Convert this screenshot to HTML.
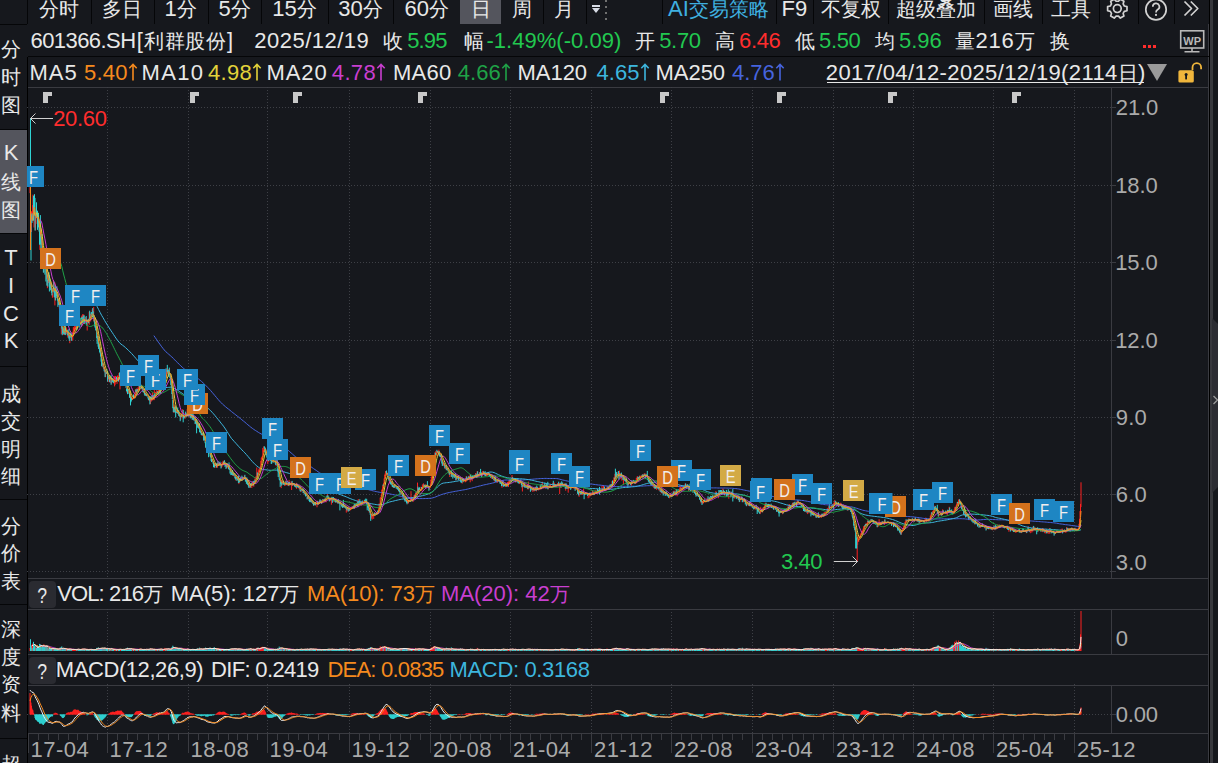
<!DOCTYPE html>
<html><head><meta charset="utf-8"><style>
*{margin:0;padding:0;box-sizing:border-box}
html,body{width:1218px;height:763px;overflow:hidden;background:#16181d;font-family:"Liberation Sans",sans-serif;color:#e8e8e8}
.a{position:absolute;white-space:nowrap;font-size:20px;line-height:20px}
.t{position:absolute;white-space:nowrap;font-size:20px;line-height:20px;height:20px}
.l{font-size:22px}
svg.ar{position:relative;display:inline-block;vertical-align:top;margin-top:0px;margin-left:0px}
.sep{position:absolute;background:#050608}
svg{position:absolute;left:0;top:0}
svg text{font-family:"Liberation Sans",sans-serif}
</style></head><body>
<svg width="1218" height="763" viewBox="0 0 1218 763">
<line x1="28" y1="87.5" x2="1208" y2="87.5" stroke="#3a3b41" stroke-width="1" />
<line x1="28" y1="578.5" x2="1208" y2="578.5" stroke="#3a3b41" stroke-width="1" />
<line x1="28" y1="609.5" x2="1208" y2="609.5" stroke="#3a3b41" stroke-width="1" />
<line x1="28" y1="654.5" x2="1208" y2="654.5" stroke="#3a3b41" stroke-width="1" />
<line x1="28" y1="685.5" x2="1208" y2="685.5" stroke="#3a3b41" stroke-width="1" />
<line x1="28" y1="733.5" x2="1208" y2="733.5" stroke="#3a3b41" stroke-width="1" />
<line x1="1208.5" y1="24" x2="1208.5" y2="763" stroke="#3a3b41" stroke-width="1" />
<line x1="1209.5" y1="0" x2="1209.5" y2="763" stroke="#000" stroke-width="1" />
<rect x="1210" y="0" width="3" height="763" fill="#37383d" />
<line x1="1111.5" y1="87" x2="1111.5" y2="578" stroke="#3a3b41" stroke-width="1" />
<line x1="1111.5" y1="609" x2="1111.5" y2="654" stroke="#3a3b41" stroke-width="1" />
<line x1="1111.5" y1="685" x2="1111.5" y2="733" stroke="#3a3b41" stroke-width="1" />
<line x1="27.5" y1="57" x2="27.5" y2="763" stroke="#000" stroke-width="1" />
<line x1="107.5" y1="87" x2="107.5" y2="578" stroke="#3e4046" stroke-width="1" stroke-dasharray="1 2"/>
<line x1="107.5" y1="609" x2="107.5" y2="654" stroke="#3e4046" stroke-width="1" stroke-dasharray="1 2"/>
<line x1="107.5" y1="684" x2="107.5" y2="733" stroke="#3e4046" stroke-width="1" stroke-dasharray="1 2"/>
<line x1="188.5" y1="87" x2="188.5" y2="578" stroke="#3e4046" stroke-width="1" stroke-dasharray="1 2"/>
<line x1="188.5" y1="609" x2="188.5" y2="654" stroke="#3e4046" stroke-width="1" stroke-dasharray="1 2"/>
<line x1="188.5" y1="684" x2="188.5" y2="733" stroke="#3e4046" stroke-width="1" stroke-dasharray="1 2"/>
<line x1="267.5" y1="87" x2="267.5" y2="578" stroke="#3e4046" stroke-width="1" stroke-dasharray="1 2"/>
<line x1="267.5" y1="609" x2="267.5" y2="654" stroke="#3e4046" stroke-width="1" stroke-dasharray="1 2"/>
<line x1="267.5" y1="684" x2="267.5" y2="733" stroke="#3e4046" stroke-width="1" stroke-dasharray="1 2"/>
<line x1="349.5" y1="87" x2="349.5" y2="578" stroke="#3e4046" stroke-width="1" stroke-dasharray="1 2"/>
<line x1="349.5" y1="609" x2="349.5" y2="654" stroke="#3e4046" stroke-width="1" stroke-dasharray="1 2"/>
<line x1="349.5" y1="684" x2="349.5" y2="733" stroke="#3e4046" stroke-width="1" stroke-dasharray="1 2"/>
<line x1="430.5" y1="87" x2="430.5" y2="578" stroke="#3e4046" stroke-width="1" stroke-dasharray="1 2"/>
<line x1="430.5" y1="609" x2="430.5" y2="654" stroke="#3e4046" stroke-width="1" stroke-dasharray="1 2"/>
<line x1="430.5" y1="684" x2="430.5" y2="733" stroke="#3e4046" stroke-width="1" stroke-dasharray="1 2"/>
<line x1="510.5" y1="87" x2="510.5" y2="578" stroke="#3e4046" stroke-width="1" stroke-dasharray="1 2"/>
<line x1="510.5" y1="609" x2="510.5" y2="654" stroke="#3e4046" stroke-width="1" stroke-dasharray="1 2"/>
<line x1="510.5" y1="684" x2="510.5" y2="733" stroke="#3e4046" stroke-width="1" stroke-dasharray="1 2"/>
<line x1="591.5" y1="87" x2="591.5" y2="578" stroke="#3e4046" stroke-width="1" stroke-dasharray="1 2"/>
<line x1="591.5" y1="609" x2="591.5" y2="654" stroke="#3e4046" stroke-width="1" stroke-dasharray="1 2"/>
<line x1="591.5" y1="684" x2="591.5" y2="733" stroke="#3e4046" stroke-width="1" stroke-dasharray="1 2"/>
<line x1="671.5" y1="87" x2="671.5" y2="578" stroke="#3e4046" stroke-width="1" stroke-dasharray="1 2"/>
<line x1="671.5" y1="609" x2="671.5" y2="654" stroke="#3e4046" stroke-width="1" stroke-dasharray="1 2"/>
<line x1="671.5" y1="684" x2="671.5" y2="733" stroke="#3e4046" stroke-width="1" stroke-dasharray="1 2"/>
<line x1="752.5" y1="87" x2="752.5" y2="578" stroke="#3e4046" stroke-width="1" stroke-dasharray="1 2"/>
<line x1="752.5" y1="609" x2="752.5" y2="654" stroke="#3e4046" stroke-width="1" stroke-dasharray="1 2"/>
<line x1="752.5" y1="684" x2="752.5" y2="733" stroke="#3e4046" stroke-width="1" stroke-dasharray="1 2"/>
<line x1="833.5" y1="87" x2="833.5" y2="578" stroke="#3e4046" stroke-width="1" stroke-dasharray="1 2"/>
<line x1="833.5" y1="609" x2="833.5" y2="654" stroke="#3e4046" stroke-width="1" stroke-dasharray="1 2"/>
<line x1="833.5" y1="684" x2="833.5" y2="733" stroke="#3e4046" stroke-width="1" stroke-dasharray="1 2"/>
<line x1="913.5" y1="87" x2="913.5" y2="578" stroke="#3e4046" stroke-width="1" stroke-dasharray="1 2"/>
<line x1="913.5" y1="609" x2="913.5" y2="654" stroke="#3e4046" stroke-width="1" stroke-dasharray="1 2"/>
<line x1="913.5" y1="684" x2="913.5" y2="733" stroke="#3e4046" stroke-width="1" stroke-dasharray="1 2"/>
<line x1="993.5" y1="87" x2="993.5" y2="578" stroke="#3e4046" stroke-width="1" stroke-dasharray="1 2"/>
<line x1="993.5" y1="609" x2="993.5" y2="654" stroke="#3e4046" stroke-width="1" stroke-dasharray="1 2"/>
<line x1="993.5" y1="684" x2="993.5" y2="733" stroke="#3e4046" stroke-width="1" stroke-dasharray="1 2"/>
<line x1="1074.5" y1="87" x2="1074.5" y2="578" stroke="#3e4046" stroke-width="1" stroke-dasharray="1 2"/>
<line x1="1074.5" y1="609" x2="1074.5" y2="654" stroke="#3e4046" stroke-width="1" stroke-dasharray="1 2"/>
<line x1="1074.5" y1="684" x2="1074.5" y2="733" stroke="#3e4046" stroke-width="1" stroke-dasharray="1 2"/>
<line x1="27" y1="107.5" x2="1111" y2="107.5" stroke="#3e4046" stroke-width="1" stroke-dasharray="1 2"/>
<line x1="1111" y1="107.5" x2="1116" y2="107.5" stroke="#3a3b41" stroke-width="1" />
<line x1="27" y1="185.5" x2="1111" y2="185.5" stroke="#3e4046" stroke-width="1" stroke-dasharray="1 2"/>
<line x1="1111" y1="185.5" x2="1116" y2="185.5" stroke="#3a3b41" stroke-width="1" />
<line x1="27" y1="262.5" x2="1111" y2="262.5" stroke="#3e4046" stroke-width="1" stroke-dasharray="1 2"/>
<line x1="1111" y1="262.5" x2="1116" y2="262.5" stroke="#3a3b41" stroke-width="1" />
<line x1="27" y1="340.5" x2="1111" y2="340.5" stroke="#3e4046" stroke-width="1" stroke-dasharray="1 2"/>
<line x1="1111" y1="340.5" x2="1116" y2="340.5" stroke="#3a3b41" stroke-width="1" />
<line x1="27" y1="417.5" x2="1111" y2="417.5" stroke="#3e4046" stroke-width="1" stroke-dasharray="1 2"/>
<line x1="1111" y1="417.5" x2="1116" y2="417.5" stroke="#3a3b41" stroke-width="1" />
<line x1="27" y1="494.5" x2="1111" y2="494.5" stroke="#3e4046" stroke-width="1" stroke-dasharray="1 2"/>
<line x1="1111" y1="494.5" x2="1116" y2="494.5" stroke="#3a3b41" stroke-width="1" />
<line x1="27" y1="571.5" x2="1111" y2="571.5" stroke="#3e4046" stroke-width="1" stroke-dasharray="1 2"/>
<line x1="1111" y1="571.5" x2="1116" y2="571.5" stroke="#3a3b41" stroke-width="1" />
<line x1="27" y1="714.5" x2="1111" y2="714.5" stroke="#3e4046" stroke-width="1" stroke-dasharray="1 2"/>
<line x1="1111" y1="714.5" x2="1116" y2="714.5" stroke="#3a3b41" stroke-width="1" />
<line x1="28.5" y1="733" x2="28.5" y2="753" stroke="#3a3b41" stroke-width="1" />
<line x1="38.5" y1="733" x2="38.5" y2="740" stroke="#3a3b41" stroke-width="1" />
<line x1="48.5" y1="733" x2="48.5" y2="740" stroke="#3a3b41" stroke-width="1" />
<line x1="58.5" y1="733" x2="58.5" y2="740" stroke="#3a3b41" stroke-width="1" />
<line x1="68.5" y1="733" x2="68.5" y2="740" stroke="#3a3b41" stroke-width="1" />
<line x1="77.5" y1="733" x2="77.5" y2="740" stroke="#3a3b41" stroke-width="1" />
<line x1="87.5" y1="733" x2="87.5" y2="740" stroke="#3a3b41" stroke-width="1" />
<line x1="97.5" y1="733" x2="97.5" y2="740" stroke="#3a3b41" stroke-width="1" />
<line x1="107.5" y1="733" x2="107.5" y2="753" stroke="#3a3b41" stroke-width="1" />
<line x1="117.5" y1="733" x2="117.5" y2="740" stroke="#3a3b41" stroke-width="1" />
<line x1="127.5" y1="733" x2="127.5" y2="740" stroke="#3a3b41" stroke-width="1" />
<line x1="137.5" y1="733" x2="137.5" y2="740" stroke="#3a3b41" stroke-width="1" />
<line x1="148.5" y1="733" x2="148.5" y2="740" stroke="#3a3b41" stroke-width="1" />
<line x1="158.5" y1="733" x2="158.5" y2="740" stroke="#3a3b41" stroke-width="1" />
<line x1="168.5" y1="733" x2="168.5" y2="740" stroke="#3a3b41" stroke-width="1" />
<line x1="178.5" y1="733" x2="178.5" y2="740" stroke="#3a3b41" stroke-width="1" />
<line x1="188.5" y1="733" x2="188.5" y2="753" stroke="#3a3b41" stroke-width="1" />
<line x1="198.5" y1="733" x2="198.5" y2="740" stroke="#3a3b41" stroke-width="1" />
<line x1="208.5" y1="733" x2="208.5" y2="740" stroke="#3a3b41" stroke-width="1" />
<line x1="218.5" y1="733" x2="218.5" y2="740" stroke="#3a3b41" stroke-width="1" />
<line x1="228.5" y1="733" x2="228.5" y2="740" stroke="#3a3b41" stroke-width="1" />
<line x1="237.5" y1="733" x2="237.5" y2="740" stroke="#3a3b41" stroke-width="1" />
<line x1="247.5" y1="733" x2="247.5" y2="740" stroke="#3a3b41" stroke-width="1" />
<line x1="257.5" y1="733" x2="257.5" y2="740" stroke="#3a3b41" stroke-width="1" />
<line x1="267.5" y1="733" x2="267.5" y2="753" stroke="#3a3b41" stroke-width="1" />
<line x1="277.5" y1="733" x2="277.5" y2="740" stroke="#3a3b41" stroke-width="1" />
<line x1="288.5" y1="733" x2="288.5" y2="740" stroke="#3a3b41" stroke-width="1" />
<line x1="298.5" y1="733" x2="298.5" y2="740" stroke="#3a3b41" stroke-width="1" />
<line x1="308.5" y1="733" x2="308.5" y2="740" stroke="#3a3b41" stroke-width="1" />
<line x1="318.5" y1="733" x2="318.5" y2="740" stroke="#3a3b41" stroke-width="1" />
<line x1="328.5" y1="733" x2="328.5" y2="740" stroke="#3a3b41" stroke-width="1" />
<line x1="339.5" y1="733" x2="339.5" y2="740" stroke="#3a3b41" stroke-width="1" />
<line x1="349.5" y1="733" x2="349.5" y2="753" stroke="#3a3b41" stroke-width="1" />
<line x1="359.5" y1="733" x2="359.5" y2="740" stroke="#3a3b41" stroke-width="1" />
<line x1="369.5" y1="733" x2="369.5" y2="740" stroke="#3a3b41" stroke-width="1" />
<line x1="379.5" y1="733" x2="379.5" y2="740" stroke="#3a3b41" stroke-width="1" />
<line x1="390.5" y1="733" x2="390.5" y2="740" stroke="#3a3b41" stroke-width="1" />
<line x1="400.5" y1="733" x2="400.5" y2="740" stroke="#3a3b41" stroke-width="1" />
<line x1="410.5" y1="733" x2="410.5" y2="740" stroke="#3a3b41" stroke-width="1" />
<line x1="420.5" y1="733" x2="420.5" y2="740" stroke="#3a3b41" stroke-width="1" />
<line x1="430.5" y1="733" x2="430.5" y2="753" stroke="#3a3b41" stroke-width="1" />
<line x1="440.5" y1="733" x2="440.5" y2="740" stroke="#3a3b41" stroke-width="1" />
<line x1="450.5" y1="733" x2="450.5" y2="740" stroke="#3a3b41" stroke-width="1" />
<line x1="460.5" y1="733" x2="460.5" y2="740" stroke="#3a3b41" stroke-width="1" />
<line x1="470.5" y1="733" x2="470.5" y2="740" stroke="#3a3b41" stroke-width="1" />
<line x1="480.5" y1="733" x2="480.5" y2="740" stroke="#3a3b41" stroke-width="1" />
<line x1="490.5" y1="733" x2="490.5" y2="740" stroke="#3a3b41" stroke-width="1" />
<line x1="500.5" y1="733" x2="500.5" y2="740" stroke="#3a3b41" stroke-width="1" />
<line x1="510.5" y1="733" x2="510.5" y2="753" stroke="#3a3b41" stroke-width="1" />
<line x1="520.5" y1="733" x2="520.5" y2="740" stroke="#3a3b41" stroke-width="1" />
<line x1="530.5" y1="733" x2="530.5" y2="740" stroke="#3a3b41" stroke-width="1" />
<line x1="540.5" y1="733" x2="540.5" y2="740" stroke="#3a3b41" stroke-width="1" />
<line x1="550.5" y1="733" x2="550.5" y2="740" stroke="#3a3b41" stroke-width="1" />
<line x1="561.5" y1="733" x2="561.5" y2="740" stroke="#3a3b41" stroke-width="1" />
<line x1="571.5" y1="733" x2="571.5" y2="740" stroke="#3a3b41" stroke-width="1" />
<line x1="581.5" y1="733" x2="581.5" y2="740" stroke="#3a3b41" stroke-width="1" />
<line x1="591.5" y1="733" x2="591.5" y2="753" stroke="#3a3b41" stroke-width="1" />
<line x1="601.5" y1="733" x2="601.5" y2="740" stroke="#3a3b41" stroke-width="1" />
<line x1="611.5" y1="733" x2="611.5" y2="740" stroke="#3a3b41" stroke-width="1" />
<line x1="621.5" y1="733" x2="621.5" y2="740" stroke="#3a3b41" stroke-width="1" />
<line x1="631.5" y1="733" x2="631.5" y2="740" stroke="#3a3b41" stroke-width="1" />
<line x1="641.5" y1="733" x2="641.5" y2="740" stroke="#3a3b41" stroke-width="1" />
<line x1="651.5" y1="733" x2="651.5" y2="740" stroke="#3a3b41" stroke-width="1" />
<line x1="661.5" y1="733" x2="661.5" y2="740" stroke="#3a3b41" stroke-width="1" />
<line x1="671.5" y1="733" x2="671.5" y2="753" stroke="#3a3b41" stroke-width="1" />
<line x1="681.5" y1="733" x2="681.5" y2="740" stroke="#3a3b41" stroke-width="1" />
<line x1="691.5" y1="733" x2="691.5" y2="740" stroke="#3a3b41" stroke-width="1" />
<line x1="701.5" y1="733" x2="701.5" y2="740" stroke="#3a3b41" stroke-width="1" />
<line x1="712.5" y1="733" x2="712.5" y2="740" stroke="#3a3b41" stroke-width="1" />
<line x1="722.5" y1="733" x2="722.5" y2="740" stroke="#3a3b41" stroke-width="1" />
<line x1="732.5" y1="733" x2="732.5" y2="740" stroke="#3a3b41" stroke-width="1" />
<line x1="742.5" y1="733" x2="742.5" y2="740" stroke="#3a3b41" stroke-width="1" />
<line x1="752.5" y1="733" x2="752.5" y2="753" stroke="#3a3b41" stroke-width="1" />
<line x1="762.5" y1="733" x2="762.5" y2="740" stroke="#3a3b41" stroke-width="1" />
<line x1="772.5" y1="733" x2="772.5" y2="740" stroke="#3a3b41" stroke-width="1" />
<line x1="782.5" y1="733" x2="782.5" y2="740" stroke="#3a3b41" stroke-width="1" />
<line x1="792.5" y1="733" x2="792.5" y2="740" stroke="#3a3b41" stroke-width="1" />
<line x1="803.5" y1="733" x2="803.5" y2="740" stroke="#3a3b41" stroke-width="1" />
<line x1="813.5" y1="733" x2="813.5" y2="740" stroke="#3a3b41" stroke-width="1" />
<line x1="823.5" y1="733" x2="823.5" y2="740" stroke="#3a3b41" stroke-width="1" />
<line x1="833.5" y1="733" x2="833.5" y2="753" stroke="#3a3b41" stroke-width="1" />
<line x1="843.5" y1="733" x2="843.5" y2="740" stroke="#3a3b41" stroke-width="1" />
<line x1="853.5" y1="733" x2="853.5" y2="740" stroke="#3a3b41" stroke-width="1" />
<line x1="863.5" y1="733" x2="863.5" y2="740" stroke="#3a3b41" stroke-width="1" />
<line x1="873.5" y1="733" x2="873.5" y2="740" stroke="#3a3b41" stroke-width="1" />
<line x1="883.5" y1="733" x2="883.5" y2="740" stroke="#3a3b41" stroke-width="1" />
<line x1="893.5" y1="733" x2="893.5" y2="740" stroke="#3a3b41" stroke-width="1" />
<line x1="903.5" y1="733" x2="903.5" y2="740" stroke="#3a3b41" stroke-width="1" />
<line x1="913.5" y1="733" x2="913.5" y2="753" stroke="#3a3b41" stroke-width="1" />
<line x1="923.5" y1="733" x2="923.5" y2="740" stroke="#3a3b41" stroke-width="1" />
<line x1="933.5" y1="733" x2="933.5" y2="740" stroke="#3a3b41" stroke-width="1" />
<line x1="943.5" y1="733" x2="943.5" y2="740" stroke="#3a3b41" stroke-width="1" />
<line x1="953.5" y1="733" x2="953.5" y2="740" stroke="#3a3b41" stroke-width="1" />
<line x1="963.5" y1="733" x2="963.5" y2="740" stroke="#3a3b41" stroke-width="1" />
<line x1="973.5" y1="733" x2="973.5" y2="740" stroke="#3a3b41" stroke-width="1" />
<line x1="983.5" y1="733" x2="983.5" y2="740" stroke="#3a3b41" stroke-width="1" />
<line x1="993.5" y1="733" x2="993.5" y2="753" stroke="#3a3b41" stroke-width="1" />
<line x1="1003.5" y1="733" x2="1003.5" y2="740" stroke="#3a3b41" stroke-width="1" />
<line x1="1013.5" y1="733" x2="1013.5" y2="740" stroke="#3a3b41" stroke-width="1" />
<line x1="1023.5" y1="733" x2="1023.5" y2="740" stroke="#3a3b41" stroke-width="1" />
<line x1="1034.5" y1="733" x2="1034.5" y2="740" stroke="#3a3b41" stroke-width="1" />
<line x1="1044.5" y1="733" x2="1044.5" y2="740" stroke="#3a3b41" stroke-width="1" />
<line x1="1054.5" y1="733" x2="1054.5" y2="740" stroke="#3a3b41" stroke-width="1" />
<line x1="1064.5" y1="733" x2="1064.5" y2="740" stroke="#3a3b41" stroke-width="1" />
<line x1="1074.5" y1="733" x2="1074.5" y2="753" stroke="#3a3b41" stroke-width="1" />
<path d="M30.0 184.1V193.1M31.5 211.3V232.0M32.5 205.1V220.8M33.0 194.6V209.3M34.0 198.0V227.5M35.5 215.6V230.4M36.0 212.3V223.9M37.0 210.9V216.7M38.0 213.3V225.6M39.9 222.1V249.9M41.4 228.7V244.8M42.9 255.4V260.6M43.9 254.1V272.5M45.4 258.2V268.9M46.4 265.7V279.3M47.4 279.4V288.2M48.4 272.0V283.1M49.9 281.8V287.8M50.9 284.7V288.6M52.4 293.7V297.7M52.9 288.7V297.3M53.4 280.0V290.7M54.9 282.5V305.4M55.9 293.3V298.2M58.4 300.2V305.2M59.3 298.2V308.5M60.8 316.8V318.9M61.3 315.6V334.3M63.8 330.6V335.0M64.8 326.0V334.9M65.8 332.0V334.3M66.3 327.4V333.8M66.8 328.9V331.4M67.8 333.3V337.6M68.3 332.7V336.6M69.8 333.2V343.2M70.3 333.3V334.8M71.8 335.6V340.3M72.3 335.2V337.6M72.8 331.7V340.5M73.3 327.4V336.2M73.8 326.9V332.8M74.3 327.8V331.3M74.8 323.9V330.8M75.3 323.1V328.9M75.8 326.9V329.9M76.3 326.7V330.0M77.3 324.5V328.6M77.8 318.0V325.8M80.2 319.9V324.7M81.7 315.6V324.7M82.7 314.1V325.6M83.7 314.3V323.2M85.2 319.9V322.9M85.7 317.0V320.5M87.2 319.2V330.5M89.2 311.7V324.8M90.2 317.0V319.7M90.7 313.7V321.5M92.2 309.6V313.8M93.7 306.9V321.2M97.6 335.8V339.0M99.1 345.5V348.3M102.6 362.6V366.7M103.6 366.7V369.1M104.6 367.9V372.4M105.6 372.4V377.2M108.1 376.2V382.1M108.6 376.4V379.4M110.1 378.7V382.9M110.6 375.9V378.9M111.6 377.6V383.6M112.1 377.8V381.7M113.1 378.0V381.0M114.1 380.6V383.8M114.6 376.3V386.4M115.1 375.9V384.8M115.6 376.1V382.0M116.0 376.7V382.1M117.0 376.5V383.9M117.5 375.7V379.8M118.0 375.4V378.2M119.0 372.9V378.7M120.0 372.1V389.4M120.5 371.7V375.7M121.0 371.0V372.7M123.0 373.0V377.2M125.5 381.2V384.3M127.0 384.4V392.8M128.0 389.1V393.8M130.0 391.9V397.6M132.0 397.7V400.1M132.5 398.0V399.9M133.0 395.3V398.9M134.0 394.6V398.6M134.5 395.6V397.9M135.0 392.6V398.4M135.4 389.4V393.4M136.4 388.5V393.3M137.9 387.4V391.8M138.4 388.2V390.2M138.9 385.8V390.5M139.9 379.0V389.6M141.9 386.8V389.6M143.9 390.9V392.8M145.4 392.6V395.7M146.9 394.2V396.1M147.4 395.1V395.4M148.9 396.2V400.6M150.4 396.7V404.0M151.4 396.8V401.5M152.4 392.4V400.4M153.4 395.9V400.1M154.3 385.9V400.1M155.3 391.8V397.4M155.8 392.0V393.3M156.3 392.5V394.2M156.8 389.7V394.1M158.3 390.5V394.7M158.8 388.2V393.3M159.3 387.8V392.1M160.8 387.5V393.7M161.3 385.3V388.7M162.8 386.0V389.8M163.3 385.4V388.2M163.8 382.4V386.8M164.3 380.8V384.0M164.8 376.9V381.7M165.3 375.3V378.4M166.3 370.1V377.4M166.8 368.3V373.5M168.8 369.0V376.8M173.7 405.4V412.7M175.2 406.6V412.6M176.7 410.7V412.6M177.2 409.0V412.9M178.2 411.1V414.1M179.2 413.2V416.3M180.7 414.9V419.7M181.2 412.7V416.5M182.2 414.6V418.2M182.7 409.2V415.4M184.2 415.3V418.3M185.2 412.7V418.6M187.2 409.1V416.6M188.7 414.0V416.7M189.7 413.9V415.9M191.2 413.0V418.1M192.6 415.4V419.6M194.6 419.0V420.8M196.1 420.7V424.7M197.1 422.6V425.4M198.1 423.1V427.7M199.1 423.3V427.8M202.1 432.8V435.9M204.1 435.6V440.9M206.1 444.6V448.2M207.6 448.9V450.5M209.1 452.2V453.3M212.5 459.2V461.4M214.0 462.9V466.7M215.0 465.0V468.0M215.5 463.1V466.1M217.0 466.3V467.6M217.5 462.7V467.6M218.5 463.1V465.7M219.0 463.0V464.6M221.5 464.7V467.8M222.0 462.0V466.9M222.5 462.6V464.0M223.0 460.8V462.9M224.0 460.7V464.4M225.5 463.4V466.1M226.5 463.8V468.0M227.5 466.4V467.3M228.0 465.3V468.4M230.5 470.4V472.5M231.9 471.4V474.1M232.9 473.2V475.9M233.9 472.7V476.3M234.4 473.9V474.6M235.9 475.3V480.6M236.4 476.7V478.9M237.9 477.1V480.2M238.9 480.4V484.1M239.9 477.5V481.4M241.4 478.7V480.8M242.4 476.7V480.1M243.4 477.0V478.1M244.4 475.5V477.8M249.4 481.5V487.5M249.8 483.6V486.1M250.8 483.3V487.4M251.8 483.1V488.0M252.3 482.3V485.4M252.8 481.3V485.4M253.8 481.9V486.7M254.8 478.5V482.5M255.8 476.7V480.9M256.3 476.0V479.5M256.8 467.5V477.2M257.8 472.8V478.5M258.3 470.5V474.9M258.8 469.4V472.4M259.3 468.1V470.8M259.8 469.4V471.4M260.3 466.6V469.5M260.8 460.9V466.9M261.3 457.8V462.6M261.8 457.1V459.1M262.3 455.9V458.9M262.8 447.9V457.0M263.3 450.0V452.3M263.8 446.4V451.7M266.3 453.5V455.1M267.8 458.0V464.2M268.8 457.6V461.8M270.2 457.9V459.7M272.2 460.6V462.4M273.2 459.7V461.6M274.2 460.7V461.9M274.7 460.6V462.2M276.2 461.6V466.2M276.7 461.2V461.7M281.2 479.9V488.1M282.2 481.6V484.6M282.7 480.7V483.6M284.7 483.9V485.9M285.2 484.6V485.3M285.7 480.7V485.3M287.2 483.6V485.4M287.7 484.7V485.5M289.1 479.9V486.2M290.6 483.0V485.3M291.1 481.3V483.1M291.6 481.9V490.0M292.6 483.7V485.8M293.6 483.5V485.3M295.6 484.6V487.2M296.6 482.9V488.9M298.1 486.7V487.1M299.1 487.3V489.2M299.6 486.6V489.4M301.1 488.1V492.1M303.6 490.9V492.8M304.6 492.7V494.1M306.1 493.0V495.9M307.5 497.0V499.2M308.5 495.0V499.1M310.5 497.5V502.1M311.5 501.3V502.1M312.5 502.7V503.7M314.0 502.5V505.9M315.0 502.1V505.0M316.0 503.2V504.5M316.5 501.9V504.3M317.0 500.6V507.3M318.5 502.6V505.0M319.5 500.3V504.0M320.5 500.4V503.0M322.0 500.2V503.2M322.5 499.4V500.7M324.0 499.0V501.9M325.0 497.9V501.4M326.0 498.6V502.4M326.4 496.9V500.1M327.4 494.2V498.5M329.9 499.6V501.2M330.4 497.6V500.3M331.4 497.7V504.7M332.9 498.1V500.2M333.9 498.2V502.2M334.9 498.8V501.0M335.9 500.0V502.8M337.4 500.3V503.1M338.9 502.2V504.0M340.4 502.3V504.9M341.9 504.1V506.6M342.9 504.1V507.7M344.4 505.3V506.9M345.3 506.3V507.9M346.3 508.4V512.6M347.3 506.8V509.5M347.8 507.0V511.5M348.8 508.2V509.2M349.8 509.6V511.1M350.3 508.8V510.0M350.8 507.4V509.7M351.3 506.8V508.8M351.8 506.7V508.3M352.3 506.6V508.6M353.8 505.0V507.1M354.8 504.9V507.0M355.3 503.6V506.0M356.3 503.0V506.0M357.3 501.3V505.8M358.3 499.1V506.3M359.3 501.3V505.5M361.3 501.4V505.7M361.8 502.1V502.5M362.8 503.3V504.0M363.3 502.0V503.1M363.8 500.6V502.7M364.3 500.6V502.1M366.2 500.4V501.8M369.2 509.3V512.5M371.2 516.2V518.7M371.7 513.7V517.5M372.2 513.9V519.5M373.2 515.4V516.1M373.7 514.0V518.9M374.2 512.5V516.0M375.2 513.3V515.4M376.2 512.1V513.8M377.2 511.4V514.8M378.2 510.2V512.3M378.7 506.9V511.9M379.2 503.3V507.0M380.2 497.7V505.0M380.7 496.8V499.3M381.2 495.0V496.4M381.7 490.1V496.3M382.2 488.9V491.2M382.7 485.4V490.9M383.6 483.1V486.5M384.1 478.5V484.5M384.6 474.8V479.2M385.1 473.5V476.0M385.6 471.0V474.5M387.1 473.8V475.7M387.6 472.8V474.9M388.6 477.5V480.0M389.6 479.5V483.5M391.6 481.3V484.8M393.1 485.6V487.5M394.1 483.7V487.8M395.1 484.3V486.8M397.1 486.2V489.3M399.1 488.3V491.8M400.6 492.5V493.8M401.1 492.1V494.7M401.6 491.6V494.0M403.0 493.9V498.2M405.5 497.3V500.8M407.5 499.8V503.4M408.5 499.9V503.5M409.0 500.3V501.9M409.5 500.0V501.1M410.5 498.3V501.7M411.0 491.2V498.6M412.5 497.1V501.0M413.0 497.3V502.0M413.5 497.3V498.7M414.0 495.3V498.9M414.5 495.2V497.4M415.5 492.9V497.2M416.5 491.5V494.0M417.0 491.4V493.1M417.5 482.6V492.5M419.0 487.8V492.1M420.5 489.2V490.9M421.0 486.8V491.3M421.9 487.1V490.5M422.4 484.4V488.8M422.9 485.7V486.8M423.4 483.3V486.8M425.9 484.2V488.2M427.9 486.1V486.7M429.4 486.5V489.6M429.9 486.6V488.2M430.4 484.0V487.5M430.9 479.6V484.2M431.4 476.7V482.6M431.9 474.6V479.6M432.4 470.4V474.6M432.9 467.7V471.0M433.4 463.1V469.0M433.9 460.6V463.4M434.4 456.2V463.7M434.9 452.4V457.4M435.9 450.9V456.1M436.4 451.4V452.7M437.9 450.7V454.4M438.9 449.7V455.4M439.9 452.8V456.3M442.8 462.8V465.1M443.3 462.5V465.8M443.8 464.1V465.0M445.3 465.7V469.1M445.8 465.1V467.2M446.8 468.1V470.2M447.3 467.5V469.2M448.8 471.6V473.6M449.8 471.9V477.0M450.3 472.1V473.8M450.8 471.1V472.1M451.8 473.5V476.8M452.3 472.7V474.6M453.8 473.6V476.7M454.8 475.0V477.8M456.3 475.9V480.2M457.3 475.7V479.0M457.8 475.6V477.5M459.3 478.2V479.7M460.2 477.6V479.6M462.2 477.6V483.6M464.2 480.1V481.3M465.2 479.6V482.3M465.7 478.2V481.8M466.2 476.2V481.5M467.7 478.3V480.0M468.2 476.7V478.8M469.2 475.7V478.3M469.7 476.3V478.6M470.2 474.2V482.3M471.2 477.7V479.4M472.2 476.0V481.2M473.7 476.3V477.8M474.2 474.8V477.6M475.7 473.0V475.8M477.2 471.0V478.1M478.2 474.1V476.0M478.7 473.9V476.0M479.1 474.4V475.4M479.6 472.1V475.5M482.1 472.5V476.4M482.6 471.3V475.4M483.1 470.8V472.6M484.1 472.2V475.2M486.1 474.2V476.2M486.6 472.9V476.1M487.6 473.2V475.7M488.1 471.9V473.8M490.1 475.6V476.4M491.1 475.7V476.8M491.6 476.1V478.7M493.1 476.6V479.2M493.6 479.0V480.0M494.6 477.5V481.5M496.6 480.6V482.1M497.1 481.0V482.7M497.6 479.3V482.4M502.0 483.6V487.7M502.5 481.9V484.6M504.0 483.6V485.7M505.5 483.1V486.8M506.5 484.4V486.6M507.5 481.9V485.3M508.0 482.3V485.0M508.5 481.7V486.9M509.0 480.2V483.2M509.5 479.7V481.5M510.5 479.1V480.5M511.5 478.1V481.3M512.0 475.0V479.1M513.5 478.9V479.8M514.5 478.6V481.6M516.0 480.7V482.5M516.5 479.8V481.9M517.4 480.1V481.9M519.4 480.3V484.0M519.9 480.1V484.1M520.9 481.8V483.2M522.4 485.0V491.5M523.4 483.6V486.9M523.9 483.1V485.6M524.9 485.8V487.2M525.4 485.3V487.3M527.4 484.7V489.3M528.4 481.6V489.4M529.9 485.3V488.4M530.9 487.2V490.9M531.4 487.5V489.3M532.9 488.9V492.0M533.4 488.6V490.6M534.4 489.2V491.3M534.9 487.2V490.9M535.4 487.3V489.4M536.4 486.9V491.4M538.3 487.6V490.3M538.8 488.5V490.2M539.3 487.7V489.8M539.8 486.7V487.4M540.8 484.4V489.3M541.3 486.9V489.1M542.3 481.7V487.8M542.8 484.9V486.5M544.3 484.2V488.3M545.3 485.2V487.6M546.3 484.0V488.4M547.3 486.8V488.0M548.3 486.1V489.3M548.8 485.7V486.8M549.8 484.8V487.5M550.3 484.0V487.3M551.8 486.4V488.1M552.8 482.9V487.3M553.8 484.1V486.2M554.3 482.6V485.1M555.3 484.5V487.0M556.7 484.2V486.6M557.7 483.0V485.6M558.2 483.2V484.8M559.2 484.9V487.0M559.7 483.0V494.0M560.2 482.8V484.2M561.2 483.0V487.9M562.2 482.8V486.1M563.7 485.0V486.5M564.2 483.3V486.0M565.7 483.7V490.7M566.7 486.8V487.5M567.2 486.7V488.5M568.2 487.0V492.7M568.7 486.8V489.0M569.7 480.2V487.7M570.2 486.7V488.2M571.2 486.7V488.7M571.7 486.1V488.1M572.2 485.0V488.0M573.2 487.3V488.3M573.7 485.3V487.9M574.2 486.2V489.1M574.6 486.4V487.9M575.6 489.8V490.2M576.1 486.2V490.1M576.6 488.7V489.1M578.1 490.5V494.6M579.1 490.3V496.8M581.1 491.0V495.0M582.1 491.3V495.0M583.6 488.5V494.5M585.1 492.2V495.0M585.6 492.6V493.6M586.6 492.8V493.8M587.1 492.9V493.9M588.1 493.6V498.3M589.1 494.4V497.6M589.6 493.1V495.9M590.6 494.8V496.3M591.1 493.5V494.8M591.6 493.3V495.3M592.1 492.6V494.0M592.6 490.6V495.1M593.6 492.7V494.5M594.5 492.0V494.6M595.0 490.5V492.7M595.5 490.5V491.9M596.5 491.2V494.1M597.0 490.0V492.8M598.0 490.1V493.7M599.0 489.5V492.7M601.0 490.3V492.3M601.5 489.1V491.2M602.0 485.3V491.6M603.0 488.8V490.5M603.5 485.3V490.0M604.0 486.9V491.1M605.0 489.5V490.3M605.5 488.3V490.6M606.0 488.5V490.5M607.0 486.5V489.8M607.5 487.0V487.7M609.0 485.7V489.2M609.5 485.2V487.1M611.0 484.2V486.1M612.0 481.2V485.5M612.9 480.7V485.1M613.4 480.2V481.9M613.9 477.3V481.8M614.9 473.8V481.3M615.9 472.8V477.4M617.9 472.2V474.2M619.4 470.7V477.9M620.9 473.3V478.7M621.9 475.0V480.6M623.4 476.7V484.6M624.4 478.5V480.4M625.9 479.2V482.5M627.4 482.4V484.3M628.4 483.0V485.1M629.4 481.7V483.9M629.9 481.8V483.5M630.9 482.1V484.9M631.4 481.4V485.6M632.3 481.0V483.6M632.8 481.8V483.3M633.3 479.8V483.4M634.8 481.8V483.8M635.8 481.2V484.0M636.3 478.0V482.2M636.8 477.6V479.8M637.3 476.0V479.1M638.8 476.9V479.0M639.8 475.4V478.4M640.3 476.1V479.9M640.8 475.9V477.4M641.8 475.4V476.3M642.8 474.1V477.6M643.8 475.4V477.2M644.3 473.2V475.7M645.8 473.5V477.9M646.8 475.5V477.0M649.3 479.3V482.0M651.2 482.0V485.3M652.7 485.1V486.6M653.2 485.0V485.4M653.7 483.9V487.5M654.7 484.4V489.1M656.7 485.2V489.9M657.2 484.6V487.5M658.2 487.2V488.1M659.2 486.4V490.9M659.7 487.2V489.6M660.7 490.0V492.0M661.2 489.1V493.4M662.7 489.9V493.6M663.7 492.0V493.9M664.7 491.4V494.0M665.7 492.3V495.0M666.7 493.6V494.6M669.2 496.7V498.0M669.7 496.6V498.3M670.2 495.2V497.2M670.6 493.0V495.6M671.6 494.4V496.7M673.1 491.3V495.9M674.1 490.6V494.5M674.6 491.7V493.4M676.1 488.9V495.2M677.1 492.0V496.3M677.6 490.1V493.0M679.1 490.0V492.5M679.6 488.5V491.3M680.1 484.9V490.2M680.6 487.0V490.9M681.6 488.2V490.6M682.1 486.6V490.0M682.6 487.3V488.6M683.1 485.7V489.9M684.1 486.4V487.7M685.1 483.7V488.0M686.1 483.9V488.0M687.1 485.3V486.9M688.6 486.6V490.9M689.5 486.2V489.7M691.0 488.6V491.2M691.5 487.8V490.9M693.5 490.5V491.5M694.0 489.5V492.3M696.5 493.2V496.0M701.0 498.3V503.3M702.5 500.8V503.8M703.0 501.6V502.1M703.5 499.8V503.4M704.0 499.4V500.6M705.0 501.5V502.4M705.5 500.9V502.1M706.5 500.2V502.1M707.0 498.2V501.7M707.5 499.1V501.2M708.4 499.0V501.5M708.9 497.4V500.9M709.9 497.3V499.8M711.9 496.2V499.3M712.9 495.3V497.6M713.4 495.9V497.6M714.4 495.2V497.4M714.9 495.4V497.1M715.9 491.1V496.7M717.4 493.5V496.1M717.9 493.3V494.5M718.4 492.8V498.2M719.4 490.8V495.1M721.9 491.2V493.4M722.9 488.4V493.5M723.9 490.7V494.6M724.9 492.8V495.8M725.4 493.0V494.0M725.9 491.7V493.3M727.8 492.1V496.7M728.8 492.2V498.7M729.3 491.5V494.1M730.3 493.7V494.8M731.3 491.9V496.8M732.3 493.4V496.7M733.3 494.8V497.8M734.3 496.8V498.6M735.3 496.4V497.1M735.8 495.7V497.0M737.3 497.1V498.4M737.8 496.1V498.5M738.8 497.3V500.2M739.8 499.0V502.1M740.3 498.6V500.2M741.3 496.4V499.9M743.3 499.7V502.3M743.8 498.7V501.6M746.7 503.2V506.2M747.2 502.2V504.5M748.7 503.2V506.0M749.2 501.8V506.2M750.7 501.2V505.2M751.7 504.3V506.4M754.2 506.0V509.3M755.2 507.4V508.2M755.7 506.6V509.7M758.2 507.3V511.2M760.2 511.6V514.1M760.7 506.8V512.6M761.2 509.6V511.4M762.7 508.1V512.4M763.2 507.2V509.2M764.2 506.4V507.7M764.7 505.1V507.7M765.2 502.7V505.1M766.6 505.1V505.4M767.1 504.7V505.6M768.1 503.6V506.7M769.1 504.6V506.3M770.6 504.6V507.3M772.1 506.5V508.1M774.1 506.9V509.7M775.1 506.2V507.5M777.6 509.5V511.7M778.1 509.5V511.1M780.1 510.9V513.0M781.1 510.8V512.8M782.1 510.2V513.1M782.6 511.3V514.2M783.6 509.9V512.9M784.1 509.2V510.5M785.0 508.6V511.9M786.5 508.0V510.5M787.5 507.6V510.8M788.0 506.3V510.5M789.0 504.4V509.2M789.5 504.2V508.3M791.5 505.3V507.3M792.0 503.8V507.8M792.5 502.7V506.7M793.5 502.8V506.1M794.5 502.3V505.1M796.0 502.5V503.4M797.0 501.1V504.2M797.5 500.8V503.2M800.0 503.5V504.9M800.5 502.5V504.5M802.5 506.0V508.6M803.0 505.5V507.2M803.9 506.4V510.9M805.4 509.2V512.1M806.4 509.8V511.5M807.4 508.2V514.1M808.9 510.3V513.5M811.4 511.1V514.7M813.9 513.2V515.8M814.4 513.6V514.7M815.4 514.9V515.5M816.4 515.9V517.8M817.4 516.1V516.9M817.9 513.2V517.2M819.4 515.9V517.7M819.9 515.4V517.7M820.4 515.2V516.4M821.4 514.4V517.8M822.4 514.1V516.5M823.8 512.7V516.6M824.8 512.1V514.2M825.3 512.4V513.6M825.8 511.7V513.1M826.3 510.8V512.9M826.8 510.2V512.6M827.3 507.9V512.1M828.3 509.6V511.4M828.8 506.2V510.5M830.3 506.3V508.2M831.3 506.2V507.8M832.3 504.3V505.8M833.8 502.8V507.1M834.3 502.3V505.4M834.8 500.0V503.7M836.3 503.1V505.3M837.3 502.8V504.8M838.8 504.0V506.8M840.3 503.1V505.8M840.8 502.7V506.0M842.2 506.0V507.8M843.2 506.5V509.7M844.7 506.4V508.9M845.2 505.3V506.9M846.2 505.8V509.8M847.7 507.0V510.6M850.2 507.3V509.3M851.2 510.8V512.0M857.2 539.9V561.2M857.7 540.5V544.8M858.2 539.2V541.6M858.7 537.3V542.0M859.2 536.9V538.2M859.7 535.8V537.8M860.2 534.7V536.7M860.7 533.6V534.9M861.2 532.7V533.9M861.6 530.8V533.8M862.1 530.8V532.8M862.6 530.7V532.1M863.1 528.6V532.1M863.6 526.4V529.1M864.1 526.0V527.6M865.1 524.6V526.8M866.1 522.8V525.6M867.1 522.9V524.9M867.6 520.5V523.9M868.6 521.0V522.7M869.6 521.8V523.2M870.1 520.7V522.9M870.6 519.6V521.8M871.6 519.8V520.4M872.6 519.8V521.7M874.1 521.1V523.8M875.1 521.8V523.6M876.1 523.4V524.8M877.6 525.5V527.2M878.1 523.3V526.8M878.6 523.4V524.7M879.1 519.2V525.2M880.5 521.9V525.1M881.5 522.2V525.0M882.5 521.3V523.7M883.5 521.6V523.7M884.5 519.5V524.8M886.0 522.9V523.7M887.5 521.5V522.8M888.5 522.1V523.0M889.5 522.3V523.6M890.0 521.5V523.4M892.0 521.9V525.6M893.0 523.0V524.2M894.0 523.9V527.0M896.0 526.3V527.0M896.5 525.9V526.8M899.0 529.7V530.3M900.4 530.2V533.9M901.4 531.0V534.6M901.9 531.1V532.8M902.4 528.5V531.0M902.9 528.2V529.3M903.4 526.3V529.1M903.9 525.8V527.6M904.4 525.2V526.4M904.9 522.1V525.8M905.4 520.4V522.9M906.4 520.2V521.3M907.4 519.9V521.6M907.9 519.6V521.1M908.9 518.3V521.4M909.9 519.4V520.5M911.4 519.6V521.4M911.9 518.7V519.6M913.4 520.1V520.8M913.9 519.3V521.7M914.9 517.7V521.2M916.9 519.3V521.5M917.9 518.6V521.5M919.3 520.3V524.0M920.3 521.2V522.2M920.8 521.1V522.1M921.8 519.6V521.6M922.3 520.1V520.7M924.3 520.9V521.8M924.8 519.5V523.0M925.3 518.4V521.1M925.8 517.6V520.4M926.8 519.7V522.4M927.3 519.7V520.1M927.8 519.1V520.1M928.3 519.0V521.3M929.3 518.1V520.5M929.8 518.1V519.8M930.3 515.8V520.2M930.8 514.6V516.8M931.3 512.7V514.8M932.3 513.2V514.2M932.8 510.9V513.3M933.3 510.7V511.7M933.8 508.0V512.8M934.8 505.7V509.3M938.7 515.2V516.7M939.2 514.6V515.1M939.7 514.0V515.0M940.2 513.3V514.4M940.7 512.8V514.4M941.7 512.5V515.5M942.7 509.3V515.2M944.7 512.1V513.4M945.2 511.8V512.9M946.2 511.0V514.0M946.7 511.2V512.2M947.2 510.4V515.0M948.2 510.7V512.9M949.2 506.8V512.6M953.2 512.2V514.1M953.7 511.7V513.5M954.2 509.3V513.2M954.7 507.4V511.0M955.2 506.6V508.5M956.2 505.3V508.8M956.7 503.9V506.1M957.1 502.2V504.2M958.1 502.3V505.7M958.6 499.8V503.9M959.1 499.0V501.1M960.1 500.7V503.3M964.1 510.9V515.5M966.1 512.0V516.9M969.1 517.1V520.3M970.6 518.7V519.6M972.6 519.8V521.1M973.6 520.4V521.8M974.6 521.6V524.2M976.5 522.3V523.7M978.0 523.9V526.5M979.5 525.4V527.1M980.5 525.5V527.7M982.0 523.9V527.1M983.0 526.0V526.5M983.5 525.8V526.7M985.0 526.2V528.5M986.5 526.8V529.7M987.0 526.8V527.8M988.0 526.1V528.0M989.0 526.7V529.4M990.0 527.4V529.2M990.5 527.1V528.4M991.5 527.7V529.6M992.5 529.0V530.2M993.0 527.0V529.7M994.5 528.6V529.5M995.0 525.4V530.2M996.4 525.9V528.5M997.4 526.5V528.8M997.9 524.3V527.6M998.4 525.1V526.3M999.4 524.7V528.1M1000.9 525.2V526.8M1001.9 524.5V526.2M1002.4 525.0V526.3M1003.4 525.7V527.9M1005.4 526.5V527.7M1006.4 526.3V529.0M1008.9 528.1V531.7M1009.4 527.5V529.1M1009.9 527.9V529.4M1010.9 528.8V530.6M1011.4 528.6V529.6M1011.9 527.7V530.6M1012.9 530.1V531.0M1013.9 531.0V532.1M1015.3 531.4V532.3M1015.8 532.0V532.7M1016.3 530.7V532.3M1016.8 530.4V531.4M1017.3 530.1V530.9M1018.3 530.1V530.9M1019.8 530.7V531.8M1020.8 531.9V532.6M1021.3 530.6V533.1M1022.3 529.9V532.1M1024.8 530.5V531.8M1025.3 530.2V531.9M1026.3 529.8V533.2M1027.3 529.4V531.3M1028.3 526.3V529.3M1029.8 530.8V531.7M1030.3 529.0V533.2M1031.8 529.3V532.6M1032.8 527.6V531.6M1033.2 526.3V529.2M1034.2 527.5V529.2M1035.2 527.6V531.1M1036.2 528.9V530.3M1037.2 527.7V531.0M1038.2 530.0V531.5M1038.7 528.7V530.6M1040.2 529.6V530.8M1041.2 529.0V531.8M1041.7 529.5V530.5M1042.7 528.0V532.1M1043.7 528.9V531.4M1044.7 531.3V532.8M1045.2 530.2V533.5M1046.2 530.0V532.7M1047.2 530.0V533.1M1048.2 530.7V533.9M1049.7 528.0V533.8M1050.7 529.9V532.2M1051.7 531.0V532.9M1052.2 531.3V532.3M1054.6 532.4V534.4M1055.6 532.2V533.8M1056.1 531.4V532.1M1056.6 529.8V531.5M1057.6 531.0V531.7M1060.1 530.8V532.5M1060.6 531.4V532.1M1061.1 529.0V532.4M1061.6 530.7V532.1M1062.1 528.5V531.1M1063.1 530.3V532.3M1064.1 529.8V531.2M1065.1 531.7V532.5M1065.6 531.0V532.3M1066.1 529.8V532.4M1066.6 527.2V530.3M1068.1 528.1V530.3M1069.1 528.1V529.9M1069.6 528.9V529.1M1070.6 528.2V530.4M1071.1 528.0V528.9M1072.0 527.6V529.9M1073.0 528.7V530.9M1074.0 529.6V530.5M1074.5 528.3V530.4M1075.5 529.7V530.6M1076.0 528.6V530.5M1076.5 529.4V530.7M1077.0 528.7V530.6M1077.5 529.1V530.0M1078.0 529.4V530.2M1078.5 528.2V530.1M1079.0 523.8V528.6M1079.5 518.9V524.9M1080.0 511.1V519.9M1080.5 503.9V514.8M1081.0 482.3V507.1" stroke="#ff2020" stroke-width="1" fill="none"/>
<path d="M30.5 184.9V223.0M31.0 214.4V260.5M32.0 213.3V222.9M33.5 195.7V220.7M34.5 194.2V212.3M35.0 197.9V230.5M36.5 202.3V217.8M37.5 210.7V229.9M38.5 212.8V227.4M39.0 223.1V231.6M39.5 225.7V244.7M40.4 215.1V244.6M40.9 235.6V248.5M41.9 234.0V253.3M42.4 248.3V260.8M43.4 253.8V272.7M44.4 253.9V268.2M44.9 264.0V274.6M45.9 262.7V281.5M46.9 269.1V285.6M47.9 279.5V286.6M48.9 272.3V280.4M49.4 275.2V291.5M50.4 279.5V290.3M51.4 283.3V292.8M51.9 287.7V295.4M53.9 281.4V292.4M54.4 289.2V297.4M55.4 285.2V300.5M56.4 289.7V296.2M56.9 286.4V298.1M57.4 295.1V300.7M57.9 299.1V306.9M58.8 298.7V305.0M59.8 302.2V309.9M60.3 305.3V317.6M61.8 314.9V328.6M62.3 326.5V335.2M62.8 327.3V333.1M63.3 329.2V333.9M64.3 328.2V334.4M65.3 325.0V335.1M67.3 329.9V335.4M68.8 329.2V338.5M69.3 335.7V340.9M70.8 332.5V337.8M71.3 333.9V340.9M76.8 324.9V329.9M78.2 315.9V323.8M78.7 318.9V324.6M79.2 319.8V327.7M79.7 322.7V324.2M80.7 318.0V319.7M81.2 317.4V326.9M82.2 317.0V322.9M83.2 315.4V323.3M84.2 315.3V323.4M84.7 319.0V324.0M86.2 316.0V322.0M86.7 320.3V325.5M87.7 320.2V321.9M88.2 319.3V322.6M88.7 318.8V323.3M89.7 310.7V318.9M91.2 312.2V317.1M91.7 312.1V314.2M92.7 308.1V317.0M93.2 311.3V318.9M94.2 315.3V322.3M94.7 317.6V326.5M95.2 322.3V327.9M95.7 325.6V330.3M96.2 328.4V330.7M96.7 325.9V338.1M97.1 336.1V343.9M98.1 336.0V346.7M98.6 342.2V349.1M99.6 344.7V352.3M100.1 348.4V353.4M100.6 348.4V356.6M101.1 353.5V361.6M101.6 357.1V366.3M102.1 361.5V364.7M103.1 363.1V367.4M104.1 367.1V371.3M105.1 370.0V377.1M106.1 369.0V372.5M106.6 372.1V373.8M107.1 372.7V374.1M107.6 371.7V381.6M109.1 375.3V379.0M109.6 376.6V382.0M111.1 375.1V384.8M112.6 378.1V382.3M113.6 379.5V383.1M116.5 376.8V381.6M118.5 377.1V381.6M119.5 372.6V378.9M121.5 369.1V375.4M122.0 371.4V377.5M122.5 375.3V376.8M123.5 372.1V380.7M124.0 375.9V378.1M124.5 374.0V382.5M125.0 380.4V385.4M126.0 382.1V387.9M126.5 388.4V391.4M127.5 380.0V394.2M128.5 389.0V390.4M129.0 389.2V393.9M129.5 392.7V397.8M130.5 393.8V405.4M131.0 396.4V402.2M131.5 397.9V400.7M133.5 394.5V397.9M135.9 389.4V392.3M136.9 389.7V393.7M137.4 389.1V391.2M139.4 381.9V388.8M140.4 383.9V387.5M140.9 385.3V386.0M141.4 384.8V388.7M142.4 386.1V389.1M142.9 386.9V392.1M143.4 391.1V392.4M144.4 390.3V394.6M144.9 392.7V395.8M145.9 393.4V395.7M146.4 393.8V396.3M147.9 396.2V398.4M148.4 397.7V400.0M149.4 397.3V400.5M149.9 396.8V404.4M150.9 396.3V399.2M151.9 396.2V400.2M152.9 395.0V398.2M153.9 394.7V398.6M154.8 393.4V396.4M157.3 391.3V393.1M157.8 391.5V394.9M159.8 385.9V393.8M160.3 385.3V393.6M161.8 385.1V388.7M162.3 387.8V388.8M165.8 368.6V378.2M167.3 364.9V372.0M167.8 370.0V372.4M168.3 370.1V376.8M169.3 367.6V374.5M169.8 373.6V377.7M170.3 373.9V379.4M170.8 376.5V385.0M171.3 380.7V387.5M171.8 385.2V394.0M172.3 392.7V399.1M172.8 399.6V408.2M173.3 407.0V412.2M174.2 407.3V409.2M174.7 408.1V412.4M175.7 406.3V417.5M176.2 411.5V413.0M177.7 407.5V413.7M178.7 410.1V415.8M179.7 414.3V416.7M180.2 415.6V421.2M181.7 414.7V417.1M183.2 410.0V422.3M183.7 415.3V418.4M184.7 415.9V418.2M185.7 411.6V415.2M186.2 413.8V416.9M186.7 413.6V416.0M187.7 410.0V415.7M188.2 412.9V416.3M189.2 411.2V416.3M190.2 412.9V417.2M190.7 414.3V418.4M191.7 414.3V417.7M192.2 414.1V419.9M193.1 413.4V419.0M193.6 415.3V420.4M194.1 416.3V419.0M195.1 417.0V424.0M195.6 419.4V423.6M196.6 419.8V433.3M197.6 421.8V427.7M198.6 424.1V428.6M199.6 423.3V432.3M200.1 429.3V432.0M200.6 430.5V433.0M201.1 432.5V434.6M201.6 432.8V435.1M202.6 434.2V435.3M203.1 432.3V435.2M203.6 432.8V440.5M204.6 436.7V440.2M205.1 437.8V443.2M205.6 442.1V447.7M206.6 445.2V447.5M207.1 443.1V451.5M208.1 449.0V451.9M208.6 450.1V457.2M209.6 451.0V453.2M210.1 453.2V456.5M210.6 454.4V457.5M211.1 455.0V461.0M211.5 459.0V462.1M212.0 459.6V461.2M213.0 461.3V463.7M213.5 461.4V467.3M214.5 463.7V467.5M216.0 463.5V465.9M216.5 463.5V467.6M218.0 461.0V465.0M219.5 462.4V465.5M220.0 461.7V464.6M220.5 463.3V465.2M221.0 463.8V468.5M223.5 461.6V464.1M224.5 460.3V462.1M225.0 461.9V466.9M226.0 464.0V469.0M227.0 463.0V467.2M228.5 466.2V469.1M229.0 462.4V469.6M229.5 468.9V469.8M230.0 468.1V473.6M230.9 469.5V475.1M231.4 471.9V474.9M232.4 470.0V475.2M233.4 472.7V475.6M234.9 473.5V478.3M235.4 476.7V479.5M236.9 476.8V480.8M237.4 479.1V480.2M238.4 475.6V483.0M239.4 478.5V482.5M240.4 477.5V481.0M240.9 479.1V480.4M241.9 475.6V480.9M242.9 476.9V478.2M243.9 477.1V477.4M244.9 474.8V478.5M245.4 477.6V481.7M245.9 477.4V480.5M246.4 479.5V483.9M246.9 477.5V482.8M247.4 480.1V484.8M247.9 482.5V485.1M248.4 483.0V486.6M248.9 486.1V488.0M250.3 483.7V487.7M251.3 482.8V485.5M253.3 480.9V485.6M254.3 480.7V483.7M255.3 479.6V481.2M257.3 472.4V478.6M264.3 446.2V448.5M264.8 447.0V452.4M265.3 447.9V452.7M265.8 449.2V455.2M266.8 452.7V457.5M267.3 454.3V460.3M268.3 457.0V461.0M269.2 456.4V458.9M269.7 457.9V460.3M270.7 458.2V460.9M271.2 460.1V463.9M271.7 460.4V463.8M272.7 460.9V462.2M273.7 461.6V462.6M275.2 459.8V463.6M275.7 462.2V465.0M277.2 459.4V465.2M277.7 463.4V471.5M278.2 468.9V477.0M278.7 470.9V472.7M279.2 471.2V479.6M279.7 478.9V480.4M280.2 478.1V486.9M280.7 481.5V483.9M281.7 482.0V485.6M283.2 481.0V484.6M283.7 481.1V484.5M284.2 483.2V485.1M286.2 480.9V484.3M286.7 483.2V484.8M288.1 481.6V484.0M288.6 482.4V485.8M289.6 482.0V485.1M290.1 483.7V484.9M292.1 480.9V485.5M293.1 483.0V484.7M294.1 483.1V485.4M294.6 484.0V486.4M295.1 485.8V487.0M296.1 484.7V487.7M297.1 483.7V485.8M297.6 485.3V487.4M298.6 485.6V487.9M300.1 486.2V491.3M300.6 490.3V491.4M301.6 488.9V490.3M302.1 489.9V490.7M302.6 489.3V491.0M303.1 488.4V493.0M304.1 489.6V493.6M305.1 493.1V495.2M305.6 492.8V496.5M306.6 494.5V495.7M307.1 496.3V499.4M308.0 495.6V497.6M309.0 497.0V500.9M309.5 498.9V501.7M310.0 499.2V502.2M311.0 497.7V502.1M312.0 499.4V503.0M313.0 501.7V504.2M313.5 503.0V505.6M314.5 503.0V504.7M315.5 502.1V505.4M317.5 501.3V504.6M318.0 503.1V504.4M319.0 501.1V503.7M320.0 499.2V502.0M321.0 500.1V502.9M321.5 501.7V503.7M323.0 498.9V500.4M323.5 500.0V500.9M324.5 499.2V500.9M325.5 498.4V500.8M326.9 495.6V498.0M327.9 495.2V497.9M328.4 496.6V497.6M328.9 496.8V499.3M329.4 498.4V501.4M330.9 498.0V500.4M331.9 496.8V497.9M332.4 497.3V502.8M333.4 497.0V500.4M334.4 498.4V501.4M335.4 499.0V502.4M336.4 499.9V502.1M336.9 500.9V502.4M337.9 500.2V503.7M338.4 499.1V502.9M339.4 501.8V503.7M339.9 502.4V510.4M340.9 503.4V504.0M341.4 504.1V506.5M342.4 504.0V507.9M343.4 499.9V507.0M343.9 505.6V507.5M344.9 504.4V507.8M345.8 506.4V508.8M346.8 507.2V510.4M348.3 507.7V511.5M349.3 507.9V510.6M352.8 506.4V507.7M353.3 506.1V507.9M354.3 503.8V508.7M355.8 504.0V506.1M356.8 503.0V505.7M357.8 501.6V507.2M358.8 501.3V504.7M359.8 499.2V503.3M360.3 502.5V503.4M360.8 501.8V504.6M362.3 500.5V503.2M364.7 499.7V501.1M365.2 500.1V501.4M365.7 498.6V502.5M366.7 498.8V504.5M367.2 502.1V510.3M367.7 504.5V507.5M368.2 504.7V508.2M368.7 503.8V511.0M369.7 508.6V512.4M370.2 511.8V514.8M370.7 514.1V520.9M372.7 514.4V516.0M374.7 512.6V514.9M375.7 513.4V514.4M376.7 512.1V514.6M377.7 510.5V512.1M379.7 504.4V504.9M383.2 484.3V486.0M386.1 471.6V472.5M386.6 470.5V474.5M388.1 473.1V479.0M389.1 477.2V481.2M390.1 479.2V480.3M390.6 480.1V484.2M391.1 481.7V484.8M392.1 482.2V486.5M392.6 484.8V487.0M393.6 485.4V487.7M394.6 484.8V487.8M395.6 485.2V486.1M396.1 485.5V488.5M396.6 487.5V488.5M397.6 486.2V489.7M398.1 486.4V489.0M398.6 488.2V491.2M399.6 489.0V492.3M400.1 490.9V494.8M402.1 490.8V495.4M402.6 494.7V497.2M403.5 493.1V497.3M404.0 496.0V498.7M404.5 498.6V500.3M405.0 499.3V501.7M406.0 498.4V501.5M406.5 499.8V502.9M407.0 502.2V504.3M408.0 501.3V502.6M410.0 500.2V501.8M411.5 497.5V500.3M412.0 499.7V501.4M415.0 495.2V497.4M416.0 492.3V493.4M418.0 486.7V492.7M418.5 488.3V491.6M419.5 487.3V490.2M420.0 489.1V489.9M421.5 487.1V488.8M423.9 484.5V485.7M424.4 485.0V486.6M424.9 484.6V486.8M425.4 486.1V487.8M426.4 485.1V487.1M426.9 485.4V487.2M427.4 481.1V486.4M428.4 485.9V488.1M428.9 486.4V490.8M435.4 452.7V455.2M436.9 449.8V451.7M437.4 451.0V452.7M438.4 451.5V453.3M439.4 451.2V456.5M440.4 454.5V457.1M440.8 455.5V457.2M441.3 454.5V459.5M441.8 458.9V463.5M442.3 460.2V466.0M444.3 463.1V466.3M444.8 465.3V468.4M446.3 465.2V470.2M447.8 468.2V470.8M448.3 470.6V472.7M449.3 471.3V474.8M451.3 470.8V476.9M452.8 472.2V478.6M453.3 475.1V476.6M454.3 474.5V477.8M455.3 473.0V477.0M455.8 475.4V480.3M456.8 476.7V478.9M458.3 475.8V480.2M458.8 476.1V479.5M459.8 478.4V479.1M460.7 477.3V482.3M461.2 480.2V482.4M461.7 480.3V482.8M462.7 478.4V480.4M463.2 478.6V482.2M463.7 480.4V481.0M464.7 480.7V481.0M466.7 476.5V479.9M467.2 479.0V479.8M468.7 476.3V477.9M470.7 474.6V478.8M471.7 476.7V479.3M472.7 475.4V479.1M473.2 476.1V478.1M474.7 475.2V476.3M475.2 475.1V477.3M476.2 473.7V477.2M476.7 475.8V477.8M477.7 471.4V477.2M480.1 472.2V474.4M480.6 468.9V475.3M481.1 472.2V474.0M481.6 473.1V477.1M483.6 471.4V474.6M484.6 472.8V475.2M485.1 471.1V476.2M485.6 473.9V475.9M487.1 474.4V475.1M488.6 472.0V474.2M489.1 472.9V476.7M489.6 474.1V476.3M490.6 474.5V477.8M492.1 475.3V477.3M492.6 476.0V478.9M494.1 478.3V480.6M495.1 475.7V479.6M495.6 477.6V481.7M496.1 479.4V482.0M498.1 479.7V480.7M498.5 479.5V481.2M499.0 480.8V481.1M499.5 480.5V482.2M500.0 480.6V483.7M500.5 482.0V483.6M501.0 481.4V483.7M501.5 482.8V486.1M503.0 481.0V486.0M503.5 485.0V486.7M504.5 484.0V486.2M505.0 486.0V486.4M506.0 483.4V485.8M507.0 483.3V487.0M510.0 479.2V480.9M511.0 478.9V482.5M512.5 477.3V480.4M513.0 477.8V481.4M514.0 478.0V481.5M515.0 478.8V480.7M515.5 478.9V482.2M517.0 478.0V481.8M517.9 478.5V483.1M518.4 482.3V483.3M518.9 482.0V483.4M520.4 479.6V482.8M521.4 482.0V485.0M521.9 481.3V487.3M522.9 484.6V486.5M524.4 483.3V487.5M525.9 485.8V488.0M526.4 487.2V487.4M526.9 486.4V487.8M527.9 485.4V489.0M528.9 485.5V488.2M529.4 485.8V487.2M530.4 485.9V491.8M531.9 488.4V490.3M532.4 488.5V490.1M533.9 487.6V490.6M535.9 486.8V491.0M536.8 485.5V487.6M537.3 487.0V490.0M537.8 489.1V490.1M540.3 484.6V489.0M541.8 484.0V486.7M543.3 484.9V487.3M543.8 487.1V487.7M544.8 482.6V486.4M545.8 484.8V488.6M546.8 482.9V488.2M547.8 481.8V489.3M549.3 485.9V487.9M550.8 486.1V487.8M551.3 486.5V487.5M552.3 486.3V487.1M553.3 480.8V487.0M554.8 484.0V486.9M555.7 484.4V486.4M556.2 485.1V486.3M557.2 484.3V485.3M558.7 481.7V486.2M560.7 482.7V487.5M561.7 481.3V485.1M562.7 482.5V485.7M563.2 484.9V486.9M564.7 484.0V486.4M565.2 483.5V488.6M566.2 483.4V488.9M567.7 487.5V488.7M569.2 486.2V488.1M570.7 485.9V489.9M572.7 486.0V488.0M575.1 485.7V490.8M577.1 487.8V489.1M577.6 489.3V493.8M578.6 491.4V495.4M579.6 491.3V492.8M580.1 491.8V493.1M580.6 491.6V494.5M581.6 491.0V494.2M582.6 491.5V493.1M583.1 491.9V493.9M584.1 493.3V499.2M584.6 493.3V495.1M586.1 492.6V494.9M587.6 492.9V496.0M588.6 493.6V494.9M590.1 492.3V495.5M593.1 491.5V494.9M594.0 492.8V495.1M596.0 491.1V493.5M597.5 489.0V492.0M598.5 490.1V492.4M599.5 486.9V494.6M600.0 488.9V491.4M600.5 490.2V492.9M602.5 488.7V490.2M604.5 486.5V491.0M606.5 488.3V489.8M608.0 485.9V488.9M608.5 487.0V488.5M610.0 484.5V487.2M610.5 484.7V486.9M611.5 484.2V487.2M612.5 480.5V486.5M614.4 477.6V479.6M615.4 468.7V478.6M616.4 471.9V477.5M616.9 474.3V475.7M617.4 474.0V475.0M618.4 471.0V474.6M618.9 473.6V479.6M619.9 473.3V474.6M620.4 475.1V476.9M621.4 472.6V477.5M622.4 474.9V476.8M622.9 475.1V479.8M623.9 477.1V480.0M624.9 477.4V481.1M625.4 479.0V481.4M626.4 478.4V482.4M626.9 481.5V484.7M627.9 482.6V487.8M628.9 482.4V483.3M630.4 482.6V485.1M631.9 480.1V484.0M633.8 480.0V481.6M634.3 481.2V483.6M635.3 480.4V483.5M637.8 477.2V478.9M638.3 477.1V479.8M639.3 476.2V478.4M641.3 475.7V476.2M642.3 474.6V477.1M643.3 474.5V477.3M644.8 473.9V475.8M645.3 475.0V479.0M646.3 474.3V476.2M647.3 470.9V480.0M647.8 478.7V479.5M648.3 477.8V481.4M648.8 479.8V482.0M649.8 479.3V483.4M650.3 481.9V483.8M650.8 482.5V484.8M651.7 481.3V484.5M652.2 483.1V486.0M654.2 484.2V488.2M655.2 484.8V488.1M655.7 486.9V488.9M656.2 485.5V487.8M657.7 485.0V488.7M658.7 486.9V489.5M660.2 488.6V491.9M661.7 489.3V492.7M662.2 491.0V492.5M663.2 491.1V495.5M664.2 492.2V493.2M665.2 492.6V496.0M666.2 491.2V495.4M667.2 493.1V496.2M667.7 494.5V496.3M668.2 494.7V496.1M668.7 495.0V497.9M671.1 494.1V497.3M672.1 493.3V496.3M672.6 493.9V495.8M673.6 491.5V494.3M675.1 491.2V494.6M675.6 493.6V494.7M676.6 489.2V494.3M678.1 489.0V491.7M678.6 490.5V491.5M681.1 487.9V489.3M683.6 485.8V488.4M684.6 486.5V488.6M685.6 483.4V487.6M686.6 485.6V488.3M687.6 484.2V485.8M688.1 484.8V489.0M689.1 486.4V490.4M690.0 483.6V489.9M690.5 487.6V491.0M692.0 486.2V490.2M692.5 487.9V490.3M693.0 487.9V492.8M694.5 488.9V493.3M695.0 491.7V493.6M695.5 492.9V494.9M696.0 493.8V496.7M697.0 493.1V494.6M697.5 492.5V495.7M698.0 495.3V496.5M698.5 494.5V496.9M699.0 496.2V496.8M699.5 495.7V499.5M700.0 496.4V500.0M700.5 499.4V501.6M701.5 498.4V502.2M702.0 501.8V505.0M704.5 499.5V502.1M706.0 500.1V501.9M708.0 496.2V502.1M709.4 497.4V500.2M710.4 495.8V497.7M710.9 497.5V498.4M711.4 496.2V498.6M712.4 495.4V497.8M713.9 495.6V496.7M715.4 494.5V496.7M716.4 492.3V495.5M716.9 494.5V495.8M718.9 490.0V495.1M719.9 490.3V492.0M720.4 490.0V491.9M720.9 491.1V492.2M721.4 490.0V494.4M722.4 491.5V494.3M723.4 489.7V493.7M724.4 491.0V495.1M726.4 489.9V496.7M726.9 492.5V493.6M727.4 491.8V495.5M728.3 489.3V495.2M729.8 491.0V493.9M730.8 494.1V497.4M731.8 491.7V495.5M732.8 489.1V501.5M733.8 495.8V497.8M734.8 495.8V497.1M736.3 495.5V498.9M736.8 496.1V497.8M738.3 496.0V499.9M739.3 496.5V501.9M740.8 498.9V500.0M741.8 496.5V498.8M742.3 497.3V502.2M742.8 501.5V501.9M744.3 498.5V500.8M744.8 499.0V502.0M745.3 500.4V504.5M745.8 502.7V503.5M746.3 503.6V506.1M747.7 502.5V502.9M748.2 502.8V505.3M749.7 501.3V506.0M750.2 504.4V506.3M751.2 503.7V506.1M752.2 505.9V507.6M752.7 507.3V508.2M753.2 506.5V507.6M753.7 507.4V509.3M754.7 506.5V508.7M756.2 504.8V508.5M756.7 508.0V509.4M757.2 507.4V514.0M757.7 509.1V511.5M758.7 507.8V512.2M759.2 512.1V512.9M759.7 511.8V513.8M761.7 508.9V510.9M762.2 510.1V512.2M763.7 507.0V507.6M765.7 504.0V506.2M766.1 502.8V506.6M767.6 504.1V507.4M768.6 504.0V507.9M769.6 504.3V506.9M770.1 505.5V506.5M771.1 503.7V507.9M771.6 506.9V508.0M772.6 505.8V507.3M773.1 506.5V508.8M773.6 507.6V509.7M774.6 506.4V507.9M775.6 506.4V509.7M776.1 507.9V509.1M776.6 509.4V511.7M777.1 509.6V511.8M778.6 508.8V513.2M779.1 511.8V516.6M779.6 511.0V513.3M780.6 510.9V513.1M781.6 510.7V512.5M783.1 509.3V513.6M784.6 509.1V512.1M785.5 508.9V510.5M786.0 509.4V511.9M787.0 508.4V510.7M788.5 506.8V509.2M790.0 504.9V507.0M790.5 505.9V509.7M791.0 505.8V507.1M793.0 503.2V506.9M794.0 502.1V506.1M795.0 501.6V503.8M795.5 503.6V504.2M796.5 502.2V506.6M798.0 499.9V501.6M798.5 501.8V502.8M799.0 502.9V504.0M799.5 502.7V504.3M801.0 503.2V505.7M801.5 504.9V506.3M802.0 505.1V507.2M803.5 504.6V511.0M804.4 508.2V511.3M804.9 507.9V511.7M805.9 509.7V511.1M806.9 510.8V512.7M807.9 508.3V511.9M808.4 510.2V512.3M809.4 510.3V511.6M809.9 509.9V512.6M810.4 510.8V512.7M810.9 511.5V516.4M811.9 511.2V514.4M812.4 512.8V515.1M812.9 512.5V513.5M813.4 513.1V515.5M814.9 514.1V515.5M815.9 514.6V517.5M816.9 515.3V517.6M818.4 512.4V517.7M818.9 516.8V518.0M820.9 515.2V517.2M821.9 513.7V515.6M822.9 513.6V516.6M823.3 515.3V515.8M824.3 513.4V515.3M827.8 509.6V511.4M829.3 503.4V508.9M829.8 507.1V507.7M830.8 507.2V508.0M831.8 505.0V506.6M832.8 504.4V506.5M833.3 504.7V509.0M835.3 500.9V502.6M835.8 501.8V504.1M836.8 502.4V504.5M837.8 503.4V505.2M838.3 502.0V507.1M839.3 504.0V505.4M839.8 504.4V506.3M841.3 503.8V506.5M841.8 505.9V507.5M842.7 505.6V509.3M843.7 506.2V509.1M844.2 505.4V508.5M845.7 505.4V509.2M846.7 506.5V507.6M847.2 506.4V510.3M848.2 507.2V509.1M848.7 509.0V510.2M849.2 508.0V509.3M849.7 508.9V509.8M850.7 507.9V511.9M851.7 509.9V513.8M852.2 513.7V516.5M852.7 515.6V518.4M853.2 517.1V520.1M853.7 519.1V525.7M854.2 523.9V528.0M854.7 527.2V529.9M855.2 528.3V531.6M855.7 528.0V548.4M856.2 534.5V548.4M856.7 537.5V548.4M864.6 525.4V526.7M865.6 524.1V525.8M866.6 523.9V525.1M868.1 520.6V522.3M869.1 520.7V523.0M871.1 519.2V520.9M872.1 519.2V521.6M873.1 520.1V521.1M873.6 520.4V523.8M874.6 522.5V524.1M875.6 522.2V524.5M876.6 522.3V524.2M877.1 522.9V527.2M879.6 522.9V523.7M880.1 523.1V524.8M881.0 522.8V524.2M882.0 521.4V523.0M883.0 521.5V524.5M884.0 522.6V523.7M885.0 519.4V523.0M885.5 522.4V523.1M886.5 522.1V522.8M887.0 522.2V522.8M888.0 521.2V522.9M889.0 522.5V523.4M890.5 522.7V523.7M891.0 522.1V523.5M891.5 523.5V525.9M892.5 523.3V523.8M893.5 522.1V527.1M894.5 523.0V525.9M895.0 524.4V525.9M895.5 525.1V527.1M897.0 525.6V527.9M897.5 527.2V529.6M898.0 528.0V531.1M898.5 528.3V530.1M899.5 529.2V531.9M899.9 531.4V533.1M900.9 529.7V534.8M905.9 519.5V520.3M906.9 519.5V521.4M908.4 519.3V521.5M909.4 519.0V520.2M910.4 519.1V520.6M910.9 519.5V520.6M912.4 518.3V519.6M912.9 518.8V521.4M914.4 519.1V521.6M915.4 517.4V520.2M915.9 518.9V519.9M916.4 519.8V520.6M917.4 519.1V521.5M918.4 518.7V521.0M918.8 520.5V522.4M919.8 518.7V522.6M921.3 520.3V521.6M922.8 519.9V520.9M923.3 520.1V521.6M923.8 520.8V522.3M926.3 518.0V521.3M928.8 518.6V520.1M931.8 512.1V514.7M934.3 507.0V510.0M935.3 506.0V508.9M935.8 508.3V510.1M936.3 507.6V510.9M936.8 508.6V510.5M937.3 504.8V513.5M937.7 512.1V513.5M938.2 511.4V516.5M941.2 513.1V515.8M942.2 512.3V514.7M943.2 510.2V512.9M943.7 511.4V512.9M944.2 512.0V512.8M945.7 510.6V512.9M947.7 509.7V511.6M948.7 510.0V512.6M949.7 507.5V512.7M950.2 511.9V513.4M950.7 510.1V511.4M951.2 510.8V511.1M951.7 509.4V513.5M952.2 512.7V514.6M952.7 512.7V513.7M955.7 507.3V508.6M957.6 501.8V503.5M959.6 499.3V503.0M960.6 501.1V504.5M961.1 502.7V507.7M961.6 506.1V509.1M962.1 508.6V509.6M962.6 508.8V510.9M963.1 509.9V510.7M963.6 510.1V514.5M964.6 506.8V512.4M965.1 511.1V516.0M965.6 514.5V517.4M966.6 514.7V516.5M967.1 514.4V515.3M967.6 514.4V516.4M968.1 514.2V517.7M968.6 516.9V519.9M969.6 517.0V518.2M970.1 516.7V519.6M971.1 518.2V520.5M971.6 519.1V520.4M972.1 519.5V522.0M973.1 520.8V523.2M974.1 519.8V522.8M975.1 521.1V524.4M975.6 518.6V523.4M976.0 521.8V523.9M977.0 522.9V524.6M977.5 523.9V526.5M978.5 524.4V524.9M979.0 523.6V527.8M980.0 525.3V527.1M981.0 525.4V526.7M981.5 525.0V526.6M982.5 523.5V527.0M984.0 526.3V527.2M984.5 526.2V527.5M985.5 526.1V527.1M986.0 525.6V530.5M987.5 526.8V528.8M988.5 526.4V529.1M989.5 526.9V528.5M991.0 527.2V529.6M992.0 527.6V529.5M993.5 527.6V528.3M994.0 525.9V529.6M995.4 525.2V528.6M995.9 527.7V529.6M996.9 525.7V527.7M998.9 525.4V526.6M999.9 524.8V527.8M1000.4 525.3V526.0M1001.4 525.4V526.1M1002.9 525.3V527.6M1003.9 525.9V527.6M1004.4 526.8V528.3M1004.9 526.9V527.6M1005.9 526.2V528.0M1006.9 526.2V527.0M1007.4 525.8V529.1M1007.9 527.6V529.9M1008.4 528.6V530.0M1010.4 527.8V531.5M1012.4 527.7V530.6M1013.4 530.0V532.0M1014.3 531.0V531.6M1014.8 529.2V531.8M1017.8 530.1V531.4M1018.8 529.4V530.4M1019.3 529.0V532.7M1020.3 531.3V532.7M1021.8 530.6V532.7M1022.8 528.4V530.7M1023.3 528.8V531.9M1023.8 530.8V531.6M1024.3 530.9V531.6M1025.8 529.8V531.7M1026.8 529.5V533.0M1027.8 527.6V529.5M1028.8 527.9V530.1M1029.3 529.7V531.8M1030.8 530.0V530.7M1031.3 528.2V530.9M1032.3 529.5V529.8M1033.7 525.9V529.2M1034.7 527.9V530.0M1035.7 528.0V529.6M1036.7 529.2V534.3M1037.7 527.4V531.7M1039.2 528.7V529.8M1039.7 528.7V529.8M1040.7 528.7V531.5M1042.2 530.0V531.4M1043.2 528.8V531.3M1044.2 529.5V532.2M1045.7 530.3V531.7M1046.7 529.1V533.4M1047.7 530.6V532.4M1048.7 530.2V531.4M1049.2 531.0V532.3M1050.2 528.5V531.7M1051.2 530.3V533.4M1052.6 531.1V532.7M1053.1 530.8V533.2M1053.6 531.5V533.1M1054.1 532.5V535.7M1055.1 532.0V533.9M1057.1 530.3V531.9M1058.1 531.7V533.0M1058.6 531.7V532.0M1059.1 531.4V532.2M1059.6 531.4V532.8M1062.6 529.7V533.4M1063.6 530.3V531.3M1064.6 529.5V531.6M1067.1 527.7V530.9M1067.6 528.4V530.5M1068.6 528.8V530.2M1070.1 528.1V531.8M1071.5 527.8V529.4M1072.5 528.3V530.5M1073.5 528.8V530.4M1075.0 527.8V530.6" stroke="#2fd3d3" stroke-width="1" fill="none"/>
<line x1="30.5" y1="118.5" x2="30.5" y2="187" stroke="#2fd3d3" stroke-width="1" />
<line x1="30.5" y1="187" x2="30.5" y2="250" stroke="#f58a1e" stroke-width="1" />
<path d="M153.9 335.6l1.4 2.1 1.5 2.1 1.5 2.3 1.5 2 1.5 2.1 1.5 2 1.5 1.8 1.5 1.7 1.5 1.3 1.5 1.3 1.5 1.3 1.5 1.3 1.5 1.5 1.4 1.5 1.5 1.5 1.5 1.4 1.5 1.5 1.5 1.5 1.5 1.4 1.5 1.3 1.5 1.2 1.5 1.1 1.5 1 1.5 1 1.5 1 1.4 1 1.5 1 1.5 1 1.5 1.1 1.5 1.1 1.5 1.3 1.5 1.2 1.5 1.4 1.5 1.4 1.5 1.5 1.5 1.5 1.5 1.6 1.5 1.6 1.4 1.7 1.5 1.7 1.5 1.8 1.5 1.8 1.5 1.8 1.5 1.7 1.5 1.6 1.5 1.5 1.5 1.3 1.5 1.3 1.5 1.3 1.5 1.1 1.5 1.2 1.4 1.2 1.5 1.2 1.5 1.1 1.5 1.2 1.5 1.2 1.5 1.1 1.5 1.2 1.5 1.3 1.5 1.2 1.5 1.2 1.5 1.3 1.5 1.3 1.5 1.2 1.4 1.2 1.5 1.1 1.5 1.1 1.5 1 1.5 .9 1.5 1 1.5 .9 1.5 .8 1.5 .8 1.5 .8 1.5 .8 1.5 .8 1.5 .8 1.4 .8 1.5 .8 1.5 .7 1.5 .7 1.5 .8 1.5 .8 1.5 1 1.5 1 1.5 1.1 1.5 1.1 1.5 1.2 1.5 1.1 1.4 1.2 1.5 1.3 1.5 1.3 1.5 1.3 1.5 1.4 1.5 1.2 1.5 1 1.5 1 1.5 .9 1.5 1 1.5 .9 1.5 .9 1.5 .9 1.4 1 1.5 1 1.5 1 1.5 1.1 1.5 1.1 1.5 1 1.5 1 1.5 1.1 1.5 1 1.5 .9 1.5 .9 1.5 .9 1.5 .8 1.4 .7 1.5 .8 1.5 .7 1.5 .6 1.5 .5 1.5 .6 1.5 .5 1.5 .5 1.5 .4 1.5 .5 1.5 .4 1.5 .5 1.5 .6 1.4 .5 1.5 .5 1.5 .6 1.5 .5 1.5 .5 1.5 .4 1.5 .4 1.5 .4 1.5 .4 1.5 .3 1.5 .3 1.5 .3 1.5 .2 1.4 .3 1.5 .3 1.5 .3 1.5 .4 1.5 .4 1.5 .4 1.5 .3 1.5 .4 1.5 .3 1.5 .3 1.5 .3 1.5 .2 1.4 .2 1.5 .1 1.5 .2 1.5 .3 1.5 .4 1.5 .3 1.5 .3 1.5 .3 1.5 .3 1.5 .3 1.5 .4 1.5 .3 1.5 .4 1.4 .3 1.5 .2 1.5 .2 1.5 .2 1.5 .2 1.5 .2 1.5 .2 1.5 .2 1.5 .1 1.5 .1 1.5 .1 1.5 .1 1.5 0 1.4 0 1.5 0 1.5-.1 1.5 0 1.5-.1 1.5-.1 1.5-.1 1.5-.4 1.5-.4 1.5-.6 1.5-.6 1.5-.6 1.5-.6 1.4-.5 1.5-.5 1.5-.4 1.5-.4 1.5-.4 1.5-.3 1.5-.3 1.5-.3 1.5-.3 1.5-.3 1.5-.2 1.5-.3 1.5-.3 1.4-.2 1.5-.3 1.5-.2 1.5-.3 1.5-.3 1.5-.4 1.5-.4 1.5-.3 1.5-.4 1.5-.4 1.5-.4 1.5-.4 1.4-.4 1.5-.3 1.5-.4 1.5-.4 1.5-.3 1.5-.3 1.5-.4 1.5-.3 1.5-.3 1.5-.4 1.5-.3 1.5-.5 1.5-.4 1.4-.4 1.5-.4 1.5-.3 1.5-.3 1.5-.3 1.5-.1 1.5 0 1.5 .1 1.5 0 1.5 .1 1.5 0 1.5 0 1.5 0 1.4-.1 1.5 0 1.5-.1 1.5 0 1.5-.1 1.5-.1 1.5-.1 1.5-.1 1.5-.2 1.5-.1 1.5-.1 1.5-.2 1.5-.1 1.4-.1 1.5-.1 1.5-.1 1.5-.1 1.5 0 1.5-.1 1.5 0 1.5 .1 1.5 0 1.5 0 1.5 0 1.5 0 1.5 0 1.4 .1 1.5 .2 1.5 .4 1.5 .4 1.5 .4 1.5 .3 1.5 .4 1.5 .3 1.5 .3 1.5 .2 1.5 .2 1.5 .2 1.4 .2 1.5 .2 1.5 .1 1.5 .3 1.5 .1 1.5 .2 1.5 .2 1.5 .2 1.5 .1 1.5 .2 1.5 .2 1.5 .2 1.5 .1 1.4 .2 1.5 .2 1.5 .2 1.5 .2 1.5 .1 1.5 .2 1.5 .2 1.5 .2 1.5 .2 1.5 .1 1.5 .2 1.5 .1 1.5 .1 1.4 .2 1.5 0 1.5 0 1.5-.1 1.5 0 1.5-.1 1.5-.1 1.5 0 1.5 0 1.5-.1 1.5 0 1.5 0 1.5 0 1.4 0 1.5 0 1.5 0 1.5 0 1.5 0 1.5-.1 1.5 0 1.5-.1 1.5-.1 1.5-.1 1.5-.1 1.5 0 1.5-.1 1.4 0 1.5 0 1.5 0 1.5-.1 1.5 0 1.5 0 1.5 0 1.5 .1 1.5 0 1.5 .1 1.5 .1 1.5 .1 1.5 .1 1.4 .1 1.5 .1 1.5 .1 1.5 .1 1.5 0 1.5 .1 1.5 0 1.5 .1 1.5 0 1.5 0 1.5 .1 1.5 0 1.4 0 1.5 0 1.5 0 1.5 .1 1.5 .1 1.5 0 1.5 .1 1.5 .2 1.5 .1 1.5 .1 1.5 .1 1.5 .1 1.5 .1 1.4 .1 1.5 0 1.5 .1 1.5 0 1.5 0 1.5 0 1.5 .1 1.5 0 1.5 0 1.5 0 1.5 0 1.5 0 1.5 .1 1.4 0 1.5 .1 1.5 0 1.5 .1 1.5 .2 1.5 .1 1.5 .2 1.5 .2 1.5 .3 1.5 .3 1.5 .3 1.5 .3 1.5 .3 1.4 .3 1.5 .3 1.5 .3 1.5 .3 1.5 .3 1.5 .3 1.5 .3 1.5 .3 1.5 .4 1.5 .4 1.5 .3 1.5 .4 1.5 .3 1.4 .4 1.5 .4 1.5 .3 1.5 .4 1.5 .3 1.5 .3 1.5 .3 1.5 .3 1.5 .3 1.5 .3 1.5 .3 1.5 .3 1.4 .2 1.5 .3 1.5 .2 1.5 .1 1.5 .2 1.5 .1 1.5 .1 1.5 .1 1.5 .1 1.5 .1 1.5 .1 1.5 .2 1.5 .1 1.4 .3 1.5 .2 1.5 .3 1.5 .3 1.5 .3 1.5 .3 1.5 .4 1.5 .3 1.5 .3 1.5 .3 1.5 .3 1.5 .3 1.5 .2 1.4 .2 1.5 .2 1.5 .1 1.5 .1 1.5 .1 1.5 0 1.5 .1 1.5 .1 1.5 0 1.5 .1 1.5 .1 1.5 .1 1.5 .2 1.4 .1 1.5 .2 1.5 .2 1.5 .2 1.5 .2 1.5 .2 1.5 .2 1.5 .4 1.5 .4 1.5 .5 1.5 .5 1.5 .5 1.5 .4 1.4 .5 1.5 .3 1.5 .3 1.5 .3 1.5 .2 1.5 .3 1.5 .2 1.5 .2 1.5 .2 1.5 .2 1.5 .2 1.5 .2 1.4 .2 1.5 .1 1.5 .2 1.5 .1 1.5 .1 1.5 .2 1.5 .2 1.5 .2 1.5 .3 1.5 .2 1.5 .2 1.5 .3 1.5 .2 1.4 .3 1.5 .3 1.5 .2 1.5 .2 1.5 .1 1.5 .1 1.5 .1 1.5 .1 1.5 .1 1.5 .2 1.5 .1 1.5 .2 1.5 .2 1.4 .2 1.5 .2 1.5 .3 1.5 .2 1.5 .2 1.5 .1 1.5 .2 1.5 .1 1.5 0 1.5 0 1.5 0 1.5 0 1.5-.1 1.4 0 1.5 0 1.5 0 1.5-.1 1.5 0 1.5 0 1.5-.1 1.5 0 1.5 0 1.5 0 1.5 0 1.5 .1 1.5 0 1.4-.1 1.5 0 1.5 0 1.5 .1 1.5 0 1.5 .2 1.5 .1 1.5 .1 1.5 .1 1.5 .1 1.5 .2 1.5 .2 1.4 .1 1.5 .1 1.5-.1 1.5-.1 1.5-.1 1.5-.2 1.5-.1 1.5 0 1.5-.1 1.5 .1 1.5 0 1.5 .1 1.5 .1 1.4 0 1.5 .1 1.5 .1 1.5 0 1.5 0 1.5 0 1.5 .1 1.5 0 1.5 .1 1.5 .1 1.5 .1 1.5 0 1.5 .1 1.4 .1 1.5 .1 1.5 .1 1.5 .1 1.5 0 1.5 .1 1.5 0 1.5 0 1.5 0 1.5 0 1.5 .1 1.5 .1 1.5 .1 1.4 .1 1.5 .1 1.5 .1 1.5 .1 1.5 .2 1.5 .1 1.5 .1 1.5 .1 1.5 .1 1.5 .2 1.5 .1 1.5 .1 1.5 .2 1.4 .1 1.5 .2 1.5 .2 1.5 .3 1.5 .3 1.5 .2 1.5 .2 1.5 .2 1.5 .3 1.5 .1 1.5 .2 1.5 .2 1.4 .3 1.5 .2 1.5 .2 1.5 .2 1.5 .2 1.5 .2 1.5 .1 .5-.1" fill="none" stroke="#4664de" stroke-width="1"/>
<path d="M89.7 293.4l1.5 2.2 1.5 2.6 1.5 2.8 1.5 2.6 1.4 2.9 1.5 3 1.5 2.9 1.5 2.9 1.5 2.5 1.5 2.7 1.5 2.5 1.5 2.4 1.5 2.4 1.5 2.3 1.5 2.2 1.5 2.3 1.5 2.3 1.4 2.1 1.5 1.9 1.5 1.8 1.5 1.4 1.5 1.1 1.5 1.1 1.5 1.3 1.5 1.4 1.5 1.4 1.5 1.5 1.5 1.5 1.5 1.7 1.5 1.7 1.4 1.6 1.5 1.7 1.5 1.6 1.5 1.6 1.5 1.6 1.5 1.8 1.5 1.8 1.5 1.9 1.5 1.8 1.5 2.1 1.5 2.1 1.5 2.1 1.5 2 1.4 1.7 1.5 1.4 1.5 1.2 1.5 1 1.5 .8 1.5 .5 1.5 .4 1.5 .1 1.5-.1 1.5-.2 1.5-.1 1.5 .2 1.5 .6 1.4 .7 1.5 .8 1.5 .8 1.5 1 1.5 1.1 1.5 1 1.5 1 1.5 .8 1.5 .7 1.5 .6 1.5 .4 1.5 .5 1.4 .5 1.5 .5 1.5 .7 1.5 .8 1.5 1 1.5 1.1 1.5 1.1 1.5 1.1 1.5 1.1 1.5 1.3 1.5 1.3 1.5 1.4 1.5 1.3 1.4 1.6 1.5 1.6 1.5 1.8 1.5 1.9 1.5 1.8 1.5 1.8 1.5 2 1.5 1.8 1.5 2 1.5 2.2 1.5 2.4 1.5 2.3 1.5 2.4 1.4 2.1 1.5 1.7 1.5 1.7 1.5 1.6 1.5 1.7 1.5 1.7 1.5 1.5 1.5 1.7 1.5 1.5 1.5 1.5 1.5 1.7 1.5 1.7 1.5 1.8 1.4 1.7 1.5 1.7 1.5 1.6 1.5 1.5 1.5 1.3 1.5 1.2 1.5 1 1.5 .8 1.5 .5 1.5 .2 1.5 .2 1.5 .2 1.5 .2 1.4 .1 1.5 0 1.5-.1 1.5-.1 1.5 0 1.5 0 1.5 .2 1.5 .5 1.5 .4 1.5 .5 1.5 .6 1.5 .4 1.4 .4 1.5 .4 1.5 .2 1.5 .3 1.5 .3 1.5 .2 1.5 .1 1.5 .2 1.5 .2 1.5 .2 1.5 .4 1.5 .4 1.5 .3 1.4 .4 1.5 .3 1.5 .3 1.5 .5 1.5 .5 1.5 .5 1.5 .7 1.5 .8 1.5 .8 1.5 .9 1.5 1.2 1.5 1.3 1.5 1.2 1.4 1 1.5 1 1.5 1 1.5 .9 1.5 1 1.5 .9 1.5 1 1.5 .9 1.5 .7 1.5 .5 1.5 .6 1.5 .6 1.5 .5 1.4 .6 1.5 .6 1.5 .7 1.5 .6 1.5 .6 1.5 .5 1.5 .5 1.5 .5 1.5 .4 1.5 .4 1.5 .3 1.5 .3 1.5 .3 1.4 .1 1.5 .2 1.5 .2 1.5 .3 1.5 .4 1.5 .3 1.5 .2 1.5 .3 1.5 .2 1.5 .1 1.5 0 1.5-.2 1.4-.4 1.5-.6 1.5-.6 1.5-.6 1.5-.5 1.5-.4 1.5-.3 1.5-.4 1.5-.4 1.5-.3 1.5-.4 1.5-.3 1.5-.3 1.4-.2 1.5-.2 1.5-.2 1.5-.2 1.5-.2 1.5-.2 1.5-.2 1.5-.2 1.5-.2 1.5-.3 1.5-.4 1.5-.3 1.5-.4 1.4-.3 1.5-.4 1.5-.4 1.5-.5 1.5-.5 1.5-.6 1.5-.9 1.5-1.1 1.5-1.3 1.5-1.5 1.5-1.5 1.5-1.4 1.5-1.1 1.4-.9 1.5-.5 1.5-.2 1.5-.2 1.5-.1 1.5-.2 1.5-.2 1.5-.3 1.5-.2 1.5-.3 1.5-.2 1.5-.3 1.5-.3 1.4-.3 1.5-.4 1.5-.4 1.5-.5 1.5-.6 1.5-.6 1.5-.6 1.5-.5 1.5-.6 1.5-.5 1.5-.4 1.5-.4 1.4-.4 1.5-.4 1.5-.3 1.5-.3 1.5-.3 1.5-.3 1.5-.3 1.5-.4 1.5-.1 1.5 .2 1.5 .4 1.5 .7 1.5 .7 1.4 .7 1.5 .7 1.5 .6 1.5 .5 1.5 .5 1.5 .4 1.5 .4 1.5 .2 1.5 .2 1.5 .1 1.5 .1 1.5 .1 1.5 .1 1.4 .1 1.5 .1 1.5 0 1.5 .1 1.5 .1 1.5 .2 1.5 .2 1.5 .2 1.5 .3 1.5 .3 1.5 .3 1.5 .3 1.5 .4 1.4 .3 1.5 .3 1.5 .4 1.5 .3 1.5 .4 1.5 .3 1.5 .3 1.5 .3 1.5 .3 1.5 .3 1.5 .2 1.5 .2 1.5 .1 1.4 .1 1.5 .1 1.5 .1 1.5 0 1.5 0 1.5 0 1.5 0 1.5 .1 1.5 .2 1.5 .1 1.5 .2 1.5 .2 1.4 .2 1.5 .2 1.5 .3 1.5 .2 1.5 .3 1.5 .2 1.5 .2 1.5 .2 1.5 .1 1.5 .2 1.5 .2 1.5 .2 1.5 0 1.4 .1 1.5 .1 1.5 .1 1.5 .1 1.5 0 1.5 .1 1.5 .1 1.5 .1 1.5 .1 1.5 0 1.5 0 1.5-.1 1.5 0 1.4-.1 1.5-.2 1.5-.2 1.5-.3 1.5-.2 1.5-.3 1.5-.2 1.5-.2 1.5-.1 1.5-.1 1.5-.1 1.5-.1 1.5-.2 1.4-.1 1.5-.1 1.5-.2 1.5-.3 1.5-.4 1.5-.3 1.5-.5 1.5-.4 1.5-.5 1.5-.4 1.5-.4 1.5-.4 1.5-.2 1.4-.3 1.5-.2 1.5-.1 1.5-.1 1.5-.1 1.5-.1 1.5 0 1.5 .1 1.5 .1 1.5 .1 1.5 .1 1.5 .3 1.5 .2 1.4 .3 1.5 .3 1.5 .4 1.5 .4 1.5 .5 1.5 .3 1.5 .4 1.5 .3 1.5 .2 1.5 .2 1.5 .1 1.5 .1 1.4 .1 1.5 .2 1.5 .1 1.5 .2 1.5 .3 1.5 .4 1.5 .5 1.5 .5 1.5 .6 1.5 .7 1.5 .6 1.5 .7 1.5 .5 1.4 .5 1.5 .4 1.5 .3 1.5 .3 1.5 .2 1.5 .2 1.5 .2 1.5 .1 1.5 .1 1.5 0 1.5 0 1.5 0 1.5-.1 1.4 0 1.5-.1 1.5-.1 1.5 .1 1.5 .1 1.5 .1 1.5 .1 1.5 .2 1.5 .3 1.5 .2 1.5 .4 1.5 .3 1.5 .5 1.4 .4 1.5 .4 1.5 .4 1.5 .4 1.5 .4 1.5 .4 1.5 .3 1.5 .4 1.5 .3 1.5 .3 1.5 .2 1.5 .1 1.5 .1 1.4 .1 1.5 .2 1.5 .2 1.5 .2 1.5 .3 1.5 .3 1.5 .3 1.5 .4 1.5 .5 1.5 .5 1.5 .4 1.5 .5 1.4 .5 1.5 .4 1.5 .3 1.5 .4 1.5 .3 1.5 .2 1.5 .2 1.5 .2 1.5 .1 1.5 .1 1.5 .1 1.5 .2 1.5 .1 1.4 .2 1.5 .2 1.5 .2 1.5 .2 1.5 .1 1.5 .2 1.5 .2 1.5 .1 1.5 .2 1.5 .2 1.5 .1 1.5 .1 1.5 .2 1.4 .2 1.5 .2 1.5 .1 1.5 .1 1.5 .1 1.5 0 1.5 0 1.5-.1 1.5-.2 1.5-.2 1.5-.1 1.5-.2 1.5-.1 1.4-.2 1.5 0 1.5-.1 1.5 0 1.5 .1 1.5 0 1.5 .3 1.5 .4 1.5 .6 1.5 .9 1.5 1 1.5 .8 1.5 .7 1.4 .6 1.5 .5 1.5 .4 1.5 .3 1.5 .3 1.5 .2 1.5 .2 1.5 .2 1.5 .2 1.5 .1 1.5 .3 1.5 .1 1.4 .2 1.5 .2 1.5 .2 1.5 .2 1.5 .3 1.5 .3 1.5 .4 1.5 .4 1.5 .4 1.5 .5 1.5 .6 1.5 .6 1.5 .6 1.4 .7 1.5 .6 1.5 .6 1.5 .4 1.5 .4 1.5 .3 1.5 .3 1.5 .2 1.5 .2 1.5 0 1.5-.3 1.5-.4 1.5-.5 1.4-.4 1.5-.3 1.5-.3 1.5-.2 1.5-.1 1.5-.1 1.5 0 1.5-.1 1.5-.2 1.5-.2 1.5-.3 1.5-.4 1.5-.3 1.4-.2 1.5-.3 1.5-.2 1.5-.2 1.5-.3 1.5-.2 1.5-.3 1.5-.3 1.5-.3 1.5-.3 1.5-.3 1.5-.4 1.5-.5 1.4-.7 1.5-.8 1.5-.7 1.5-.5 1.5-.3 1.5-.2 1.5-.1 1.5-.1 1.5-.1 1.5 0 1.5 .1 1.5 0 1.4 .1 1.5 .1 1.5 .1 1.5 .1 1.5 .2 1.5 .1 1.5 .2 1.5 .2 1.5 .1 1.5 .3 1.5 .3 1.5 .4 1.5 .5 1.4 .5 1.5 .4 1.5 .3 1.5 .2 1.5 .3 1.5 .4 1.5 .3 1.5 .4 1.5 .4 1.5 .5 1.5 .4 1.5 .4 1.5 .5 1.4 .6 1.5 .6 1.5 .7 1.5 .7 1.5 .7 1.5 .6 1.5 .5 1.5 .4 1.5 .3 1.5 .3 1.5 .3 1.5 .3 1.5 .2 1.4 .2 1.5 .1 1.5 .1 1.5 .2 1.5 .1 1.5 .1 1.5 .1 1.5 .1 1.5 0 1.5 .2 1.5 .1 1.5 0 1.5 .1 1.4 .1 1.5 .1 1.5 .1 1.5 .2 1.5 .1 1.5 .2 1.5 .1 1.5 .1 1.5 .1 1.5 0 1.5 0 1.5 0 1.4 0 1.5 0 1.5-.1 1.5 0 1.5 0 1.5-.1 1.5-.5 .5-.3" fill="none" stroke="#3db6de" stroke-width="1"/>
<path d="M59.8 260.2l1 3.1 1 3.3 1 4.3 1 4.1 1 3.8 1 3.8 1 3.8 1 3.8 1 3.6 1 3.4 1 3.1 1 3.2 1 2.6 1 2.1 1 2.1 1 1.8 1 1.7 1 1.4 .9 1.5 1 1.3 1 1.1 1 1 1 .9 1 1 1 1.1 1 .9 1 .9 1 .6 1 .6 1 .4 1-.1 1-.2 1-.6 1-.5 1-.3 1-.2 1 .1 .9 .2 1 .4 1 .3 1 .6 1 .8 1 1 1 1.3 1 1.4 1 1.5 1 1.5 1 1.9 1 1.8 1 1.8 1 2 1 1.9 1 2.1 1 2 1 2.1 1 2 .9 1.9 1 1.9 1 1.8 1 2 1 1.9 1 2 1 2.1 1 1.9 1 1.9 1 1.8 1 1.9 1 1.7 1 1.5 1 1.5 1 1.5 1 1.3 1 1.1 1 1 1 .9 .9 .6 1 .6 1 .5 1 .4 1 .2 1 .2 1 .2 1 .3 1 .3 1 .4 1 .4 1 .6 1 .5 1 .7 1 .8 1 .9 1 .9 1 .7 1 .7 .9 .6 1 .4 1 .1 1 .1 1 .1 1-.2 1-.2 1-.5 1-.3 1-.3 1-.5 1-.6 1-.5 1-.7 1-.5 1-.5 1-.2 1-.2 1 .3 1 .6 .9 .5 1 .5 1 .6 1 .5 1 .5 1 .5 1 .6 1 .6 1 .6 1 .6 1 .6 1 .7 1 .8 1 .7 1 .7 1 .9 1 .8 1 1 1 1 .9 1 1 1.2 1 1.4 1 1.6 1 1.8 1 1.8 1 1.8 1 1.8 1 1.6 1 1.3 1 .9 1 1 1 1 1 1.1 1 1.3 1 1.2 1 1.3 1 1.2 1 1.5 .9 1.4 1 1.6 1 1.6 1 1.7 1 1.7 1 1.8 1 1.6 1 1.7 1 1.6 1 1.6 1 1.5 1 1.6 1 1.4 1 1.5 1 1.4 1 1.4 1 1.3 1 1.4 1 1.4 .9 1.3 1 1.3 1 1.3 1 1.2 1 1.2 1 1 1 1 1 1 1 .9 1 .9 1 .7 1 .7 1 .5 1 .4 1 .4 1 .4 1 .5 1 .7 1 .8 .9 .7 1 .6 1 .7 1 .6 1 .8 1 .6 1 .4 1 .3 1 .3 1 .1 1 0 1-.3 1-.4 1-.7 1-.9 1-.9 1-.8 1-.8 1-.6 1-.8 .9-.7 1-.7 1-.6 1-.5 1-.5 1-.6 1-.5 1-.7 1-.5 1-.6 1-.1 1-.1 1-.1 1 0 1 0 1 .1 1 .1 1 .3 1 .3 .9 .5 1 .5 1 .6 1 .8 1 1 1 1.2 1 1.2 1 1.1 1 1 1 .9 1 1 1 .9 1 1 1 1 1 .9 1 1 1 1.1 1 1 1 1.1 .9 1.1 1 .8 1 .7 1 .6 1 .6 1 .7 1 .7 1 .6 1 .7 1 .6 1 .6 1 .7 1 .6 1 .6 1 .6 1 .5 1 .6 1 .5 1 .4 .9 .5 1 .3 1 .4 1 .4 1 .3 1 .3 1 .3 1 .2 1 .3 1 .1 1 .3 1 .1 1 .1 1 .1 1 .2 1 .1 1 .1 1 0 1 .1 .9 .1 1 .2 1 .2 1 .2 1 .2 1 .3 1 .2 1 .2 1 .2 1 .2 1 .2 1 .2 1 .2 1 .3 1 .1 1 .1 1 .2 1 .1 1 .1 1 .1 .9 0 1 0 1 0 1 .2 1 .2 1 .3 1 .5 1 .3 1 .3 1 .3 1 .2 1 .1 1 .2 1 .1 1-.2 1-.2 1-.4 1-.6 1-.7 .9-.8 1-1 1-1.1 1-1 1-.9 1-.8 1-.8 1-.6 1-.7 1-.5 1-.5 1-.5 1-.5 1-.6 1-.6 1-.7 1-.6 1-.9 1-.7 .9-.7 1-.5 1-.5 1-.4 1-.4 1-.3 1-.2 1 0 1 .1 1 .3 1 .5 1 .5 1 .7 1 .7 1 .6 1 .5 1 .3 1 .3 1 .2 .9 .2 1 0 1-.1 1 0 1 0 1 0 1-.1 1-.1 1-.2 1-.3 1-.5 1-.9 1-1.2 1-1.4 1-1.6 1-1.7 1-1.6 1-1.7 1-1.5 .9-1.4 1-1.3 1-1.2 1-1.1 1-1 1-.9 1-.7 1-.7 1-.6 1-.5 1-.6 1-.4 1-.4 1-.3 1-.3 1-.3 1-.3 1-.3 1-.3 1-.3 .9-.1 1 .1 1 .4 1 .6 1 .8 1 .9 1 .9 1 .9 1 .8 1 .8 1 .7 1 .6 1 .4 1 .4 1 .3 1 .3 1 .2 1 .2 1 .1 .9 0 1 0 1 0 1-.1 1-.1 1-.1 1-.1 1-.1 1 0 1-.2 1-.1 1-.1 1-.2 1 0 1-.1 1-.1 1 0 1 .2 1 0 .9 .1 1 .1 1 .2 1 .2 1 .2 1 .3 1 .3 1 .4 1 .3 1 .3 1 .3 1 .2 1 .2 1 .2 1 .2 1 .2 1 .2 1 .2 1 .2 .9 .2 1 .4 1 .2 1 .1 1 .3 1 .2 1 .2 1 .3 1 .1 1 .2 1 .2 1 .3 1 .2 1 .2 1 .1 1 .2 1 .1 1 .2 1 .1 1 .1 .9 .2 1 .2 1 .2 1 .3 1 .2 1 .3 1 .2 1 .2 1 .2 1 .2 1 .2 1 .2 1 .1 1 .2 1 .2 1 0 1 0 1 0 1 0 .9-.1 1 0 1-.2 1 0 1-.2 1-.1 1-.2 1-.1 1-.2 1 0 1-.1 1 0 1-.1 1 0 1 0 1 0 1 0 1 .1 1 0 .9 .1 1 .1 1 0 1 .2 1 .2 1 .2 1 .2 1 .2 1 .2 1 .3 1 .3 1 .3 1 .2 1 .4 1 .3 1 .4 1 .3 1 .3 1 .3 .9 .3 1 .1 1 .2 1 .2 1 .1 1 .1 1 .1 1 .1 1 .1 1 .1 1 0 1 0 1 0 1 0 1-.2 1-.2 1-.2 1-.2 1-.4 .9-.3 1-.4 1-.6 1-.6 1-.6 1-.7 1-.6 1-.7 1-.6 1-.6 1-.6 1-.5 1-.4 1-.4 1-.2 1-.3 1-.2 1-.3 1-.2 1-.3 .9-.2 1-.2 1-.3 1-.2 1-.3 1-.3 1-.3 1-.3 1-.3 1-.3 1-.2 1-.2 1 0 1 0 1 0 1 .1 1 .2 1 .3 1 .2 .9 .3 1 .3 1 .2 1 .2 1 .3 1 .1 1 .1 1 .2 1 .1 1 .3 1 .3 1 .3 1 .4 1 .3 1 .4 1 .5 1 .6 1 .6 1 .6 .9 .7 1 .6 1 .7 1 .5 1 .6 1 .6 1 .5 1 .5 1 .3 1 .3 1 .2 1 .2 1 0 1 .1 1 0 1-.1 1 0 1 0 1 0 .9 0 1-.1 1 0 1-.1 1-.1 1 0 1 0 1 0 1 0 1-.1 1 .1 1 .1 1 .2 1 .3 1 .2 1 .4 1 .2 1 .3 1 .3 .9 .3 1 .3 1 .3 1 .3 1 .3 1 .3 1 .3 1 .4 1 .3 1 .3 1 .1 1 .2 1 .1 1 .1 1 .1 1 0 1 .1 1 0 1-.1 1 0 .9-.1 1-.2 1-.2 1-.2 1-.3 1-.2 1-.1 1-.1 1-.2 1-.1 1-.1 1 .1 1 0 1 0 1 .1 1 .2 1 .1 1 .2 1 .4 .9 .3 1 .3 1 .4 1 .4 1 .4 1 .5 1 .5 1 .5 1 .5 1 .5 1 .5 1 .6 1 .6 1 .7 1 .5 1 .5 1 .4 1 .3 1 .3 .9 .3 1 .3 1 .2 1 .2 1 .3 1 .2 1 .3 1 .1 1 .3 1 .2 1 .1 1 .3 1 .2 1 .3 1 .2 1 .2 1 .2 1 .1 1 .1 .9 .1 1 .1 1 0 1-.1 1-.1 1-.2 1-.2 1-.2 1-.1 1-.1 1 0 1-.1 1-.1 1-.2 1 0 1-.1 1 0 1-.1 1 0 .9 .1 1 .1 1 0 1 0 1 0 1 0 1 0 1 0 1 0 1 .1 1 .1 1 .2 1 .2 1 .2 1 .3 1 .3 1 .3 1 .3 1 .4 1 .3 .9 .4 1 .4 1 .3 1 .3 1 .3 1 .1 1 .2 1 .1 1-.1 1 0 1-.1 1-.3 1-.3 1-.2 1-.2 1-.2 1-.2 1-.3 1-.2 .9-.2 1-.3 1-.2 1-.3 1-.3 1-.2 1-.3 1-.3 1-.2 1-.1 1 .1 1 .2 1 .5 1 .7 1 .9 1 1 1 1.1 1 .9 1 .9 .9 .9 1 .9 1 .7 1 .9 1 .7 1 .7 1 .6 1 .5 1 .6 1 .6 1 .4 1 .5 1 .4 1 .5 1 .6 1 .5 1 .6 1 .5 1 .4 .9 .5 1 .3 1 .2 1 0 1-.2 1-.3 1-.6 1-.6 1-.5 1-.5 1-.4 1-.2 1-.3 1-.1 1-.1 1 .1 1 0 1 .2 1 .3 1 .3 .9 .3 1 .4 1 .4 1 .1 1 .2 1-.1 1-.1 1-.2 1-.1 1-.1 1-.1 1-.1 1-.1 1-.1 1 0 1-.2 1 0 1-.1 1-.1 .9-.1 1 0 1-.1 1-.1 1-.1 1-.1 1-.2 1-.3 1-.2 1-.4 1-.3 1-.5 1-.7 1-.5 1-.6 1-.5 1-.5 1-.4 1-.3 .9-.2 1-.1 1-.2 1-.2 1-.2 1-.3 1-.3 1-.2 1-.2 1-.3 1-.3 1-.4 1-.3 1-.4 1-.2 1-.2 1-.4 1-.4 1-.4 .9-.6 1-.5 1-.7 1-.5 1-.3 1-.2 1 0 1 .2 1 .1 1 .3 1 .1 1 .1 1 .1 1 .1 1 .2 1 .2 1 .4 1 .3 1 .3 .9 .4 1 .4 1 .4 1 .6 1 .4 1 .5 1 .4 1 .4 1 .6 1 .6 1 .7 1 .8 1 .8 1 .9 1 .9 1 .8 1 .7 1 .6 1 .5 1 .4 .9 .4 1 .4 1 .4 1 .2 1 .3 1 .2 1 .1 1 .2 1 .2 1 .1 1 .2 1 .1 1 .1 1 .1 1 .1 1 .1 1 .1 1 .2 1 .1 .9 .2 1 .1 1 .1 1 .2 1 0 1 .2 1 .1 1 .1 1 0 1 .1 1 .2 1 0 1 .1 1 .1 1 .2 1 .1 1 .2 1 .1 1 .1 .9 0 1 .1 1 .1 1 .1 1 0 1 0 1 0 1 .1 1 0 1 0 1-.1 1 0 1 0 1 0 1 .1 1 0 1 0 1-.1 1 .1 .9 0 1 .1 1 .1 1 0 1 0 1 .1 1 .1 1 0 1 .1 1 0 1 .1 1 .1 1 0 1 .1 1 0 1 0 1 0 1 0 1-.1 .9 0 1 0 1-.1 1-.1 1 0 1 0 1-.1 1-.1 1-.3 1-.8 .5-.6" fill="none" stroke="#1fa247" stroke-width="1"/>
<path d="M39.9 219.3l1 1.5 1 2.2 1 5.6 1 5.4 1 4.9 1 5.3 1 6.2 1 6.1 1 5 1 5.1 1 4.5 1 5 1 3.4 1 2.3 1 2.2 1 2.3 1 1.9 1 2 .9 2.6 1 2.1 1 3 1 2.9 1 3.9 1 4.6 1 4.1 1 3.9 1 3.4 1 3.1 1 3.3 1 3.2 1 1.8 1 1.5 1 .4 1-.4 1-.2 1-.6 1-.2 1-1.2 .9-1.2 1-1.3 1-1.5 1-1.6 1-1.6 1-1 1-.6 1-.8 1-.4 1-.1 1-.2 1-.8 1-.4 1-.8 1-.6 1-.1 1 .1 1 .8 1 .9 .9 1.8 1 2.5 1 3.2 1 3.7 1 4.8 1 5 1 5 1 4.8 1 4.5 1 4.1 1 3.8 1 3.2 1 3.1 1 2.4 1 2 1 1.6 1 1.4 1 1.2 1 .7 .9 .7 1 0 1 .1 1-.4 1-.4 1-1 1-.3 1-.5 1-.4 1 .2 1 1 1 1.2 1 1.2 1 2 1 2.2 1 2.9 1 2.2 1 2.1 1 1.8 .9 .9 1 .2 1 .1 1-.1 1-.8 1-1.2 1-1.3 1-1.1 1-.5 1-.4 1 .1 1 .5 1 .4 1 1 1 1.2 1 1.6 1 1.1 1 1 1 .6 .9 .4 1 0 1-.2 1-.3 1-.7 1-1 1-1 1-1.1 1-.9 1-1.1 1-1.4 1-1.8 1-1.8 1-2.2 1-1.9 1-1.7 1-1.3 1-.4 1 .8 1 2.2 .9 2.6 1 3.3 1 3.8 1 4 1 3.9 1 4.4 1 4 1 3.1 1 2 1 .7 1 .9 1 .5 1 .2 1 .3 1 .3 1-.2 1-.1 1 .2 1 .2 .9 0 1 .2 1 .5 1 .8 1 1.1 1 1.1 1 1.2 1 1.5 1 1.6 1 1.6 1 1.9 1 1.9 1 2.1 1 2.3 1 2.5 1 2.3 1 2.7 1 2.4 1 2.5 .9 2.6 1 2.7 1 2.7 1 2.6 1 1.9 1 1.8 1 1.5 1 1 1 1 1 .8 1 .4 1 0 1-.2 1-.4 1 .2 1-.2 1 .2 1 .5 1 .7 .9 .5 1 .9 1 1.2 1 1.2 1 1.2 1 1.2 1 1.2 1 1.3 1 1.4 1 .9 1 .9 1 .6 1 .4 1 .3 1 .1 1 .1 1 .5 1 .5 1 .5 .9 .4 1 .6 1 .4 1 .5 1 .7 1 .4 1 0 1-.7 1-.9 1-1.6 1-1.5 1-2.1 1-2.6 1-2.8 1-3.5 1-3.3 1-2.6 1-2 1-1.7 1-1.1 .9-1.1 1-.5 1 .3 1 .7 1 1.3 1 1.2 1 1.1 1 .7 1 .8 1 1.2 1 2.1 1 2.3 1 2.2 1 2 1 2.2 1 2.4 1 1.9 1 2.2 1 1.8 .9 1.3 1 .4 1 .1 1 0 1 .2 1 .1 1 .1 1 .2 1 .1 1 .2 1 .2 1 .4 1 .7 1 .6 1 .6 1 .7 1 .8 1 1 1 1 .9 1.2 1 1 1 1.3 1 .9 1 1.2 1 1.2 1 1.3 1 1 1 .9 1 .8 1 .5 1 .6 1 .2 1 .1 1 .1 1-.2 1-.4 1-.4 1-.4 .9-.5 1-.6 1-.5 1-.3 1-.2 1-.4 1-.1 1-.1 1 0 1 .2 1 .2 1 .5 1 .5 1 .3 1 .5 1 .5 1 .7 1 .7 1 .6 .9 .6 1 .8 1 .7 1 .6 1 .7 1 .5 1 .3 1 .1 1 .2 1 0 1-.3 1-.4 1-.6 1-.2 1-.6 1-.7 1-.4 1-.5 1-.4 1-.5 .9-.4 1-.3 1 .1 1 .1 1 .7 1 1 1 1.4 1 1.3 1 1.2 1 1.3 1 1.4 1 1.1 1 .9 1 .4 1-.4 1-1.1 1-2.2 1-2.4 1-3 .9-3.4 1-3.9 1-4.1 1-3.8 1-3.6 1-2.6 1-2.1 1-1.3 1-.6 1 0 1 .5 1 1.1 1 1.5 1 1.3 1 1.2 1 1 1 1.3 1 .9 1 1 .9 1 1 1.1 1 1.4 1 1.3 1 1.5 1 1.4 1 1 1 .9 1 .6 1 .6 1 .4 1-.1 1-.4 1-.6 1-1.1 1-1.1 1-1.1 1-1.2 1-1 .9-1.1 1-1.3 1-1.2 1-1 1-.8 1-.5 1-.4 1-.2 1-.3 1-.6 1-1.1 1-1.7 1-2.2 1-3 1-3.3 1-3.5 1-3.4 1-3.6 1-3.2 .9-2.7 1-1.6 1-.6 1 .1 1 1.1 1 1.4 1 1.9 1 1.7 1 2.1 1 1.9 1 1.5 1 1.5 1 1.1 1 1.1 1 1 1 1.1 1 .8 1 .6 1 .6 1 .5 .9 .7 1 .7 1 .5 1 .6 1 .4 1 .2 1 0 1 .4 1-.2 1-.1 1-.2 1-.4 1-.3 1-.4 1-.5 1-.5 1-.1 1-.6 1-.2 .9-.3 1-.4 1-.4 1-.4 1-.4 1-.2 1 0 1-.2 1 .1 1-.3 1 .2 1 .4 1 .2 1 .5 1 .5 1 .6 1 .5 1 .7 1 .6 .9 .8 1 .5 1 .6 1 .8 1 .6 1 .6 1 .6 1 .5 1 .4 1 .4 1 .2 1 0 1-.2 1-.5 1-.5 1-.6 1-.4 1-.5 1-.5 .9-.4 1 0 1 .2 1 .1 1 .3 1 .7 1 .6 1 .5 1 .5 1 .7 1 .6 1 .5 1 .4 1 .7 1 .6 1 .4 1 .5 1 .4 1 .2 1 .2 .9 .2 1 .2 1 .1 1 0 1-.2 1-.4 1-.3 1-.4 1-.2 1-.2 1-.1 1-.2 1-.1 1-.1 1 0 1 0 1 0 1-.2 1-.1 .9-.1 1-.2 1-.4 1-.1 1-.3 1-.2 1-.3 1 0 1 .1 1 .1 1 0 1 .3 1 .4 1 .2 1 .4 1 .3 1 .2 1 .2 1 .2 .9 .2 1 .3 1 .1 1 .5 1 .6 1 .5 1 .5 1 .7 1 .5 1 .6 1 .6 1 .4 1 .4 1 .2 1 .2 1 .2 1 .2 1 0 1 0 .9 0 1-.2 1-.1 1-.2 1-.3 1-.4 1-.5 1-.3 1-.4 1-.3 1-.6 1-.1 1-.3 1-.4 1-.4 1-.4 1-.4 1-.6 1-.6 .9-.6 1-.8 1-1.4 1-1.3 1-1.3 1-1.3 1-1.1 1-1.2 1-1 1-.8 1-.7 1-.1 1 .3 1 .5 1 .8 1 1 1 .7 1 .9 1 .8 1 .6 .9 .6 1 .3 1 .2 1 .3 1-.5 1-.6 1-.5 1-.5 1-.7 1-.7 1-.6 1-.5 1-.9 1-.7 1-.2 1 .1 1 .2 1 .4 1 .7 .9 .8 1 1 1 .9 1 1.2 1 1.2 1 1.1 1 .8 1 .7 1 .7 1 .7 1 .8 1 .5 1 .9 1 .5 1 .7 1 .7 1 .9 1 .8 1 .9 .9 .4 1 .5 1 .4 1 0 1-.1 1 0 1-.3 1-.4 1-.5 1-.7 1-.6 1-.7 1-.8 1-.6 1-.5 1-.8 1-.5 1-.6 1-.3 .9-.2 1 .1 1 0 1 .1 1 .5 1 .4 1 .8 1 .8 1 .9 1 .8 1 1 1 1.1 1 1.1 1 1.5 1 1 1 .9 1 .8 1 .7 1 .5 .9 .4 1 .1 1-.3 1-.3 1-.5 1-.5 1-.6 1-.5 1-.6 1-.5 1-.7 1-.6 1-.6 1-.5 1-.5 1-.5 1-.3 1-.2 1-.3 1 0 .9 0 1-.1 1 .2 1 .2 1 .2 1 .5 1 .4 1 .4 1 .4 1 .4 1 .4 1 .7 1 .5 1 .4 1 .5 1 .5 1 .3 1 .6 1 .7 .9 .6 1 .7 1 .4 1 .6 1 .7 1 .7 1 .6 1 .8 1 .5 1 .3 1 .6 1 .6 1 .9 1 .7 1 .5 1 .4 1 0 1 0 1-.3 .9-.3 1-.4 1-.4 1-.7 1-.6 1-.4 1-.4 1-.1 1 .1 1 .2 1 .4 1 .6 1 .4 1 .7 1 .6 1 .6 1 .4 1 .5 1 .2 .9 .4 1 .1 1-.1 1-.3 1-.4 1-.6 1-.5 1-.7 1-.7 1-.7 1-.7 1-.7 1-.7 1-.7 1-.4 1-.2 1-.3 1 .2 1 .1 .9 .6 1 .7 1 .7 1 .9 1 .9 1 .8 1 .8 1 .8 1 .7 1 .7 1 .5 1 .4 1 .6 1 .6 1 .5 1 .6 1 .4 1 .4 1 .2 1 .2 .9 0 1-.1 1-.4 1-.5 1-.4 1-1 1-.8 1-.9 1-.9 1-1.1 1-.9 1-1.2 1-1 1-.8 1-.6 1-.3 1-.2 1-.3 1 0 .9 .3 1 .2 1 .6 1 .5 1 .3 1 .4 1 .4 1 .4 1 .5 1 .6 1 1 1 1.4 1 2.1 1 2.5 1 3.2 1 3.3 1 3 1 2.8 1 2.4 .9 2 1 1.4 1 .6 1-.2 1-.8 1-1.4 1-1.9 1-1.8 1-1.4 1-1.4 1-1.2 1-1 1-.6 1-.4 1-.2 1-.1 1 .4 1 .2 1 .1 .9 .3 1 .2 1 .2 1 0 1-.1 1 0 1-.1 1-.4 1-.1 1 0 1 0 1 .1 1 .1 1 .2 1 .3 1 .4 1 .4 1 .5 1 .8 1 .7 .9 .9 1 .8 1 .7 1 .3 1 .1 1-.5 1-.6 1-.7 1-.9 1-1.1 1-1.2 1-1.3 1-1.1 1-.7 1-.5 1-.3 1 0 1-.1 1 0 .9 .1 1 .2 1 .1 1 .2 1 0 1 .1 1 .1 1 0 1 0 1 0 1-.2 1-.5 1-.7 1-.7 1-1 1-1.3 1-1.2 1-1.1 1-.8 .9-.5 1-.4 1-.4 1 0 1 0 1 .1 1 .4 1 .5 1 .3 1 0 1-.4 1-.5 1-.1 1-.3 1-.1 1 .2 1-.2 1-.5 1-.5 .9-.8 1-.8 1-1 1-1.1 1-.6 1-.4 1-.3 1 .1 1 .6 1 .9 1 1.2 1 1.4 1 1.8 1 1.7 1 1.4 1 1.2 1 1.2 1 .9 1 .9 .9 .7 1 .8 1 .9 1 .7 1 .8 1 .6 1 .4 1 .5 1 .5 1 .4 1 .5 1 .4 1 .2 1 .2 1 .2 1 .2 1 .4 1 .2 1 .2 1 0 .9 .1 1-.1 1-.1 1-.1 1-.3 1-.2 1-.3 1-.2 1-.2 1 0 1-.1 1 0 1 .2 1 .3 1 .3 1 .4 1 .4 1 .4 1 .4 .9 .4 1 .5 1 .4 1 .2 1 .1 1 .4 1 .2 1 .2 1 0 1-.1 1 0 1-.1 1 0 1-.2 1-.1 1-.1 1-.2 1-.1 1-.1 .9-.3 1-.2 1-.2 1 0 1 0 1 0 1-.1 1 0 1-.1 1 .1 1 .3 1 .3 1 .2 1 .1 1 .3 1 .1 1 .1 1 .1 1 .3 .9 .2 1 .2 1 .2 1 .1 1-.1 1 0 1 .1 1 .1 1 .1 1-.2 1-.1 1-.1 1-.3 1-.1 1-.2 1-.2 1-.3 1-.3 1-.3 .9-.2 1-.1 1-.2 1-.1 1-.1 1 0 1 0 1 .1 1-.8 1-2.1 .5-1.6" fill="none" stroke="#c93fd0" stroke-width="1"/>
<path d="M34.5 212.3l.5 3.4 .5-.1 .5-1.8 .5-.5 .5-.7 .5 1.9 .5 1.9 .5 .8 .5 2.5 .5 3 .4 .2 .5 1.8 .5 3.1 .5 1.9 .5 3.6 .5 3.5 .5 4.1 .5 4.5 .5 2.8 .5 2.5 .5 4.2 .5 2.4 .5 3.3 .5 3.5 .5 3.3 .5 2 .5 2.7 .5 .7 .5 2 .5 2.2 .5 1.3 .5 2.4 .5 .8 .5 2.1 .5 1.2 .5 1.6 .5 .4 .5 .7 .5 1.3 .5 .7 .5 .3 .5 .5 .5 .8 .5 .3 .5 .2 .5 .4 .5 1.6 .5 1.9 .4 1.3 .5 .8 .5 2.3 .5 2.5 .5 2.4 .5 2.2 .5 3 .5 3.1 .5 2.7 .5 3.2 .5 2.7 .5 3.2 .5 1.9 .5 1.5 .5 1.6 .5 1.3 .5 .2 .5 .4 .5 .1 .5 0 .5 .5 .5 .7 .5 .7 .5 .1 .5 .4 .5 .9 .5 .6 .5 .2 .5 0 .5-.4 .5-.8 .5-1.2 .5-.6 .5-.8 .5-.8 .5-1.2 .5-.8 .5-1.1 .5-1.5 .4-.8 .5-.3 .5-.5 .5-.4 .5-.7 .5-.8 .5-.3 .5-.9 .5-.3 .5-.2 .5-.1 .5-.8 .5-.1 .5-.2 .5 0 .5 0 .5-.4 .5 .6 .5 0 .5 .3 .5 .1 .5 .4 .5-.9 .5-.3 .5-.3 .5-.5 .5-.6 .5-1.1 .5-1 .5-.6 .5-.4 .5-.3 .5 .7 .5 .7 .5 .8 .5 1.5 .5 1.5 .5 2.2 .4 2.8 .5 2.3 .5 2.7 .5 3.1 .5 2.4 .5 2.6 .5 2.4 .5 2.7 .5 3 .5 2.7 .5 2.4 .5 2.7 .5 2.3 .5 1.9 .5 2.6 .5 1.9 .5 2.3 .5 1.7 .5 1.3 .5 1 .5 1 .5 1.7 .5 1 .5 1 .5 .6 .5 1.2 .5 .5 .5 .3 .5 1.1 .5 .6 .5 .5 .5 .1 .5 .1 .5 .6 .5 .5 .5 .1 .5 .2 .5 .4 .4-.5 .5 .2 .5 .1 .5-.6 .5-.3 .5-.4 .5-.8 .5-.6 .5-.7 .5-.7 .5-.7 .5-.8 .5-.3 .5 0 .5-.2 .5-.1 .5 .3 .5 .4 .5 1 .5 .9 .5 1.6 .5 1.9 .5 .9 .5 1.6 .5 1.6 .5 1.2 .5 1.6 .5 1.7 .5 .9 .5 1.7 .5 1.3 .5 .8 .5 1.4 .5 .6 .5 .7 .5 .7 .5 .3 .5 0 .5 0 .4-.8 .5-.8 .5-1 .5-.8 .5-.8 .5-.8 .5-.9 .5-.9 .5-1 .5-1.1 .5-.5 .5-.6 .5-.2 .5-.3 .5-.3 .5 .3 .5 .3 .5 .5 .5 .7 .5 1.2 .5 .7 .5 .9 .5 .7 .5 .7 .5 .8 .5 .6 .5 .8 .5 .7 .5 .5 .5 .9 .5 .4 .5 .4 .5 .2 .5 .6 .5 0 .5-.1 .5-.2 .5-.1 .4-.4 .5-.8 .5-.4 .5-.6 .5-.5 .5-.9 .5-.2 .5-.5 .5-.5 .5-.9 .5-.7 .5-.7 .5-.1 .5-.4 .5-.7 .5-.3 .5-.4 .5-.7 .5-.4 .5-.7 .5-.6 .5-1.2 .5-1.6 .5-1.2 .5-1.4 .5-1.9 .5-1.7 .5-1.5 .5-1.1 .5-1.3 .5-.9 .5-.1 .5 .2 .5 .5 .5 1.4 .5 2.4 .5 2.7 .5 3.6 .5 3.5 .4 3.8 .5 3.6 .5 3.4 .5 3 .5 3.1 .5 2.7 .5 1.7 .5 1.2 .5 .6 .5 .1 .5 .8 .5 .6 .5 .6 .5 1 .5 .3 .5 .2 .5 .5 .5 .6 .5-.1 .5 .6 .5 .2 .5 .2 .5 .1 .5-.6 .5-.2 .5 .2 .5 0 .5-.7 .5 .3 .5-.2 .5-.4 .5-.2 .5-.2 .5 .4 .5 .4 .5-.1 .5 .1 .5 1 .4 0 .5 .1 .5 .4 .5 .5 .5 .4 .5 .5 .5 .5 .5 .6 .5 .9 .5 .4 .5 1.1 .5 1 .5 .8 .5 .6 .5 1.1 .5 1.1 .5 .8 .5 1.2 .5 .9 .5 1.1 .5 .8 .5 .9 .5 1.2 .5 1.2 .5 .8 .5 1.1 .5 1.5 .5 1.2 .5 1.2 .5 1.7 .5 1.4 .5 1.6 .5 1.3 .5 1.6 .5 1.5 .5 1.3 .5 1 .5 1.4 .4 1.4 .5 .9 .5 1.2 .5 1.2 .5 1.4 .5 1.1 .5 1.4 .5 1 .5 .7 .5 .7 .5 .6 .5 .7 .5 .3 .5 .2 .5-.3 .5 0 .5-.4 .5-.1 .5 .1 .5 .1 .5-.2 .5-.4 .5-.1 .5-.2 .5-.1 .5-.1 .5-.3 .5 .1 .5 0 .5 0 .5-.1 .5 .4 .5 .3 .5 .4 .5 .5 .5 .7 .5 .8 .5 .7 .5 .7 .4 .4 .5 1.1 .5 .5 .5 .8 .5 .7 .5 .8 .5 .5 .5 .5 .5 .4 .5 .8 .5 .5 .5 .2 .5 .7 .5 .5 .5 .5 .5 .8 .5 .7 .5 .8 .5 .2 .5 .1 .5 .3 .5 .2 .5 .1 .5-.2 .5-.1 .5-.5 .5-.4 .5-.6 .5 0 .5-.2 .5 0 .5 .4 .5 .2 .5 .5 .5 .7 .5 .9 .5 1 .5 1 .4 .6 .5 .8 .5 .4 .5 .3 .5 .1 .5 0 .5-.3 .5-.1 .5-.5 .5-.4 .5-.3 .5-.6 .5-.6 .5-.9 .5-1 .5-.5 .5-.8 .5-1.4 .5-1.2 .5-1.3 .5-1.1 .5-1.4 .5-1.6 .5-1.7 .5-1.6 .5-2.1 .5-2.1 .5-2.1 .5-2.4 .5-2.2 .5-1.9 .5-1.6 .5-.7 .5-.5 .5-.2 .5 .3 .5 .6 .5 1 .5 1.1 .4 1.1 .5 .9 .5 .8 .5 .6 .5 .7 .5 .5 .5 .2 .5 .3 .5 .1 .5 .5 .5 .2 .5 .1 .5 .5 .5 .3 .5 .1 .5 0 .5 .4 .5 .8 .5 .9 .5 1 .5 1.9 .5 1.9 .5 1.9 .5 1.9 .5 2 .5 2.3 .5 1.7 .5 1.2 .5 1.2 .5 1.1 .5 .6 .5 .5 .5 .2 .5-.2 .5 .2 .5 0 .5 .3 .5 .3 .4 .1 .5 .2 .5-.3 .5 0 .5-.1 .5 .3 .5-.1 .5-.2 .5 0 .5 0 .5 0 .5-.1 .5 .3 .5 .1 .5 .1 .5 .1 .5 .4 .5 .1 .5 .1 .5 .3 .5 .2 .5 .4 .5 .3 .5 .1 .5 .3 .5 .7 .5 .2 .5 .7 .5 .4 .5 .4 .5 .4 .5 .4 .5 .6 .5 .6 .5 .5 .5 .4 .5 .6 .5 .5 .5 .8 .4 .8 .5 .6 .5 .6 .5 .6 .5 .7 .5 .7 .5 .3 .5 .7 .5 .6 .5 .4 .5 .5 .5 .6 .5 .7 .5 .4 .5 .4 .5 0 .5 .6 .5 .3 .5 .2 .5-.1 .5 .1 .5 0 .5-.2 .5 0 .5-.3 .5-.1 .5-.3 .5-.2 .5 0 .5-.2 .5-.3 .5-.4 .5-.2 .5-.5 .5 0 .5-.3 .5-.1 .5-.3 .4-.4 .5-.3 .5-.4 .5-.2 .5-.4 .5 0 .5 0 .5 .2 .5-.2 .5 0 .5 0 .5 0 .5 .4 .5 .1 .5 .2 .5 0 .5 .1 .5-.1 .5 .4 .5 .1 .5 .4 .5 .4 .5 .2 .5 .4 .5 .3 .5 .3 .5 .2 .5 .5 .5 .1 .5 .3 .5 .4 .5 .3 .5 .5 .5 .2 .5 .4 .5 .4 .5 .4 .5 .2 .4 .3 .5 .5 .5 .3 .5 .5 .5 .2 .5 .4 .5 .2 .5 .2 .5 .4 .5 .3 .5 .2 .5-.1 .5-.1 .5-.3 .5-.2 .5 0 .5-.2 .5-.4 .5-.3 .5-.4 .5-.6 .5-.2 .5-.4 .5-.2 .5-.5 .5 0 .5-.2 .5-.1 .5-.5 .5-.2 .5-.1 .5-.1 .5-.2 .5-.3 .5 0 .5-.2 .5-.3 .5-.3 .5-.1 .4-.2 .5-.2 .5-.2 .5-.1 .5 .2 .5 .1 .5 .2 .5 .6 .5 .9 .5 .9 .5 1.1 .5 1.3 .5 1.6 .5 1.5 .5 1.2 .5 1 .5 1 .5 .8 .5 .4 .5 .4 .5 .3 .5-.1 .5-.4 .5-.4 .5-.2 .5-.3 .5-.3 .5-.5 .5-.8 .5-.9 .5-1 .5-1.5 .5-1.7 .5-1.7 .5-2.3 .5-2.2 .5-2.6 .5-2.6 .4-2.4 .5-2.5 .5-3 .5-2.4 .5-2.5 .5-2.3 .5-1.6 .5-1.6 .5-1.2 .5-.6 .5-.6 .5 .3 .5 .5 .5 .5 .5 1.2 .5 1.2 .5 .8 .5 1 .5 1.2 .5 .8 .5 .9 .5 .4 .5 .7 .5 .4 .5 .2 .5 .4 .5 .6 .5 .2 .5 .2 .5 .2 .5 .4 .5 .4 .5 .5 .5 .9 .5 .7 .5 .5 .5 .4 .5 .8 .5 .9 .4 .6 .5 .6 .5 .9 .5 .8 .5 .6 .5 .5 .5 .9 .5 1.1 .5 .7 .5 .4 .5 .8 .5 .4 .5 .3 .5 .1 .5 .1 .5 .1 .5-.3 .5-.2 .5-.3 .5 0 .5-.5 .5-.3 .5-.5 .5-.5 .5-.5 .5-.6 .5-.5 .5-.7 .5-.9 .5-1 .5-.7 .5-.6 .5-.9 .5-.6 .5-.7 .5-.3 .5-.5 .5-.4 .4-.4 .5-.4 .5-.4 .5-.6 .5-.4 .5-.3 .5-.4 .5-.3 .5-.3 .5-.3 .5 0 .5-.1 .5 0 .5 .3 .5 .4 .5 0 .5 .1 .5-.2 .5-.3 .5-.7 .5-1.2 .5-1.5 .5-1.9 .5-2.3 .5-2.7 .5-3 .5-3.3 .5-3 .5-3 .5-2.7 .5-2.4 .5-1.8 .5-1.6 .5-1.1 .5-1.1 .5-.2 .5 .1 .5 .2 .4 .4 .5 .8 .5 1.1 .5 1.1 .5 1.2 .5 1 .5 1.4 .5 1 .5 1.3 .5 1.1 .5 1 .5 1.1 .5 .7 .5 .5 .5 .7 .5 .9 .5 .8 .5 .9 .5 .7 .5 .5 .5 .5 .5 .6 .5 .5 .5 .4 .5 .6 .5 .3 .5 .1 .5 .3 .5 .2 .5 .5 .5 .7 .5 .1 .5 .3 .5 .4 .5 0 .5 .2 .5 .5 .5 .2 .5 .2 .4 .2 .5 .1 .5 .4 .5 .5 .5 .2 .5 .5 .5 .3 .5 .2 .5 .2 .5 .2 .5 .2 .5-.1 .5-.4 .5-.4 .5 .1 .5-.2 .5-.4 .5-.3 .5-.3 .5-.4 .5-.4 .5-.2 .5 .1 .5 .1 .5-.4 .5-.2 .5 0 .5 0 .5-.3 .5-.1 .5 .1 .5-.5 .5-.1 .5-.3 .5-.4 .5-.1 .5-.2 .5-.2 .4-.1 .5-.2 .5-.4 .5 0 .5-.3 .5-.1 .5 .1 .5-.4 .5-.3 .5-.1 .5-.2 .5 .2 .5 .1 .5 .2 .5 .1 .5-.1 .5 .2 .5 .2 .5 0 .5 0 .5 .2 .5 .2 .5 .2 .5 .1 .5 .2 .5 .2 .5 .3 .5 .3 .5 .6 .5 .6 .5 .5 .5 .1 .5 .3 .5 .4 .5 .5 .5 .5 .5 .4 .5 .2 .5 .3 .4 .1 .5 .1 .5 .4 .5 .3 .5 .1 .5 .2 .5 .5 .5 .3 .5 .2 .5 .5 .5 .4 .5 .3 .5 .5 .5 .4 .5 .2 .5 .2 .5-.1 .5 .1 .5 .2 .5-.2 .5-.4 .5-.3 .5-.5 .5-.5 .5-.5 .5-.5 .5-.6 .5-.8 .5-.5 .5-.3 .5-.3 .5 0 .5-.1 .5-.1 .5 .2 .5 0 .5 .2 .5 .2 .4 .2 .5 .2 .5 .4 .5 .2 .5 .3 .5 .1 .5 0 .5 .1 .5 .3 .5 .7 .5 .4 .5 .4 .5 .1 .5 0 .5 .5 .5 .5 .5 .4 .5 .5 .5 .4 .5 .1 .5 .1 .5 .3 .5 .2 .5 .4 .5 0 .5 0 .5 .4 .5 .2 .5 .1 .5 .2 .5 .4 .5 .1 .5 .3 .5 .3 .5 .3 .5 .2 .5-.2 .5 .1 .5-.1 .4-.2 .5 0 .5 0 .5-.1 .5-.2 .5-.1 .5-.2 .5 .1 .5-.3 .5 0 .5-.1 .5-.4 .5-.5 .5-.1 .5-.1 .5-.4 .5 0 .5-.2 .5 0 .5-.1 .5 .1 .5 .1 .5 .3 .5 0 .5-.2 .5 .4 .5 0 .5 0 .5-.1 .5 .1 .5-.1 .5 .1 .5-.4 .5 0 .5-.2 .5-.4 .5 0 .5-.1 .4-.2 .5-.1 .5-.1 .5-.2 .5-.1 .5-.3 .5 .1 .5 .1 .5-.2 .5-.2 .5 .1 .5-.3 .5 0 .5-.2 .5 .2 .5 .3 .5-.1 .5-.1 .5 .2 .5 .5 .5-.2 .5 .4 .5 .3 .5 .4 .5 .3 .5 .2 .5 .2 .5 .3 .5 .2 .5-.2 .5 .4 .5 0 .5-.1 .5-.1 .5-.1 .5 0 .5-.1 .5 0 .4 .1 .5 .2 .5 .2 .5 .1 .5 .2 .5 .3 .5 .6 .5 .4 .5 .8 .5 .4 .5 .6 .5 .2 .5 .4 .5 .3 .5 .5 .5 .3 .5 0 .5 .1 .5-.2 .5 .2 .5 .3 .5 0 .5 0 .5 .2 .5-.1 .5 .1 .5 .2 .5 .1 .5 .2 .5 .1 .5-.1 .5 .3 .5 .1 .5 0 .5 .1 .5 .1 .5-.5 .5 0 .5-.1 .4-.1 .5-.1 .5-.4 .5-.4 .5-.1 .5-.1 .5-.3 .5 .1 .5-.4 .5-.1 .5-.5 .5-.2 .5-.1 .5 0 .5-.3 .5-.2 .5-.1 .5-.2 .5-.1 .5-.4 .5-.2 .5 .1 .5 0 .5-.2 .5-.2 .5 0 .5-.3 .5-.3 .5-.2 .5-.2 .5-.1 .5-.5 .5-.4 .5-.4 .5-.4 .5-.3 .5-.5 .5-.1 .4-.6 .5-.6 .5-.8 .5-.7 .5-1.1 .5-.9 .5-1.1 .5-1 .5-.6 .5-1.1 .5-.9 .5-.7 .5 0 .5-.6 .5 0 .5-.2 .5 0 .5 .1 .5 0 .5 .1 .5 .6 .5 .3 .5 .2 .5 .6 .5 .6 .5 .5 .5 .6 .5 .5 .5 .9 .5 .8 .5 .6 .5 .6 .5 .3 .5 .4 .5 .2 .5 .2 .5 .3 .5-.1 .5-.1 .4 0 .5-.2 .5-.2 .5-.2 .5 .1 .5-.1 .5 0 .5-.1 .5-.2 .5-.5 .5-.6 .5-.4 .5-.1 .5-.5 .5-.5 .5-.6 .5-.6 .5-.6 .5-.4 .5-.2 .5 0 .5-.4 .5-.3 .5-.1 .5-.4 .5-.2 .5 0 .5-.1 .5 0 .5 .1 .5 .1 .5 .4 .5 .4 .5 .6 .5 .6 .5 .7 .5 .7 .5 .9 .4 .6 .5 .8 .5 .7 .5 .7 .5 .5 .5 .4 .5 .8 .5 .3 .5 .4 .5 .3 .5 .6 .5 .2 .5 0 .5 .2 .5 .2 .5 .4 .5 0 .5 .3 .5 .4 .5 .2 .5 .2 .5 .6 .5 .6 .5 .4 .5 .6 .5 .4 .5 .5 .5 .4 .5 .5 .5 .2 .5 .5 .5 .1 .5 .3 .5 .5 .5 .2 .5 .5 .5 .4 .5 .4 .5 .1 .4 0 .5 .3 .5 .1 .5 .1 .5 0 .5-.3 .5-.5 .5-.6 .5-.4 .5-.2 .5 0 .5-.6 .5-.3 .5-.3 .5-.5 .5-.2 .5-.2 .5-.1 .5-.2 .5-.4 .5-.6 .5-.1 .5-.4 .5-.5 .5-.3 .5-.5 .5-.4 .5-.4 .5-.2 .5-.5 .5-.1 .5-.4 .5-.2 .5-.1 .5-.2 .5 .3 .5 0 .5 .3 .4-.1 .5 .4 .5 .4 .5 .5 .5 .1 .5 .3 .5 .3 .5 .3 .5 .4 .5 0 .5 .6 .5 .4 .5 .3 .5 .5 .5 .5 .5 .6 .5 .7 .5 .4 .5 .5 .5 .7 .5 .6 .5 .7 .5 .7 .5 .5 .5 .9 .5 .9 .5 .7 .5 .6 .5 .4 .5 .4 .5 .3 .5 .2 .5 0 .5 .2 .5-.2 .5-.5 .5-.3 .5 0 .4-.1 .5-.3 .5-.2 .5-.4 .5-.3 .5-.4 .5-.2 .5-.2 .5-.2 .5-.5 .5-.4 .5-.1 .5-.4 .5-.2 .5-.2 .5-.3 .5-.4 .5-.1 .5-.4 .5-.3 .5-.3 .5-.1 .5-.5 .5-.3 .5-.5 .5-.3 .5-.1 .5-.3 .5 0 .5-.4 .5 0 .5-.3 .5 .2 .5 .2 .5 .2 .5 0 .5-.2 .5 .1 .5 .2 .4 .2 .5 .2 .5 .1 .5-.2 .5 0 .5 .1 .5 .4 .5 0 .5 .3 .5-.1 .5 .4 .5 .2 .5 .5 .5 .5 .5 .3 .5 .3 .5-.1 .5 .5 .5 .2 .5 .3 .5 0 .5 .3 .5-.1 .5 .5 .5 .3 .5 .2 .5 .4 .5 0 .5 0 .5 .4 .5 .6 .5 .2 .5 .2 .5-.1 .5 .2 .5 .4 .5 .3 .5 .9 .4 .7 .5 0 .5 .1 .5 .4 .5 .5 .5 .3 .5 .3 .5 .3 .5 .2 .5 0 .5 .2 .5 .4 .5 .5 .5 .2 .5 .4 .5 .4 .5 .3 .5 .2 .5 .2 .5 .3 .5 .2 .5 .3 .5 .3 .5 .2 .5 .3 .5 .6 .5 .5 .5 .4 .5 .4 .5 .2 .5 .1 .5 .1 .5-.2 .5-.2 .5-.4 .5-.6 .5-.7 .5-.8 .5-.6 .4-.4 .5-.5 .5-.6 .5-.2 .5-.3 .5-.1 .5-.1 .5 0 .5 .2 .5 0 .5 .2 .5 .2 .5 .2 .5-.1 .5 .3 .5 .3 .5 .2 .5 .1 .5 0 .5 .5 .5 .1 .5 .3 .5 .5 .5 .4 .5 .2 .5 .4 .5 .5 .5 .5 .5 .5 .5 .3 .5 .3 .5 .2 .5-.1 .5 .2 .5 .3 .5-.2 .5-.3 .5-.1 .4-.2 .5-.3 .5-.1 .5-.3 .5-.1 .5-.3 .5-.7 .5-.1 .5-.2 .5-.7 .5-.3 .5-.3 .5-.3 .5-.4 .5-.5 .5-.4 .5-.1 .5-.6 .5-.3 .5-.3 .5-.3 .5-.3 .5-.4 .5-.2 .5-.4 .5-.3 .5-.4 .5-.1 .5 0 .5 .2 .5 0 .5 0 .5 .3 .5 .3 .5 .5 .5 .6 .5 .5 .5 .8 .4 .4 .5 .5 .5 .8 .5 .6 .5 .5 .5 .4 .5 .5 .5 .2 .5 .5 .5 .2 .5 .2 .5 .2 .5 0 .5 .3 .5 .4 .5 .2 .5 .1 .5 .5 .5 .2 .5 .3 .5 .4 .5 .2 .5 .4 .5 .3 .5 .2 .5 .6 .5 .3 .5 .3 .5 0 .5 .2 .5 .3 .5 .3 .5 0 .5 .1 .5 0 .5-.2 .5-.2 .5-.2 .5 .3 .4-.1 .5-.4 .5-.2 .5-.3 .5-.3 .5-.5 .5-.3 .5-.4 .5-.4 .5-.6 .5-.6 .5-.7 .5-.8 .5-.5 .5-.5 .5-.5 .5-.5 .5-.5 .5-.6 .5-.5 .5-.3 .5-.3 .5-.5 .5-.7 .5-.6 .5-.4 .5-.3 .5-.1 .5-.1 .5 0 .5-.1 .5 0 .5 .2 .5 .6 .5 .4 .5 0 .5 .2 .5 .3 .4 .2 .5 .4 .5 0 .5 .4 .5 .4 .5 .2 .5 .1 .5 .4 .5 .1 .5 .1 .5 .3 .5-.2 .5 .2 .5 .2 .5 .1 .5 .1 .5 .2 .5 .3 .5 .4 .5 .7 .5 .7 .5 1.1 .5 1 .5 1.5 .5 1.8 .5 2 .5 2.3 .5 2.3 .5 2.6 .5 2.7 .5 2.5 .5 2.2 .5 2.2 .5 1.4 .5 1 .5 .7 .5 .4 .5-.1 .5-.4 .4-.9 .5-.9 .5-1 .5-1.3 .5-1.1 .5-1.1 .5-1 .5-1 .5-.8 .5-.9 .5-.7 .5-.8 .5-1 .5-.7 .5-.6 .5-.3 .5-.4 .5-.4 .5-.5 .5-.4 .5-.4 .5-.2 .5-.1 .5-.2 .5 .3 .5-.1 .5 .1 .5 .1 .5 .3 .5 .3 .5 .4 .5 .5 .5 .6 .5 .3 .5 0 .5 .1 .5 0 .5 .2 .4-.1 .5 0 .5-.1 .5-.4 .5-.5 .5 0 .5-.2 .5 .1 .5-.3 .5-.2 .5 0 .5 0 .5 0 .5 0 .5 0 .5-.1 .5 0 .5 0 .5 .4 .5-.1 .5 .1 .5 0 .5 .3 .5 .1 .5 .2 .5 0 .5 .4 .5 .1 .5 .2 .5 .3 .5 .4 .5 .3 .5 .1 .5 .5 .5 .4 .5 .7 .5 .3 .5 .5 .5 .7 .4 .7 .5 .4 .5 .7 .5 .5 .5 .4 .5 0 .5 0 .5-.3 .5-.4 .5-.6 .5-1 .5-1 .5-1.4 .5-1.1 .5-1 .5-.9 .5-.9 .5-.6 .5-.6 .5-.6 .5-.3 .5 0 .5 0 .5-.1 .5-.1 .5-.1 .5 0 .5 0 .5 0 .5 .1 .5-.1 .5-.1 .5 0 .5 0 .5 .1 .5 .1 .5-.2 .5 0 .4 .3 .5-.1 .5 .4 .5 .2 .5 .2 .5 0 .5 .2 .5-.1 .5 .2 .5 .1 .5-.1 .5 .1 .5-.2 .5-.2 .5-.3 .5 0 .5-.1 .5 0 .5 0 .5-.2 .5-.2 .5-.3 .5-.1 .5-.4 .5-.3 .5-.9 .5-.6 .5-.6 .5-.9 .5-.8 .5-1.2 .5-1 .5-1.2 .5-.8 .5-.5 .5-.4 .5-.4 .5 0 .4 .2 .5 .5 .5 .7 .5 .6 .5 .8 .5 .5 .5 .4 .5 .5 .5 .4 .5 .1 .5-.2 .5-.4 .5-.3 .5-.2 .5-.2 .5-.1 .5 0 .5-.4 .5-.1 .5-.4 .5 .1 .5-.2 .5 0 .5-.5 .5 0 .5 0 .5-.1 .5-.1 .5 .2 .5 .2 .5 .3 .5 .2 .5-.1 .5 .2 .5-.4 .5-.5 .5-.4 .5-.5 .5-.9 .4-1.1 .5-1 .5-1 .5-1.2 .5-1.1 .5-.5 .5-.6 .5-.5 .5 .1 .5 .4 .5 .7 .5 .7 .5 .8 .5 1.3 .5 1.2 .5 .9 .5 1.4 .5 1.4 .5 .9 .5 .7 .5 .5 .5 .6 .5 .7 .5 .5 .5 .6 .5 .6 .5 .4 .5 .3 .5 .4 .5 .5 .5 .6 .5 .5 .5 .6 .5 .1 .5 .5 .5 .4 .5 .5 .5 .3 .4 .4 .5 .2 .5 .3 .5 .5 .5 .2 .5 .4 .5 .3 .5 .4 .5 .4 .5 .3 .5 .2 .5 .4 .5-.1 .5 .1 .5 .2 .5 .2 .5 0 .5 .2 .5 0 .5 0 .5 .4 .5 .1 .5 .3 .5 .2 .5 0 .5 .2 .5 0 .5 .1 .5 .2 .5 .1 .5-.1 .5 .1 .5 .2 .5 .1 .5 .1 .5 0 .5 .2 .5 .1 .5-.3 .4 .1 .5-.1 .5-.2 .5-.1 .5-.2 .5-.2 .5-.2 .5-.3 .5-.4 .5 0 .5-.2 .5-.2 .5-.1 .5-.3 .5-.1 .5 .1 .5 .1 .5 .1 .5 .3 .5 .1 .5 .1 .5 .2 .5 .1 .5 .1 .5 .3 .5 .2 .5 .3 .5 .1 .5 .1 .5 .1 .5 .4 .5 .2 .5 .3 .5 .1 .5 .2 .5 .2 .5 .2 .5 .2 .4 .3 .5 .4 .5 0 .5 .3 .5 .2 .5 .2 .5 0 .5 .1 .5-.2 .5-.1 .5 .1 .5 0 .5 0 .5 0 .5 0 .5 .1 .5 0 .5-.1 .5 .1 .5 .1 .5-.1 .5-.1 .5-.1 .5-.1 .5-.1 .5-.1 .5-.1 .5-.1 .5-.2 .5-.2 .5 0 .5 0 .5-.1 .5 0 .5 0 .5-.1 .5 0 .5-.1 .4-.1 .5-.1 .5-.3 .5-.1 .5-.1 .5-.1 .5-.1 .5 .1 .5-.2 .5 .3 .5 .3 .5 .1 .5 .1 .5-.1 .5 .1 .5 .2 .5-.1 .5-.1 .5 .4 .5-.2 .5 .1 .5 0 .5 .3 .5 .2 .5 .1 .5 .1 .5 .1 .5 .3 .5-.1 .5 .4 .5 0 .5 .2 .5 0 .5-.2 .5 0 .5-.1 .5 .3 .5-.1 .5 .1 .4 0 .5 .1 .5 .1 .5 .3 .5 .2 .5 .1 .5 .2 .5-.1 .5-.2 .5 0 .5 0 .5 0 .5-.1 .5-.3 .5 0 .5 0 .5-.1 .5-.1 .5 0 .5-.2 .5 .1 .5-.1 .5-.2 .5-.1 .5-.1 .5-.1 .5 0 .5 0 .5-.3 .5 0 .5-.2 .5-.2 .5-.1 .5-.2 .5-.3 .5-.2 .5-.2 .5-.2 .4 .1 .5-.1 .5 0 .5-.1 .5 .1 .5 .1 .5 .1 .5 .1 .5 .1 .5 .1 .5 .1 .5 .2 .5-.1 .5 .1 .5-.1 .5-.6 .5-1 .5-1.8 .5-2.6 .5-3.5 0 0" fill="none" stroke="#e3d23a" stroke-width="1"/>
<path d="M32.0 217.4l.5 3 .5-4.7 .5-3.1 .5-3.6 .5-1.9 .5 3.8 .5 4.5 .5-.4 .5 2.7 .5 .4 .5-.1 .5-.7 .5 2.1 .5 2.3 .5 5.6 .4 .4 .5 4.3 .5 4.2 .5 1.5 .5 1.7 .5 6.5 .5 3.8 .5 4.9 .5 4.2 .5 3.2 .5 1.9 .5 1.1 .5 1.6 .5 2.7 .5 3.6 .5 2.1 .5 4.2 .5-.3 .5 1.5 .5 .6 .5 .6 .5 .6 .5 1.9 .5 2.7 .5 1.7 .5 2.7 .5 .2 .5-.5 .5-.2 .5-.3 .5-2.1 .5 .8 .5 2.2 .5 .8 .5 .7 .5 2.8 .5 2.6 .5 1.4 .4 2 .5 .9 .5 1.8 .5 2.4 .5 3.2 .5 2.4 .5 5.1 .5 4.5 .5 3 .5 3.2 .5 3 .5 1.3 .5-.8 .5 .1 .5-.1 .5-.3 .5-.9 .5 1.5 .5 .2 .5 .1 .5 1.4 .5 2.1 .5-.1 .5 .1 .5 .6 .5 .6 .5-.9 .5 .3 .5 0 .5-1.3 .5-2.3 .5-1.4 .5-1.6 .5-1.5 .5-.3 .5-.2 .5-.2 .5-.5 .5-1.6 .4-1.2 .5-.6 .5-.8 .5-.2 .5 .2 .5-.4 .5-.1 .5-.9 .5-.4 .5-.7 .5 .2 .5-1.4 .5 .6 .5 .1 .5 .7 .5-.3 .5 .8 .5 .5 .5-.1 .5 0 .5 .4 .5 0 .5-2.2 .5-.7 .5-.4 .5-1.4 .5-1.3 .5 0 .5-1.3 .5-.8 .5 .6 .5 .7 .5 1.4 .5 2.7 .5 2.4 .5 2.4 .5 2.4 .5 2.8 .4 2.9 .5 2.3 .5 3 .5 3.7 .5 2.1 .5 2.2 .5 2.5 .5 2.4 .5 2.4 .5 3.4 .5 2.6 .5 2.7 .5 2.2 .5 1.6 .5 1.7 .5 1.2 .5 2 .5 1.1 .5 1.1 .5 .3 .5 .7 .5 1.3 .5 1 .5 1 .5 .9 .5 1.6 .5-.4 .5-.3 .5 1.2 .5 .3 .5-.6 .5 .6 .5 .6 .5 0 .5 .6 .5 .9 .5-.2 .5 .2 .4-1 .5-.3 .5-.7 .5-1 .5-.9 .5 .3 .5-1.3 .5-.5 .5-.4 .5-.5 .5-1.7 .5-.4 .5-.1 .5 .6 .5 .1 .5 1.4 .5 .9 .5 .9 .5 1.5 .5 1.6 .5 2 .5 2.8 .5 .8 .5 1.9 .5 1.4 .5 .5 .5 .4 .5 2.5 .5 .1 .5 1.9 .5 2 .5 1.3 .5 .3 .5 1 .5-.5 .5-.5 .5-.7 .5-.4 .5-.9 .4-1.1 .5-1.1 .5-1.3 .5-1.1 .5-.7 .5-.5 .5-.7 .5-.6 .5-.9 .5-1.5 .5-.5 .5-.5 .5 .3 .5 .1 .5 .9 .5 1.1 .5 1.2 .5 .7 .5 1.3 .5 1.4 .5 .3 .5 .7 .5 .8 .5 .1 .5 0 .5 1 .5 .8 .5 .7 .5 1 .5 1.6 .5-.1 .5 0 .5-.2 .5 0 .5-1.6 .5 .1 .5-.6 .5 .2 .4-.9 .5-.1 .5-.7 .5-.8 .5-1.1 .5-.9 .5-.4 .5-.2 .5-.2 .5-.7 .5-.5 .5-.9 .5-.1 .5-.6 .5-.7 .5 0 .5 0 .5-1.2 .5-.3 .5-.7 .5-1.2 .5-2.4 .5-2.1 .5-2 .5-2.1 .5-2.5 .5-1.1 .5-1 .5-.2 .5-.5 .5 .7 .5 1 .5 1.4 .5 1.3 .5 3.2 .5 4.1 .5 4.5 .5 5.7 .5 5.8 .4 4.3 .5 3.1 .5 2.3 .5 .3 .5 .5 .5 1 .5 .4 .5-.1 .5 1 .5-.3 .5 .7 .5 .8 .5 1.2 .5 1 .5 .9 .5-.3 .5 .2 .5 0 .5-1.1 .5 .3 .5 .7 .5 0 .5 .3 .5-.1 .5-.7 .5-.3 .5-.1 .5-1.5 .5 .5 .5 .3 .5-.4 .5-.3 .5 1 .5 .4 .5 .5 .5 .2 .5 .6 .5 .9 .4-.3 .5-.3 .5 .6 .5 .4 .5-.1 .5 1.2 .5 1.4 .5 .6 .5 1.3 .5 .9 .5 1.1 .5 .5 .5 1.1 .5-.1 .5 1.3 .5 1 .5 1.1 .5 1.4 .5 1.9 .5 .8 .5 .6 .5 .6 .5 1.2 .5 .3 .5 .9 .5 1.6 .5 2.4 .5 1.1 .5 2.1 .5 2.5 .5 1.3 .5 .7 .5 1.5 .5 1.2 .5 .4 .5 1.5 .5 1.2 .5 1.3 .4 1.6 .5 1.5 .5 .8 .5 1.3 .5 1.4 .5 .6 .5 1.4 .5 1.1 .5 .2 .5-.1 .5 .7 .5-.1 .5-.5 .5 .2 .5-.4 .5-.8 .5-.6 .5 .1 .5 0 .5 .7 .5 .4 .5-.2 .5-.2 .5-.6 .5-.9 .5-.6 .5-.2 .5 .3 .5 .6 .5 .9 .5 .5 .5 .9 .5 .4 .5 .2 .5 0 .5 1 .5 .5 .5 1.2 .5 1 .4 1 .5 1 .5 .5 .5 .4 .5 .5 .5 .6 .5-.1 .5 .5 .5 .5 .5 1.1 .5 .4 .5 .5 .5 .9 .5 .5 .5 0 .5 1.1 .5 .9 .5 .6 .5-.1 .5 .3 .5-.6 .5-.4 .5-.4 .5-.3 .5-.4 .5-.6 .5-.3 .5-.7 .5 .1 .5 .2 .5 .5 .5 1 .5 1.2 .5 1 .5 1.1 .5 1.3 .5 1 .5 .8 .4 .2 .5 .4 .5-.4 .5-.5 .5-.5 .5-.2 .5-1 .5 .2 .5-.6 .5-.1 .5-.5 .5-.2 .5-1.4 .5-1.2 .5-1.8 .5-.6 .5-1.4 .5-1.5 .5-1.1 .5-.8 .5-1.6 .5-1.3 .5-1.8 .5-2.3 .5-2.4 .5-2.6 .5-2.9 .5-2.3 .5-2.5 .5-2.1 .5-1.3 .5-.3 .5 1 .5 1.5 .5 1.7 .5 1.9 .5 1.4 .5 1.1 .5 .7 .4 .5 .5 0 .5 .1 .5 .1 .5 .7 .5 .6 .5 .2 .5 .6 .5 .1 .5 .3 .5-.1 .5-.1 .5 .3 .5 .7 .5-.1 .5 .1 .5 .8 .5 1.3 .5 1.2 .5 2 .5 3.6 .5 3 .5 2.7 .5 2.5 .5 2 .5 .9 .5 .5 .5-.3 .5-.2 .5 .4 .5 .2 .5 .4 .5 .8 .5-.2 .5-.1 .5-.1 .5 .1 .5-.1 .4 .5 .5 .3 .5-.5 .5 0 .5 0 .5 0 .5-.6 .5 .2 .5 0 .5-.1 .5 .1 .5 .4 .5 .3 .5 .2 .5 .5 .5 0 .5 .5 .5-.1 .5-.1 .5 .1 .5 .4 .5 .2 .5 .8 .5 .3 .5 .6 .5 .8 .5 .3 .5 .5 .5 .7 .5 .1 .5 .1 .5 .4 .5 .6 .5 .6 .5 .9 .5 .8 .5 .6 .5 .4 .5 1.1 .4 .7 .5 .4 .5 .5 .5 1 .5 .2 .5 .8 .5 .2 .5 .8 .5 .3 .5 .5 .5 .2 .5 1 .5 .7 .5 .4 .5 .3 .5-.1 .5 .2 .5-.1 .5-.1 .5-.4 .5 .1 .5-.1 .5-.2 .5 .1 .5-.3 .5-.2 .5-.6 .5-.2 .5-.1 .5-.1 .5-.4 .5-.2 .5-.3 .5-.7 .5 0 .5-.2 .5-.1 .5-.1 .4-.3 .5-.5 .5-.6 .5-.4 .5-.5 .5 .3 .5 .4 .5 .9 .5 .1 .5 .5 .5-.2 .5-.5 .5-.1 .5 0 .5 0 .5 .2 .5 .6 .5 0 .5 .8 .5 .2 .5 .6 .5 .2 .5 .3 .5 0 .5 .4 .5 .1 .5 .1 .5 .7 .5 .3 .5 .2 .5 .7 .5 .4 .5 .4 .5 .1 .5 .6 .5 .2 .5 .2 .5 .1 .4 .5 .5 .5 .5 .4 .5 .8 .5 .3 .5 .1 .5 0 .5 0 .5 .1 .5 .2 .5 .2 .5-.2 .5-.2 .5-.5 .5-.6 .5-.4 .5-.2 .5-.5 .5-.2 .5-.2 .5-.6 .5-.4 .5-.2 .5-.3 .5-.6 .5 .5 .5-.1 .5 .1 .5-.6 .5 .1 .5-.7 .5-.1 .5-.6 .5 .1 .5 0 .5 .1 .5-.3 .5-.2 .5-.3 .4-.3 .5-.5 .5-.1 .5 0 .5 .6 .5 .7 .5 .9 .5 1.1 .5 1.9 .5 1.1 .5 1.6 .5 1.8 .5 2 .5 1.2 .5 1.1 .5 .6 .5 .2 .5-.6 .5-.2 .5-.4 .5 0 .5-.4 .5-.3 .5-.5 .5 .1 .5-.7 .5-.2 .5-.7 .5-1 .5-1.9 .5-1.5 .5-2.6 .5-2.7 .5-2.5 .5-2.6 .5-3 .5-2.7 .5-2.3 .4-2.4 .5-2.4 .5-2.9 .5-2.2 .5-2.7 .5-2.2 .5-.8 .5-.2 .5-.2 .5 1.3 .5 1.2 .5 1.3 .5 1.2 .5 1.3 .5 1.1 .5 1.1 .5 .2 .5 .9 .5 1.1 .5 .5 .5 .7 .5 .5 .5 .5 .5-.1 .5-.2 .5 .1 .5 .6 .5 0 .5 .6 .5 .5 .5 .7 .5 .2 .5 1 .5 1.2 .5 1 .5 .3 .5 .5 .5 .7 .5 .5 .4 .2 .5 .9 .5 1.2 .5 1 .5 .7 .5 .9 .5 .8 .5 .9 .5 .6 .5 0 .5 .8 .5-.1 .5-.2 .5-.5 .5 .2 .5-.5 .5-.5 .5-.3 .5 0 .5-.3 .5-.4 .5-.2 .5-.6 .5-1 .5-.7 .5-.9 .5-.8 .5-.8 .5-.8 .5-1.2 .5-.6 .5-.5 .5-.9 .5-.4 .5-.1 .5 0 .5-.6 .5 0 .4-.4 .5-.6 .5-.8 .5-.7 .5-.7 .5-.3 .5 0 .5 0 .5 .1 .5 .2 .5 .2 .5-.1 .5 0 .5 .5 .5 .5 .5-.1 .5 .4 .5-.4 .5-1.2 .5-2 .5-2.3 .5-3.3 .5-3.3 .5-3.5 .5-3.5 .5-3.5 .5-3.4 .5-2.7 .5-2.5 .5-2 .5-1.2 .5-.3 .5-.4 .5 .3 .5-.3 .5 .9 .5 .5 .5 .8 .4 .6 .5 1.8 .5 1.3 .5 1.8 .5 1.5 .5 1.4 .5 1.1 .5 .7 .5 .6 .5 .8 .5 .6 .5 1.1 .5 .8 .5 .3 .5 .7 .5 1.2 .5 .4 .5 1 .5 1 .5 .3 .5-.1 .5 .9 .5-.1 .5-.2 .5 .8 .5 .7 .5-.5 .5 .6 .5 .6 .5 .2 .5 .8 .5 .5 .5 .2 .5 .2 .5-.3 .5-.3 .5 .4 .5 .1 .5 .4 .4 .5 .5 .7 .5 .4 .5 .7 .5 .1 .5 .5 .5 0 .5-.1 .5-.3 .5 .3 .5-.1 .5-.2 .5-.7 .5-.4 .5-.3 .5-.1 .5-.6 .5 0 .5-.2 .5-.5 .5-.8 .5 .4 .5 .1 .5 .3 .5-.2 .5 .3 .5-.3 .5-.2 .5-.8 .5 0 .5-.1 .5-.7 .5 0 .5 .3 .5-.9 .5-.2 .5 .3 .5-.2 .4-.5 .5 .3 .5-.5 .5-.4 .5-.3 .5 .2 .5 0 .5-.3 .5-.2 .5 0 .5-.5 .5 .3 .5 .5 .5 .7 .5 .2 .5 .3 .5 .1 .5-.1 .5-.7 .5-.2 .5 .2 .5 .3 .5 .4 .5 1 .5 .6 .5 .1 .5 .3 .5 .3 .5 .2 .5 .5 .5 .8 .5 .1 .5 .2 .5 .6 .5 .5 .5 .3 .5 .6 .5 .3 .5-.2 .4-.1 .5-.1 .5 0 .5 .4 .5 .4 .5 .6 .5 .9 .5 .6 .5 .1 .5 .5 .5 .4 .5-.3 .5 .2 .5 .8 .5-.2 .5 0 .5 .2 .5 0 .5-.5 .5-.2 .5-.7 .5-.7 .5-1.1 .5-.6 .5-.7 .5-.2 .5-.6 .5-.6 .5-.3 .5 .1 .5-.4 .5 .6 .5 .4 .5 .1 .5 .4 .5 .3 .5-.3 .5 .2 .4 .1 .5 .2 .5 .4 .5 .6 .5 .5 .5 0 .5-.1 .5-.1 .5-.1 .5 .8 .5 1 .5 .7 .5 .4 .5 .2 .5 0 .5 .2 .5-.1 .5 .6 .5 .8 .5 .2 .5 0 .5 .5 .5-.2 .5 .1 .5-.1 .5 0 .5 .2 .5 .6 .5 .1 .5 .6 .5 .7 .5 .1 .5-.1 .5 .5 .5-.1 .5-.3 .5-.4 .5 .3 .5-.6 .4-.4 .5 .3 .5 .5 .5-.6 .5 .3 .5 0 .5-.5 .5-.4 .5 0 .5-.3 .5-.3 .5-.3 .5-.5 .5-.2 .5 .1 .5-.4 .5 .1 .5 .2 .5 .2 .5-.3 .5 .6 .5 .1 .5 .3 .5-.2 .5 .1 .5 0 .5 0 .5-.4 .5 .1 .5 .2 .5-.2 .5 0 .5-.3 .5-.1 .5-.6 .5-.5 .5-.1 .5 .1 .4-.2 .5 .3 .5 .3 .5-.3 .5-.3 .5-.4 .5-.1 .5 0 .5-.3 .5-.1 .5 .8 .5-.6 .5 .1 .5-.2 .5 .5 .5-.2 .5 .4 .5-.2 .5 .5 .5 .5 .5-.2 .5 .5 .5 .6 .5 .4 .5 0 .5 .6 .5 0 .5 0 .5-.1 .5-.2 .5 .1 .5 0 .5-.2 .5-.1 .5 0 .5-.2 .5 0 .5 .2 .4 .2 .5 .4 .5 .6 .5 .2 .5 .3 .5 .3 .5 .8 .5 .3 .5 1.4 .5 .5 .5 .7 .5-.2 .5 .3 .5-.7 .5 .5 .5 0 .5 0 .5 0 .5 .3 .5-.1 .5 .5 .5 0 .5 0 .5 .2 .5-.1 .5-.4 .5 .5 .5 .2 .5 .2 .5 .4 .5 .1 .5 0 .5 .1 .5-.1 .5-.3 .5 0 .5-.8 .5-.1 .5-.2 .4 .1 .5-.2 .5 0 .5-.6 .5 0 .5-.4 .5-.4 .5 .1 .5-.1 .5-.2 .5-.5 .5-.2 .5-.3 .5 .2 .5-.4 .5 .1 .5-.1 .5-.1 .5-.3 .5-.4 .5-.5 .5 .3 .5 0 .5 0 .5 0 .5 .5 .5-.9 .5-.6 .5-.5 .5-.2 .5-.7 .5-.2 .5-.3 .5-.1 .5-.6 .5 0 .5-.8 .5 0 .4-1 .5-.6 .5-1.7 .5-.5 .5-2.2 .5-.8 .5-1.5 .5-.5 .5-.7 .5 .1 .5-1.1 .5 .1 .5 .5 .5-.4 .5-.1 .5 .7 .5-.1 .5-.3 .5 .4 .5 .4 .5 .3 .5 .7 .5 .7 .5 .8 .5 .9 .5 .6 .5 .5 .5 .5 .5 1 .5 .5 .5 .6 .5 .8 .5 .1 .5-.3 .5-.1 .5-.1 .5-.2 .5-.2 .5 .1 .4-.1 .5-.2 .5-.2 .5-.1 .5 0 .5-.1 .5 .2 .5 .1 .5-.3 .5-1.1 .5-1 .5-1 .5-.5 .5-.5 .5 0 .5-.1 .5-.3 .5-.7 .5-.2 .5-.5 .5 .1 .5-.4 .5 .1 .5-.1 .5-.4 .5-.4 .5 .4 .5-.3 .5 0 .5 .6 .5 .7 .5 .4 .5 1.1 .5 1.1 .5 .6 .5 .9 .5 .9 .5 .7 .4 .2 .5 .8 .5 .7 .5 .4 .5 .3 .5 .6 .5 .8 .5-.1 .5 .3 .5 .5 .5 .5 .5-.4 .5 .1 .5 .1 .5-.1 .5 .3 .5 .3 .5 .5 .5 .7 .5 .6 .5 .1 .5 .9 .5 .7 .5 0 .5 .7 .5 .7 .5 .1 .5 .1 .5 .9 .5-.2 .5 .3 .5 .2 .5 .4 .5 .1 .5 .5 .5 .7 .5 .7 .5 .4 .5 0 .4-.3 .5-.3 .5-.4 .5-.2 .5 0 .5-.4 .5-.6 .5-.7 .5-.8 .5-.4 .5 .5 .5-.7 .5 .2 .5 .2 .5-.7 .5-.7 .5 .2 .5-.3 .5-.7 .5-.2 .5-.5 .5-.4 .5-.3 .5-.5 .5-.4 .5-.4 .5-.4 .5-.4 .5 .1 .5-.7 .5 .3 .5-.5 .5 0 .5-.3 .5 .2 .5 .3 .5 .5 .5 .6 .4 .2 .5 .6 .5 .4 .5 .5 .5-.3 .5 .4 .5 0 .5 .2 .5 .2 .5 .3 .5 .9 .5 .8 .5 .5 .5 .7 .5 .7 .5 .3 .5 .6 .5 .4 .5 .2 .5 .7 .5 .8 .5 .9 .5 1 .5 .7 .5 1.2 .5 1 .5 .5 .5 .1 .5 .2 .5-.4 .5-.4 .5-.1 .5-.2 .5 .2 .5 0 .5-.5 .5-.4 .5 0 .4-.3 .5-.5 .5 .1 .5-.4 .5-.8 .5-.4 .5 .1 .5-.5 .5 0 .5-.2 .5-.4 .5-.4 .5-.2 .5-.5 .5-.1 .5-.2 .5-.4 .5 0 .5-.3 .5-.5 .5-.3 .5 0 .5-.8 .5-.5 .5-.3 .5-.3 .5-.2 .5 .1 .5 .4 .5-.4 .5 .2 .5-.4 .5 .4 .5 0 .5 .7 .5-.2 .5 .1 .5-.2 .5 .3 .4-.1 .5 .6 .5 0 .5-.1 .5-.4 .5 .3 .5 .3 .5 0 .5 .6 .5 .2 .5 .6 .5 0 .5 1 .5 .3 .5 .5 .5-.1 .5 0 .5-.2 .5 .2 .5 .2 .5-.1 .5 .6 .5 .1 .5 .8 .5 .4 .5 .6 .5 .1 .5-.1 .5-.7 .5 .4 .5 .6 .5 .2 .5 .5 .5 .6 .5-.2 .5 .3 .5 .4 .5 1.2 .4 .8 .5 .3 .5-.1 .5 .4 .5-.2 .5-.3 .5 .4 .5 .6 .5 0 .5 .3 .5 .6 .5 .5 .5 .4 .5 .5 .5 .5 .5 .1 .5 .1 .5 .1 .5-.1 .5 0 .5 .3 .5 .5 .5 .6 .5 .3 .5 .8 .5 .7 .5 .6 .5 .2 .5 .5 .5-.5 .5-.4 .5-.3 .5-.7 .5-.8 .5-.5 .5-.7 .5-1.1 .5-.9 .5-.4 .4-.3 .5-.4 .5-.1 .5 .6 .5-.1 .5 .1 .5 0 .5 .2 .5-.1 .5 0 .5 .2 .5 .5 .5 .2 .5 0 .5 .5 .5 .3 .5 0 .5 .1 .5 0 .5 .3 .5 .1 .5 .6 .5 .7 .5 .8 .5 .2 .5 .7 .5 .4 .5 .3 .5 .1 .5 .6 .5-.2 .5 0 .5-.4 .5 .1 .5 0 .5-.1 .5-.6 .5 .2 .4-.4 .5-.7 .5 0 .5-.1 .5-.3 .5-.4 .5-.6 .5-.2 .5-.3 .5-1 .5-.3 .5 0 .5-.4 .5-.4 .5-.1 .5-.5 .5-.1 .5-.8 .5-.3 .5-.5 .5-.1 .5-.4 .5-.1 .5-.2 .5-.2 .5-.5 .5-.5 .5 0 .5 .2 .5 .5 .5 .6 .5 .4 .5 .7 .5 .4 .5 .5 .5 .6 .5 .5 .5 1 .4 .5 .5 .4 .5 1 .5 .6 .5 0 .5 .4 .5 .6 .5-.5 .5 .3 .5 .4 .5 0 .5-.1 .5 .5 .5 .1 .5 .6 .5 .2 .5 .5 .5 .4 .5 .3 .5 0 .5 .5 .5 .1 .5 .3 .5 .3 .5 .5 .5 .5 .5 .6 .5 .2 .5-.3 .5-.1 .5 .1 .5 0 .5-.1 .5 .5 .5 .1 .5-.6 .5-.3 .5-.4 .5 .2 .4-.3 .5-.3 .5 0 .5-.3 .5-.8 .5-.6 .5-.4 .5-.8 .5-.5 .5-.3 .5-.5 .5-1.1 .5-.7 .5-.6 .5-.7 .5-.4 .5 0 .5-.3 .5-.7 .5-.2 .5-.3 .5-.4 .5-.7 .5-.9 .5-.8 .5-.6 .5-.2 .5 .4 .5 .8 .5 .7 .5 .5 .5 .2 .5 0 .5 .3 .5 .1 .5-.4 .5 .3 .5 .5 .4 .1 .5 .7 .5 .5 .5 .4 .5 .3 .5 .3 .5-.5 .5 .3 .5-.2 .5-.2 .5 .4 .5 .2 .5 .1 .5 .5 .5 .3 .5 0 .5 .2 .5 .5 .5 .3 .5 .9 .5 1.5 .5 1.9 .5 1.6 .5 2.7 .5 2.7 .5 2.6 .5 2.5 .5 3 .5 2.7 .5 2.6 .5 2.3 .5 2.1 .5 1.3 .5 .1 .5-.7 .5-.9 .5-1.2 .5-1.5 .5-1 .4-1.1 .5-.9 .5-.7 .5-1 .5-1.2 .5-1.1 .5-1.1 .5-1.3 .5-.7 .5-.6 .5-.3 .5-.6 .5-.6 .5-.7 .5-.6 .5-.4 .5-.2 .5-.1 .5-.4 .5 0 .5-.6 .5-.1 .5-.2 .5 .1 .5 .5 .5 .5 .5 .2 .5 .4 .5 .6 .5 .1 .5 .3 .5 .8 .5 .7 .5 0 .5 .1 .5-.2 .5-.8 .5-.3 .4-.2 .5-.1 .5 0 .5-.1 .5-.5 .5 .1 .5-.2 .5 .2 .5-.6 .5 .1 .5 0 .5 0 .5-.1 .5 .6 .5-.1 .5-.1 .5-.1 .5 .2 .5 .1 .5 0 .5 .2 .5 .1 .5 .4 .5 .1 .5 .3 .5-.1 .5 .7 .5-.2 .5 .3 .5 .4 .5 .7 .5 0 .5 .4 .5 .6 .5 .6 .5 .5 .5 .7 .5 .7 .5 .7 .4 .8 .5 .3 .5 .8 .5 .3 .5 0 .5-.7 .5-.4 .5-1.5 .5-1 .5-1.2 .5-1.3 .5-1.6 .5-1.3 .5-1.2 .5-.8 .5-.4 .5-.2 .5 .1 .5-.2 .5-.3 .5-.1 .5 .1 .5-.1 .5 .1 .5-.1 .5-.1 .5 .1 .5 0 .5-.1 .5 .4 .5-.2 .5-.2 .5-.2 .5 .3 .5-.4 .5 .4 .5-.1 .5 .2 .4 .3 .5 .2 .5 .3 .5 .6 .5 .2 .5-.2 .5 0 .5-.3 .5-.3 .5 0 .5 .1 .5 .1 .5 0 .5-.2 .5-.6 .5-.1 .5-.3 .5 0 .5 .1 .5 .2 .5-.3 .5-.1 .5-.4 .5-.7 .5-1 .5-1.4 .5-1 .5-1 .5-.9 .5-.8 .5-.9 .5-1.1 .5-1.3 .5-.6 .5-.4 .5 .3 .5 .2 .5 1.2 .4 1 .5 1.5 .5 1.2 .5 1 .5 .3 .5-.1 .5-.6 .5-.1 .5-.4 .5 0 .5-.4 .5-.1 .5-.5 .5 0 .5-.4 .5 .2 .5 .1 .5-.3 .5-.2 .5-.3 .5-.2 .5-.4 .5 .2 .5-.6 .5 .3 .5 .1 .5 .1 .5-.3 .5 .9 .5 .3 .5 .3 .5 .4 .5 .2 .5-.6 .5-1.1 .5-1.3 .5-1.1 .5-1.3 .5-1.2 .4-1 .5-.8 .5-1 .5-1 .5-1 .5 0 .5-.4 .5 0 .5 1.2 .5 1.9 .5 1.3 .5 1.8 .5 1.5 .5 1.6 .5 .4 .5 .6 .5 1 .5 1.1 .5 .3 .5 .9 .5 .6 .5 .2 .5 .1 .5 .8 .5 .4 .5 .5 .5 .7 .5 .3 .5 .1 .5 .5 .5 .9 .5 .3 .5 .7 .5 .2 .5 .5 .5 0 .5 .5 .5 0 .4 .6 .5 0 .5 .5 .5 .4 .5 .4 .5 .3 .5 .6 .5 .3 .5 .3 .5 .2 .5 .3 .5 0 .5-.3 .5-.1 .5 .2 .5 0 .5 .1 .5 .7 .5-.1 .5 0 .5 .7 .5 .1 .5 0 .5 .4 .5 0 .5-.3 .5-.1 .5 .2 .5 0 .5 .2 .5 .1 .5 .3 .5 .2 .5 .1 .5 .1 .5-.2 .5 .2 .5-.1 .5-.7 .4 .1 .5 0 .5-.4 .5-.3 .5 .3 .5-.4 .5-.5 .5-.1 .5-.5 .5-.3 .5 0 .5 0 .5-.1 .5 .1 .5 0 .5 .2 .5 .2 .5 .3 .5 .4 .5 .3 .5-.1 .5 .2 .5-.1 .5-.1 .5 .2 .5 .5 .5 .4 .5 .4 .5 .4 .5-.1 .5 .4 .5-.1 .5 .1 .5 0 .5 .4 .5-.1 .5 .6 .5 .4 .4 .6 .5 .3 .5 .1 .5 .1 .5-.1 .5-.2 .5-.2 .5-.1 .5-.4 .5-.1 .5 .3 .5 .2 .5 .3 .5 .3 .5 .2 .5-.1 .5-.3 .5-.5 .5-.2 .5 .1 .5-.1 .5 .2 .5 .1 .5 0 .5-.2 .5-.1 .5-.4 .5-.2 .5-.6 .5 0 .5 .1 .5 .3 .5 .1 .5 .4 .5 .1 .5-.3 .5-.2 .5-.3 .4-.7 .5-.4 .5-.2 .5 0 .5 .1 .5 .5 .5 .2 .5 .5 .5-.5 .5 .4 .5 .2 .5-.1 .5-.2 .5 .3 .5-.2 .5 .1 .5 0 .5 .1 .5 .4 .5-.2 .5 .1 .5 0 .5 .4 .5 .1 .5 .4 .5 .2 .5 .1 .5 .1 .5-.1 .5 .2 .5-.1 .5 .2 .5-.1 .5-.3 .5-.1 .5 0 .5 .3 .5 0 .5 .4 .4 0 .5 .3 .5-.1 .5 .6 .5 .1 .5 .2 .5 .1 .5-.3 .5-.8 .5-.1 .5-.3 .5-.1 .5 .1 .5 .3 .5 .1 .5 .1 .5 0 .5-.3 .5-.3 .5-.4 .5-.1 .5-.1 .5 0 .5-.1 .5 .3 .5-.1 .5 .2 .5 0 .5-.5 .5-.5 .5-.3 .5-.6 .5-.1 .5 .1 .5 0 .5-.2 .5 .1 .5-.2 .4 0 .5-.2 .5 .2 .5-.1 .5 .3 .5 .3 .5 .2 .5 0 .5 .3 .5 0 .5 0 .5 .1 .5-.2 .5-.1 .5-.2 .5-1.2 .5-2 .5-3.5 .5-5.2 .5-6.6 0 0" fill="none" stroke="#f58a1e" stroke-width="1"/>
<rect x="23" y="166" width="21" height="21" fill="#1e86c3" />
<text transform="translate(33.6,184.1) scale(0.82,1)" fill="#f2eeee" font-size="18" text-anchor="middle">F</text>
<rect x="40" y="248" width="21" height="21" fill="#d4721c" />
<text transform="translate(50.6,266.1) scale(0.82,1)" fill="#f2eeee" font-size="18" text-anchor="middle">D</text>
<rect x="65" y="285" width="21" height="21" fill="#1e86c3" />
<text transform="translate(75.6,303.1) scale(0.82,1)" fill="#f2eeee" font-size="18" text-anchor="middle">F</text>
<rect x="85" y="285" width="21" height="21" fill="#1e86c3" />
<text transform="translate(95.6,303.1) scale(0.82,1)" fill="#f2eeee" font-size="18" text-anchor="middle">F</text>
<rect x="59" y="305" width="21" height="21" fill="#1e86c3" />
<text transform="translate(69.6,323.1) scale(0.82,1)" fill="#f2eeee" font-size="18" text-anchor="middle">F</text>
<rect x="120" y="365" width="21" height="21" fill="#1e86c3" />
<text transform="translate(130.6,383.1) scale(0.82,1)" fill="#f2eeee" font-size="18" text-anchor="middle">F</text>
<rect x="145" y="369" width="21" height="21" fill="#1e86c3" />
<text transform="translate(155.6,387.1) scale(0.82,1)" fill="#f2eeee" font-size="18" text-anchor="middle">F</text>
<rect x="138" y="355" width="21" height="21" fill="#1e86c3" />
<text transform="translate(148.6,373.1) scale(0.82,1)" fill="#f2eeee" font-size="18" text-anchor="middle">F</text>
<rect x="187" y="393" width="21" height="21" fill="#d4721c" />
<text transform="translate(197.6,411.1) scale(0.82,1)" fill="#f2eeee" font-size="18" text-anchor="middle">D</text>
<rect x="184" y="384" width="21" height="21" fill="#1e86c3" />
<text transform="translate(194.6,402.1) scale(0.82,1)" fill="#f2eeee" font-size="18" text-anchor="middle">F</text>
<rect x="177" y="369" width="21" height="21" fill="#1e86c3" />
<text transform="translate(187.6,387.1) scale(0.82,1)" fill="#f2eeee" font-size="18" text-anchor="middle">F</text>
<rect x="206" y="432" width="21" height="21" fill="#1e86c3" />
<text transform="translate(216.6,450.1) scale(0.82,1)" fill="#f2eeee" font-size="18" text-anchor="middle">F</text>
<rect x="262" y="418" width="21" height="21" fill="#1e86c3" />
<text transform="translate(272.6,436.1) scale(0.82,1)" fill="#f2eeee" font-size="18" text-anchor="middle">F</text>
<rect x="267" y="439" width="21" height="21" fill="#1e86c3" />
<text transform="translate(277.6,457.1) scale(0.82,1)" fill="#f2eeee" font-size="18" text-anchor="middle">F</text>
<rect x="290" y="457" width="21" height="21" fill="#d4721c" />
<text transform="translate(300.6,475.1) scale(0.82,1)" fill="#f2eeee" font-size="18" text-anchor="middle">D</text>
<rect x="309" y="473" width="21" height="21" fill="#1e86c3" />
<text transform="translate(319.6,491.1) scale(0.82,1)" fill="#f2eeee" font-size="18" text-anchor="middle">F</text>
<rect x="330" y="473" width="21" height="21" fill="#1e86c3" />
<text transform="translate(340.6,491.1) scale(0.82,1)" fill="#f2eeee" font-size="18" text-anchor="middle">F</text>
<rect x="355" y="469" width="21" height="21" fill="#1e86c3" />
<text transform="translate(365.6,487.1) scale(0.82,1)" fill="#f2eeee" font-size="18" text-anchor="middle">F</text>
<rect x="341" y="467" width="21" height="21" fill="#d3aa46" />
<text transform="translate(351.6,485.1) scale(0.82,1)" fill="#f2eeee" font-size="18" text-anchor="middle">E</text>
<rect x="388" y="455" width="21" height="21" fill="#1e86c3" />
<text transform="translate(398.6,473.1) scale(0.82,1)" fill="#f2eeee" font-size="18" text-anchor="middle">F</text>
<rect x="415" y="455" width="21" height="21" fill="#d4721c" />
<text transform="translate(425.6,473.1) scale(0.82,1)" fill="#f2eeee" font-size="18" text-anchor="middle">D</text>
<rect x="429" y="425" width="21" height="21" fill="#1e86c3" />
<text transform="translate(439.6,443.1) scale(0.82,1)" fill="#f2eeee" font-size="18" text-anchor="middle">F</text>
<rect x="449" y="443" width="21" height="21" fill="#1e86c3" />
<text transform="translate(459.6,461.1) scale(0.82,1)" fill="#f2eeee" font-size="18" text-anchor="middle">F</text>
<rect x="509" y="450" width="21" height="21" fill="#1e86c3" />
<text transform="translate(519.6,468.1) scale(0.82,1)" fill="#f2eeee" font-size="18" text-anchor="middle">F</text>
<rect x="509" y="453" width="21" height="21" fill="#1e86c3" />
<text transform="translate(519.6,471.1) scale(0.82,1)" fill="#f2eeee" font-size="18" text-anchor="middle">F</text>
<rect x="551" y="453" width="21" height="21" fill="#1e86c3" />
<text transform="translate(561.6,471.1) scale(0.82,1)" fill="#f2eeee" font-size="18" text-anchor="middle">F</text>
<rect x="569" y="466" width="21" height="21" fill="#1e86c3" />
<text transform="translate(579.6,484.1) scale(0.82,1)" fill="#f2eeee" font-size="18" text-anchor="middle">F</text>
<rect x="630" y="440" width="21" height="21" fill="#1e86c3" />
<text transform="translate(640.6,458.1) scale(0.82,1)" fill="#f2eeee" font-size="18" text-anchor="middle">F</text>
<rect x="671" y="460" width="21" height="21" fill="#1e86c3" />
<text transform="translate(681.6,478.1) scale(0.82,1)" fill="#f2eeee" font-size="18" text-anchor="middle">F</text>
<rect x="657" y="466" width="21" height="21" fill="#d4721c" />
<text transform="translate(667.6,484.1) scale(0.82,1)" fill="#f2eeee" font-size="18" text-anchor="middle">D</text>
<rect x="690" y="469" width="21" height="21" fill="#1e86c3" />
<text transform="translate(700.6,487.1) scale(0.82,1)" fill="#f2eeee" font-size="18" text-anchor="middle">F</text>
<rect x="720" y="465" width="21" height="21" fill="#d3aa46" />
<text transform="translate(730.6,483.1) scale(0.82,1)" fill="#f2eeee" font-size="18" text-anchor="middle">E</text>
<rect x="751" y="478" width="21" height="21" fill="#1e86c3" />
<text transform="translate(761.6,496.1) scale(0.82,1)" fill="#f2eeee" font-size="18" text-anchor="middle">F</text>
<rect x="750" y="481" width="21" height="21" fill="#1e86c3" />
<text transform="translate(760.6,499.1) scale(0.82,1)" fill="#f2eeee" font-size="18" text-anchor="middle">F</text>
<rect x="792" y="474" width="21" height="21" fill="#1e86c3" />
<text transform="translate(802.6,492.1) scale(0.82,1)" fill="#f2eeee" font-size="18" text-anchor="middle">F</text>
<rect x="774" y="479" width="21" height="21" fill="#d4721c" />
<text transform="translate(784.6,497.1) scale(0.82,1)" fill="#f2eeee" font-size="18" text-anchor="middle">D</text>
<rect x="811" y="483" width="21" height="21" fill="#1e86c3" />
<text transform="translate(821.6,501.1) scale(0.82,1)" fill="#f2eeee" font-size="18" text-anchor="middle">F</text>
<rect x="843" y="480" width="21" height="21" fill="#d3aa46" />
<text transform="translate(853.6,498.1) scale(0.82,1)" fill="#f2eeee" font-size="18" text-anchor="middle">E</text>
<rect x="885" y="496" width="21" height="21" fill="#d4721c" />
<text transform="translate(895.6,514.1) scale(0.82,1)" fill="#f2eeee" font-size="18" text-anchor="middle">D</text>
<rect x="869" y="493" width="21" height="21" fill="#1e86c3" />
<text transform="translate(879.6,511.1) scale(0.82,1)" fill="#f2eeee" font-size="18" text-anchor="middle">F</text>
<rect x="871.5" y="493" width="21" height="21" fill="#1e86c3" />
<text transform="translate(882.1,511.1) scale(0.82,1)" fill="#f2eeee" font-size="18" text-anchor="middle">F</text>
<rect x="913" y="489" width="21" height="21" fill="#1e86c3" />
<text transform="translate(923.6,507.1) scale(0.82,1)" fill="#f2eeee" font-size="18" text-anchor="middle">F</text>
<rect x="932" y="482" width="21" height="21" fill="#1e86c3" />
<text transform="translate(942.6,500.1) scale(0.82,1)" fill="#f2eeee" font-size="18" text-anchor="middle">F</text>
<rect x="991" y="494" width="21" height="21" fill="#1e86c3" />
<text transform="translate(1001.6,512.1) scale(0.82,1)" fill="#f2eeee" font-size="18" text-anchor="middle">F</text>
<rect x="1009" y="503" width="21" height="21" fill="#d4721c" />
<text transform="translate(1019.6,521.1) scale(0.82,1)" fill="#f2eeee" font-size="18" text-anchor="middle">D</text>
<rect x="1034" y="499" width="21" height="21" fill="#1e86c3" />
<text transform="translate(1044.6,517.1) scale(0.82,1)" fill="#f2eeee" font-size="18" text-anchor="middle">F</text>
<rect x="1053" y="501" width="21" height="21" fill="#1e86c3" />
<text transform="translate(1063.6,519.1) scale(0.82,1)" fill="#f2eeee" font-size="18" text-anchor="middle">F</text>
<path d="M43,92 h9 v4 h-4 v7 h-5 z" fill="#c8c8c8"/>
<path d="M190,92 h9 v4 h-4 v7 h-5 z" fill="#c8c8c8"/>
<path d="M293,92 h9 v4 h-4 v7 h-5 z" fill="#c8c8c8"/>
<path d="M418,92 h9 v4 h-4 v7 h-5 z" fill="#c8c8c8"/>
<path d="M660,92 h9 v4 h-4 v7 h-5 z" fill="#c8c8c8"/>
<path d="M777,92 h9 v4 h-4 v7 h-5 z" fill="#c8c8c8"/>
<path d="M888,92 h9 v4 h-4 v7 h-5 z" fill="#c8c8c8"/>
<path d="M1012,92 h9 v4 h-4 v7 h-5 z" fill="#c8c8c8"/>
<path d="M30.5,118.5 H53 M35.5,113.5 L30.5,118.5 L35.5,123.5" stroke="#d0d0d0" stroke-width="1" fill="none"/>
<path d="M834,561.5 H857.5 M852.5,556.5 L857.5,561.5 L852.5,566.5" stroke="#d0d0d0" stroke-width="1" fill="none"/>
<path d="M30.0 651V648.0M31.5 651V645.1M32.5 651V643.6M33.0 651V645.3M34.0 651V644.2M35.5 651V647.6M36.0 651V647.0M37.0 651V647.8M38.0 651V647.3M39.9 651V644.6M41.4 651V646.4M42.9 651V646.5M43.9 651V644.3M45.4 651V646.4M46.4 651V646.9M47.4 651V647.3M48.4 651V648.0M49.9 651V649.3M50.9 651V648.9M52.4 651V649.0M52.9 651V648.9M53.4 651V648.9M54.9 651V649.1M55.9 651V649.3M58.4 651V649.1M59.3 651V649.7M60.8 651V649.4M61.3 651V649.3M63.8 651V648.8M64.8 651V648.6M65.8 651V649.6M66.3 651V649.0M66.8 651V649.6M67.8 651V649.6M68.3 651V649.4M69.8 651V648.9M70.3 651V649.7M71.8 651V649.7M72.3 651V649.9M72.8 651V649.5M73.3 651V649.4M73.8 651V649.2M74.3 651V649.3M74.8 651V649.9M75.3 651V649.4M75.8 651V649.8M76.3 651V649.5M77.3 651V649.1M77.8 651V648.9M80.2 651V649.2M81.7 651V649.4M82.7 651V648.6M83.7 651V648.9M85.2 651V649.7M85.7 651V649.4M87.2 651V649.3M89.2 651V648.9M90.2 651V650.0M90.7 651V649.0M92.2 651V649.7M93.7 651V649.8M97.6 651V649.4M99.1 651V649.1M102.6 651V648.3M103.6 651V648.6M104.6 651V648.3M105.6 651V648.5M108.1 651V648.5M108.6 651V649.1M110.1 651V649.0M110.6 651V649.1M111.6 651V649.1M112.1 651V649.9M113.1 651V649.4M114.1 651V649.5M114.6 651V649.9M115.1 651V649.7M115.6 651V649.8M116.0 651V649.3M117.0 651V649.8M117.5 651V649.3M118.0 651V649.9M119.0 651V648.7M120.0 651V649.0M120.5 651V649.6M121.0 651V649.5M123.0 651V649.6M125.5 651V649.1M127.0 651V648.7M128.0 651V649.0M130.0 651V648.6M132.0 651V649.3M132.5 651V649.4M133.0 651V649.0M134.0 651V649.7M134.5 651V649.6M135.0 651V649.7M135.4 651V649.4M136.4 651V649.6M137.9 651V649.4M138.4 651V649.6M138.9 651V649.3M139.9 651V648.3M141.9 651V649.9M143.9 651V649.8M145.4 651V649.6M146.9 651V649.5M147.4 651V649.4M148.9 651V649.2M150.4 651V648.3M151.4 651V649.3M152.4 651V649.1M153.4 651V649.8M154.3 651V649.5M155.3 651V649.5M155.8 651V649.6M156.3 651V649.7M156.8 651V649.5M158.3 651V649.0M158.8 651V649.7M159.3 651V649.2M160.8 651V648.6M161.3 651V649.5M162.8 651V649.4M163.3 651V650.0M163.8 651V648.7M164.3 651V649.3M164.8 651V647.9M165.3 651V649.6M166.3 651V648.8M166.8 651V648.3M168.8 651V648.9M173.7 651V647.4M175.2 651V648.1M176.7 651V648.8M177.2 651V648.5M178.2 651V649.1M179.2 651V649.0M180.7 651V648.5M181.2 651V649.5M182.2 651V649.9M182.7 651V649.5M184.2 651V649.7M185.2 651V648.8M187.2 651V648.5M188.7 651V649.9M189.7 651V649.7M191.2 651V649.4M192.6 651V649.0M194.6 651V649.6M196.1 651V649.6M197.1 651V649.6M198.1 651V649.0M199.1 651V649.4M202.1 651V649.1M204.1 651V648.9M206.1 651V649.1M207.6 651V648.4M209.1 651V648.6M212.5 651V648.7M214.0 651V648.6M215.0 651V649.2M215.5 651V648.8M217.0 651V649.4M217.5 651V648.7M218.5 651V649.6M219.0 651V649.9M221.5 651V649.7M222.0 651V649.7M222.5 651V649.6M223.0 651V649.6M224.0 651V649.5M225.5 651V650.1M226.5 651V649.5M227.5 651V650.1M228.0 651V649.8M230.5 651V649.3M231.9 651V648.7M232.9 651V648.8M233.9 651V649.1M234.4 651V649.3M235.9 651V649.1M236.4 651V649.6M237.9 651V649.4M238.9 651V649.1M239.9 651V648.9M241.4 651V649.6M242.4 651V649.7M243.4 651V649.6M244.4 651V649.5M249.4 651V648.7M249.8 651V649.4M250.8 651V648.8M251.8 651V649.6M252.3 651V649.7M252.8 651V649.8M253.8 651V649.1M254.8 651V649.4M255.8 651V649.0M256.3 651V647.9M256.8 651V647.9M257.8 651V648.3M258.3 651V648.5M258.8 651V649.0M259.3 651V649.1M259.8 651V649.1M260.3 651V648.1M260.8 651V647.4M261.3 651V647.0M261.8 651V648.0M262.3 651V648.2M262.8 651V646.7M263.3 651V647.2M263.8 651V647.4M266.3 651V648.9M267.8 651V649.5M268.8 651V649.5M270.2 651V649.7M272.2 651V649.3M273.2 651V649.4M274.2 651V649.5M274.7 651V650.1M276.2 651V649.5M276.7 651V650.1M281.2 651V647.8M282.2 651V648.0M282.7 651V648.6M284.7 651V648.8M285.2 651V648.7M285.7 651V648.6M287.2 651V649.4M287.7 651V649.7M289.1 651V648.9M290.6 651V649.8M291.1 651V649.4M291.6 651V649.7M292.6 651V649.9M293.6 651V649.9M295.6 651V649.8M296.6 651V649.1M298.1 651V649.6M299.1 651V649.9M299.6 651V649.4M301.1 651V649.2M303.6 651V649.4M304.6 651V649.7M306.1 651V649.1M307.5 651V649.3M308.5 651V649.8M310.5 651V649.0M311.5 651V649.7M312.5 651V649.4M314.0 651V649.1M315.0 651V649.2M316.0 651V649.5M316.5 651V649.4M317.0 651V650.0M318.5 651V649.7M319.5 651V649.3M320.5 651V649.8M322.0 651V649.3M322.5 651V649.3M324.0 651V649.4M325.0 651V649.1M326.0 651V649.8M326.4 651V649.4M327.4 651V649.1M329.9 651V649.8M330.4 651V649.0M331.4 651V649.0M332.9 651V649.5M333.9 651V649.7M334.9 651V649.9M335.9 651V649.6M337.4 651V649.9M338.9 651V649.8M340.4 651V649.4M341.9 651V649.4M342.9 651V649.1M344.4 651V649.6M345.3 651V649.4M346.3 651V649.3M347.3 651V649.3M347.8 651V649.7M348.8 651V649.9M349.8 651V649.5M350.3 651V649.6M350.8 651V649.7M351.3 651V650.2M351.8 651V650.1M352.3 651V649.6M353.8 651V649.2M354.8 651V649.1M355.3 651V649.3M356.3 651V649.2M357.3 651V648.5M358.3 651V649.6M359.3 651V648.4M361.3 651V648.8M361.8 651V649.7M362.8 651V649.6M363.3 651V649.6M363.8 651V648.9M364.3 651V649.9M366.2 651V649.4M369.2 651V649.5M371.2 651V647.6M371.7 651V648.9M372.2 651V649.2M373.2 651V649.1M373.7 651V648.8M374.2 651V649.4M375.2 651V649.0M376.2 651V649.7M377.2 651V648.8M378.2 651V648.9M378.7 651V648.7M379.2 651V648.4M380.2 651V646.3M380.7 651V647.8M381.2 651V647.8M381.7 651V646.8M382.2 651V647.0M382.7 651V647.0M383.6 651V646.7M384.1 651V646.0M384.6 651V646.4M385.1 651V647.6M385.6 651V647.5M387.1 651V648.9M387.6 651V648.3M388.6 651V649.1M389.6 651V649.7M391.6 651V649.1M393.1 651V649.4M394.1 651V648.2M395.1 651V648.9M397.1 651V649.4M399.1 651V648.9M400.6 651V648.7M401.1 651V649.4M401.6 651V649.3M403.0 651V648.5M405.5 651V648.4M407.5 651V648.3M408.5 651V648.9M409.0 651V649.9M409.5 651V649.4M410.5 651V649.5M411.0 651V649.2M412.5 651V650.1M413.0 651V648.6M413.5 651V649.9M414.0 651V649.5M414.5 651V649.3M415.5 651V647.9M416.5 651V649.5M417.0 651V649.2M417.5 651V648.6M419.0 651V648.0M420.5 651V649.4M421.0 651V649.0M421.9 651V648.9M422.4 651V648.6M422.9 651V649.5M423.4 651V649.3M425.9 651V649.6M427.9 651V649.9M429.4 651V649.3M429.9 651V650.1M430.4 651V648.7M430.9 651V648.3M431.4 651V648.9M431.9 651V647.3M432.4 651V647.2M432.9 651V647.0M433.4 651V647.1M433.9 651V646.5M434.4 651V646.0M434.9 651V647.5M435.9 651V648.1M436.4 651V647.9M437.9 651V648.5M438.9 651V648.2M439.9 651V648.9M442.8 651V649.3M443.3 651V649.1M443.8 651V648.8M445.3 651V648.8M445.8 651V649.5M446.8 651V649.4M447.3 651V648.9M448.8 651V649.5M449.8 651V649.4M450.3 651V649.1M450.8 651V649.6M451.8 651V649.3M452.3 651V649.6M453.8 651V649.5M454.8 651V649.8M456.3 651V649.0M457.3 651V649.6M457.8 651V649.9M459.3 651V649.3M460.2 651V649.7M462.2 651V649.1M464.2 651V649.8M465.2 651V650.0M465.7 651V650.1M466.2 651V648.9M467.7 651V649.6M468.2 651V649.5M469.2 651V649.7M469.7 651V649.5M470.2 651V649.2M471.2 651V650.0M472.2 651V649.1M473.7 651V650.1M474.2 651V649.5M475.7 651V648.9M477.2 651V647.9M478.2 651V649.8M478.7 651V650.1M479.1 651V649.4M479.6 651V649.5M482.1 651V649.0M482.6 651V649.7M483.1 651V649.4M484.1 651V649.4M486.1 651V649.5M486.6 651V649.7M487.6 651V649.9M488.1 651V649.6M490.1 651V650.0M491.1 651V649.6M491.6 651V649.7M493.1 651V649.4M493.6 651V649.6M494.6 651V649.1M496.6 651V649.9M497.1 651V649.8M497.6 651V649.2M502.0 651V649.1M502.5 651V649.2M504.0 651V649.4M505.5 651V649.5M506.5 651V649.4M507.5 651V649.3M508.0 651V649.7M508.5 651V649.4M509.0 651V649.2M509.5 651V649.7M510.5 651V648.9M511.5 651V649.0M512.0 651V649.1M513.5 651V649.5M514.5 651V649.5M516.0 651V649.9M516.5 651V649.5M517.4 651V649.7M519.4 651V649.8M519.9 651V649.3M520.9 651V649.9M522.4 651V649.4M523.4 651V649.0M523.9 651V650.1M524.9 651V649.3M525.4 651V649.8M527.4 651V649.1M528.4 651V649.0M529.9 651V649.9M530.9 651V649.3M531.4 651V649.9M532.9 651V649.4M533.4 651V649.7M534.4 651V649.6M534.9 651V649.9M535.4 651V649.9M536.4 651V649.2M538.3 651V649.5M538.8 651V649.5M539.3 651V649.6M539.8 651V649.4M540.8 651V649.5M541.3 651V649.8M542.3 651V649.7M542.8 651V650.0M544.3 651V649.3M545.3 651V649.9M546.3 651V649.5M547.3 651V649.9M548.3 651V649.9M548.8 651V649.5M549.8 651V649.9M550.3 651V649.9M551.8 651V649.8M552.8 651V649.5M553.8 651V649.4M554.3 651V649.5M555.3 651V649.1M556.7 651V649.6M557.7 651V649.3M558.2 651V649.9M559.2 651V649.8M559.7 651V649.4M560.2 651V649.4M561.2 651V648.7M562.2 651V649.3M563.7 651V649.9M564.2 651V649.7M565.7 651V649.5M566.7 651V649.5M567.2 651V649.7M568.2 651V649.4M568.7 651V649.8M569.7 651V649.5M570.2 651V650.0M571.2 651V649.9M571.7 651V649.4M572.2 651V650.0M573.2 651V650.0M573.7 651V650.1M574.2 651V650.0M574.6 651V649.8M575.6 651V650.0M576.1 651V649.2M576.6 651V649.8M578.1 651V649.2M579.1 651V648.5M581.1 651V649.7M582.1 651V649.3M583.6 651V650.1M585.1 651V649.1M585.6 651V649.8M586.6 651V649.7M587.1 651V649.8M588.1 651V649.8M589.1 651V649.6M589.6 651V649.7M590.6 651V649.7M591.1 651V649.6M591.6 651V649.9M592.1 651V649.9M592.6 651V648.8M593.6 651V649.5M594.5 651V649.3M595.0 651V649.2M595.5 651V649.5M596.5 651V649.5M597.0 651V649.0M598.0 651V649.7M599.0 651V648.4M601.0 651V649.4M601.5 651V649.7M602.0 651V649.8M603.0 651V649.7M603.5 651V649.7M604.0 651V649.4M605.0 651V649.7M605.5 651V650.1M606.0 651V649.8M607.0 651V648.4M607.5 651V649.9M609.0 651V649.5M609.5 651V649.4M611.0 651V649.3M612.0 651V648.4M612.9 651V648.7M613.4 651V649.5M613.9 651V648.6M614.9 651V647.8M615.9 651V647.9M617.9 651V649.1M619.4 651V648.2M620.9 651V649.0M621.9 651V649.6M623.4 651V649.7M624.4 651V649.5M625.9 651V649.1M627.4 651V649.1M628.4 651V649.4M629.4 651V649.9M629.9 651V649.7M630.9 651V649.8M631.4 651V649.9M632.3 651V649.5M632.8 651V650.2M633.3 651V649.3M634.8 651V650.0M635.8 651V649.7M636.3 651V649.1M636.8 651V648.8M637.3 651V649.4M638.8 651V649.4M639.8 651V649.7M640.3 651V649.5M640.8 651V649.7M641.8 651V649.5M642.8 651V648.8M643.8 651V649.8M644.3 651V649.3M645.8 651V649.5M646.8 651V650.0M649.3 651V649.3M651.2 651V648.8M652.7 651V649.4M653.2 651V649.0M653.7 651V649.8M654.7 651V649.0M656.7 651V649.4M657.2 651V649.4M658.2 651V649.6M659.2 651V649.2M659.7 651V650.0M660.7 651V649.7M661.2 651V649.6M662.7 651V649.4M663.7 651V649.6M664.7 651V649.8M665.7 651V648.9M666.7 651V649.3M669.2 651V649.2M669.7 651V649.6M670.2 651V649.4M670.6 651V649.6M671.6 651V649.2M673.1 651V648.2M674.1 651V649.1M674.6 651V649.9M676.1 651V648.5M677.1 651V650.0M677.6 651V649.2M679.1 651V649.4M679.6 651V649.1M680.1 651V649.9M680.6 651V649.2M681.6 651V649.8M682.1 651V649.2M682.6 651V649.4M683.1 651V649.6M684.1 651V649.3M685.1 651V648.6M686.1 651V648.8M687.1 651V649.7M688.6 651V649.8M689.5 651V649.2M691.0 651V649.4M691.5 651V649.0M693.5 651V649.7M694.0 651V649.1M696.5 651V648.9M701.0 651V648.5M702.5 651V648.4M703.0 651V649.5M703.5 651V649.6M704.0 651V649.4M705.0 651V649.5M705.5 651V649.7M706.5 651V649.7M707.0 651V649.9M707.5 651V649.7M708.4 651V649.8M708.9 651V648.8M709.9 651V649.4M711.9 651V648.9M712.9 651V649.0M713.4 651V649.6M714.4 651V649.4M714.9 651V649.7M715.9 651V648.9M717.4 651V648.8M717.9 651V649.3M718.4 651V649.9M719.4 651V648.9M721.9 651V649.6M722.9 651V648.7M723.9 651V649.7M724.9 651V649.6M725.4 651V649.7M725.9 651V649.5M727.8 651V649.5M728.8 651V649.2M729.3 651V650.1M730.3 651V649.9M731.3 651V649.1M732.3 651V649.8M733.3 651V649.4M734.3 651V649.5M735.3 651V649.8M735.8 651V649.8M737.3 651V649.5M737.8 651V649.7M738.8 651V649.6M739.8 651V649.2M740.3 651V649.7M741.3 651V649.3M743.3 651V649.8M743.8 651V649.6M746.7 651V649.6M747.2 651V649.2M748.7 651V649.6M749.2 651V649.2M750.7 651V649.8M751.7 651V649.2M754.2 651V649.1M755.2 651V649.9M755.7 651V649.9M758.2 651V649.4M760.2 651V649.1M760.7 651V649.7M761.2 651V649.8M762.7 651V649.2M763.2 651V649.5M764.2 651V649.8M764.7 651V649.1M765.2 651V649.1M766.6 651V649.7M767.1 651V649.5M768.1 651V649.1M769.1 651V649.5M770.6 651V649.1M772.1 651V649.8M774.1 651V649.2M775.1 651V649.5M777.6 651V649.2M778.1 651V649.6M780.1 651V648.9M781.1 651V649.6M782.1 651V649.4M782.6 651V649.5M783.6 651V648.6M784.1 651V649.6M785.0 651V649.4M786.5 651V649.4M787.5 651V648.7M788.0 651V648.8M789.0 651V649.5M789.5 651V649.1M791.5 651V649.0M792.0 651V649.5M792.5 651V649.2M793.5 651V648.6M794.5 651V648.8M796.0 651V649.3M797.0 651V649.7M797.5 651V649.5M800.0 651V649.8M800.5 651V650.0M802.5 651V649.6M803.0 651V649.6M803.9 651V649.0M805.4 651V648.6M806.4 651V649.5M807.4 651V648.5M808.9 651V648.9M811.4 651V648.2M813.9 651V649.6M814.4 651V649.7M815.4 651V649.7M816.4 651V649.5M817.4 651V649.1M817.9 651V649.2M819.4 651V649.8M819.9 651V649.7M820.4 651V649.9M821.4 651V649.0M822.4 651V649.5M823.8 651V649.2M824.8 651V648.6M825.3 651V649.4M825.8 651V649.4M826.3 651V649.2M826.8 651V649.3M827.3 651V649.0M828.3 651V649.2M828.8 651V648.4M830.3 651V649.2M831.3 651V649.3M832.3 651V649.1M833.8 651V648.3M834.3 651V648.8M834.8 651V648.1M836.3 651V649.4M837.3 651V649.7M838.8 651V649.3M840.3 651V650.1M840.8 651V649.6M842.2 651V649.2M843.2 651V648.9M844.7 651V649.5M845.2 651V649.6M846.2 651V649.6M847.7 651V649.0M850.2 651V649.9M851.2 651V649.5M857.2 651V648.3M857.7 651V648.5M858.2 651V649.3M858.7 651V648.3M859.2 651V649.4M859.7 651V649.5M860.2 651V649.4M860.7 651V650.0M861.2 651V649.6M861.6 651V649.8M862.1 651V649.9M862.6 651V649.8M863.1 651V648.3M863.6 651V647.8M864.1 651V648.2M865.1 651V648.6M866.1 651V648.7M867.1 651V648.6M867.6 651V647.9M868.6 651V648.5M869.6 651V649.3M870.1 651V648.8M870.6 651V649.3M871.6 651V649.0M872.6 651V649.0M874.1 651V649.7M875.1 651V649.7M876.1 651V649.8M877.6 651V649.6M878.1 651V649.5M878.6 651V649.8M879.1 651V649.6M880.5 651V649.7M881.5 651V649.8M882.5 651V649.5M883.5 651V649.9M884.5 651V648.0M886.0 651V650.1M887.5 651V649.9M888.5 651V650.0M889.5 651V650.1M890.0 651V649.9M892.0 651V649.0M893.0 651V649.9M894.0 651V649.4M896.0 651V649.5M896.5 651V649.7M899.0 651V649.3M900.4 651V648.5M901.4 651V648.3M901.9 651V649.3M902.4 651V649.1M902.9 651V649.8M903.4 651V649.1M903.9 651V649.8M904.4 651V649.3M904.9 651V648.6M905.4 651V647.7M906.4 651V648.9M907.4 651V649.3M907.9 651V649.3M908.9 651V648.2M909.9 651V649.6M911.4 651V649.4M911.9 651V649.8M913.4 651V649.9M913.9 651V649.6M914.9 651V648.7M916.9 651V649.6M917.9 651V649.0M919.3 651V649.6M920.3 651V650.0M920.8 651V650.0M921.8 651V649.8M922.3 651V649.8M924.3 651V649.9M924.8 651V649.8M925.3 651V649.8M925.8 651V649.2M926.8 651V649.1M927.3 651V649.9M927.8 651V650.0M928.3 651V649.9M929.3 651V649.3M929.8 651V649.7M930.3 651V648.7M930.8 651V649.1M931.3 651V648.9M932.3 651V648.6M932.8 651V647.2M933.3 651V647.8M933.8 651V647.0M934.8 651V647.2M938.7 651V647.7M939.2 651V647.9M939.7 651V647.5M940.2 651V647.8M940.7 651V648.5M941.7 651V648.6M942.7 651V648.6M944.7 651V649.8M945.2 651V649.6M946.2 651V648.9M946.7 651V649.4M947.2 651V649.2M948.2 651V649.2M949.2 651V647.3M953.2 651V646.6M953.7 651V645.2M954.2 651V645.3M954.7 651V641.8M955.2 651V642.8M956.2 651V640.5M956.7 651V644.2M957.1 651V645.1M958.1 651V644.4M958.6 651V640.5M959.1 651V642.8M960.1 651V641.9M964.1 651V647.1M966.1 651V647.6M969.1 651V648.2M970.6 651V649.6M972.6 651V648.9M973.6 651V648.7M974.6 651V649.3M976.5 651V649.8M978.0 651V649.0M979.5 651V649.1M980.5 651V649.0M982.0 651V649.4M983.0 651V649.9M983.5 651V650.0M985.0 651V649.7M986.5 651V649.2M987.0 651V650.0M988.0 651V649.8M989.0 651V649.7M990.0 651V649.8M990.5 651V649.8M991.5 651V649.7M992.5 651V650.1M993.0 651V649.2M994.5 651V650.1M995.0 651V648.9M996.4 651V649.3M997.4 651V649.6M997.9 651V649.4M998.4 651V649.8M999.4 651V648.9M1000.9 651V649.9M1001.9 651V649.6M1002.4 651V649.8M1003.4 651V649.9M1005.4 651V649.6M1006.4 651V649.7M1008.9 651V649.3M1009.4 651V649.7M1009.9 651V649.8M1010.9 651V648.8M1011.4 651V650.0M1011.9 651V649.8M1012.9 651V649.6M1013.9 651V649.5M1015.3 651V649.5M1015.8 651V649.6M1016.3 651V649.5M1016.8 651V650.1M1017.3 651V649.9M1018.3 651V649.9M1019.8 651V649.7M1020.8 651V650.0M1021.3 651V649.6M1022.3 651V649.1M1024.8 651V650.1M1025.3 651V650.0M1026.3 651V649.1M1027.3 651V649.1M1028.3 651V649.6M1029.8 651V650.1M1030.3 651V649.1M1031.8 651V649.4M1032.8 651V649.4M1033.2 651V649.3M1034.2 651V649.4M1035.2 651V649.5M1036.2 651V649.7M1037.2 651V648.8M1038.2 651V649.7M1038.7 651V649.8M1040.2 651V649.8M1041.2 651V649.3M1041.7 651V649.6M1042.7 651V648.8M1043.7 651V649.9M1044.7 651V649.8M1045.2 651V649.4M1046.2 651V649.5M1047.2 651V649.5M1048.2 651V649.6M1049.7 651V648.5M1050.7 651V649.8M1051.7 651V649.7M1052.2 651V649.7M1054.6 651V648.8M1055.6 651V649.9M1056.1 651V649.6M1056.6 651V649.4M1057.6 651V649.6M1060.1 651V649.8M1060.6 651V649.9M1061.1 651V648.9M1061.6 651V649.9M1062.1 651V649.7M1063.1 651V649.0M1064.1 651V649.9M1065.1 651V649.8M1065.6 651V650.2M1066.1 651V649.3M1066.6 651V648.4M1068.1 651V649.6M1069.1 651V649.5M1069.6 651V649.7M1070.6 651V649.7M1071.1 651V649.5M1072.0 651V649.8M1073.0 651V649.1M1074.0 651V650.0M1074.5 651V649.6M1075.5 651V649.6M1076.0 651V649.8M1076.5 651V650.1M1077.0 651V650.0M1077.5 651V650.1M1078.0 651V649.5M1078.5 651V649.1M1079.0 651V648.4M1079.5 651V646.9M1080.0 651V643.6M1080.5 651V634.3M1081.0 651V611.0" stroke="#ff2020" stroke-width="1" fill="none"/>
<path d="M30.5 651V639.2M31.0 651V645.9M32.0 651V648.0M33.5 651V641.8M34.5 651V645.4M35.0 651V646.0M36.5 651V647.8M37.5 651V645.6M38.5 651V647.1M39.0 651V648.3M39.5 651V643.9M40.4 651V644.4M40.9 651V646.7M41.9 651V645.3M42.4 651V645.4M43.4 651V646.0M44.4 651V647.1M44.9 651V647.2M45.9 651V645.6M46.9 651V645.1M47.9 651V647.6M48.9 651V649.3M49.4 651V648.0M50.4 651V649.0M51.4 651V648.4M51.9 651V648.1M53.9 651V648.1M54.4 651V649.0M55.4 651V648.4M56.4 651V649.4M56.9 651V649.0M57.4 651V649.2M57.9 651V648.7M58.8 651V649.3M59.8 651V647.9M60.3 651V647.4M61.8 651V646.4M62.3 651V648.4M62.8 651V649.0M63.3 651V648.3M64.3 651V648.3M65.3 651V648.5M67.3 651V649.0M68.8 651V649.4M69.3 651V648.7M70.8 651V649.5M71.3 651V649.2M76.8 651V649.5M78.2 651V648.9M78.7 651V649.7M79.2 651V649.9M79.7 651V649.7M80.7 651V649.5M81.2 651V649.2M82.2 651V649.5M83.2 651V649.1M84.2 651V648.9M84.7 651V649.8M86.2 651V650.0M86.7 651V649.4M87.7 651V649.8M88.2 651V650.2M88.7 651V650.0M89.7 651V649.0M91.2 651V649.6M91.7 651V649.6M92.7 651V649.3M93.2 651V649.9M94.2 651V649.6M94.7 651V649.3M95.2 651V649.5M95.7 651V649.5M96.2 651V649.1M96.7 651V647.9M97.1 651V648.2M98.1 651V647.7M98.6 651V647.8M99.6 651V648.4M100.1 651V648.8M100.6 651V648.1M101.1 651V648.1M101.6 651V647.9M102.1 651V648.3M103.1 651V648.2M104.1 651V647.4M105.1 651V648.5M106.1 651V649.0M106.6 651V649.0M107.1 651V649.3M107.6 651V647.8M109.1 651V649.3M109.6 651V648.7M111.1 651V647.9M112.6 651V649.3M113.6 651V649.4M116.5 651V649.6M118.5 651V649.4M119.5 651V649.5M121.5 651V649.3M122.0 651V649.1M122.5 651V650.0M123.5 651V649.2M124.0 651V649.7M124.5 651V649.3M125.0 651V648.7M126.0 651V648.8M126.5 651V648.6M127.5 651V647.7M128.5 651V649.2M129.0 651V649.3M129.5 651V648.2M130.5 651V648.7M131.0 651V648.5M131.5 651V649.5M133.5 651V649.4M135.9 651V649.7M136.9 651V649.3M137.4 651V649.4M139.4 651V649.8M140.4 651V649.2M140.9 651V649.3M141.4 651V649.4M142.4 651V649.6M142.9 651V649.0M143.4 651V649.8M144.4 651V649.1M144.9 651V649.2M145.9 651V649.1M146.4 651V649.5M147.9 651V649.2M148.4 651V649.3M149.4 651V649.6M149.9 651V648.6M150.9 651V649.1M151.9 651V649.5M152.9 651V649.3M153.9 651V649.5M154.8 651V649.8M157.3 651V649.0M157.8 651V649.7M159.8 651V649.3M160.3 651V649.0M161.8 651V649.5M162.3 651V649.8M165.8 651V649.6M167.3 651V648.9M167.8 651V649.0M168.3 651V649.2M169.3 651V649.1M169.8 651V649.3M170.3 651V649.5M170.8 651V649.5M171.3 651V648.3M171.8 651V647.4M172.3 651V647.8M172.8 651V645.7M173.3 651V647.0M174.2 651V648.8M174.7 651V647.8M175.7 651V646.9M176.2 651V648.7M177.7 651V648.4M178.7 651V647.8M179.7 651V648.8M180.2 651V648.4M181.7 651V649.0M183.2 651V649.3M183.7 651V649.9M184.7 651V649.9M185.7 651V649.5M186.2 651V649.6M186.7 651V649.9M187.7 651V649.0M188.2 651V649.8M189.2 651V649.9M190.2 651V649.1M190.7 651V649.9M191.7 651V649.8M192.2 651V648.9M193.1 651V650.0M193.6 651V649.2M194.1 651V649.7M195.1 651V649.4M195.6 651V649.5M196.6 651V648.8M197.6 651V648.3M198.6 651V649.7M199.6 651V647.6M200.1 651V649.0M200.6 651V649.3M201.1 651V649.2M201.6 651V649.0M202.6 651V649.4M203.1 651V649.3M203.6 651V648.3M204.6 651V648.9M205.1 651V648.7M205.6 651V647.5M206.6 651V649.0M207.1 651V648.4M208.1 651V648.2M208.6 651V648.2M209.6 651V648.9M210.1 651V647.6M210.6 651V649.4M211.1 651V648.3M211.5 651V649.0M212.0 651V648.7M213.0 651V648.4M213.5 651V647.7M214.5 651V647.4M216.0 651V649.3M216.5 651V649.0M218.0 651V649.2M219.5 651V649.5M220.0 651V649.8M220.5 651V649.9M221.0 651V649.1M223.5 651V649.7M224.5 651V649.5M225.0 651V649.4M226.0 651V648.9M227.0 651V649.1M228.5 651V649.6M229.0 651V648.9M229.5 651V649.4M230.0 651V648.9M230.9 651V648.8M231.4 651V649.0M232.4 651V648.9M233.4 651V648.9M234.9 651V648.1M235.4 651V648.7M236.9 651V648.9M237.4 651V649.3M238.4 651V648.4M239.4 651V649.0M240.4 651V649.6M240.9 651V649.5M241.9 651V649.5M242.9 651V650.0M243.9 651V650.0M244.9 651V649.2M245.4 651V650.1M245.9 651V649.4M246.4 651V648.7M246.9 651V649.4M247.4 651V649.0M247.9 651V649.4M248.4 651V649.1M248.9 651V648.9M250.3 651V648.3M251.3 651V649.5M253.3 651V648.9M254.3 651V650.0M255.3 651V649.7M257.3 651V647.9M264.3 651V647.7M264.8 651V648.4M265.3 651V648.7M265.8 651V648.6M266.8 651V649.5M267.3 651V648.8M268.3 651V649.5M269.2 651V649.9M269.7 651V648.9M270.7 651V649.4M271.2 651V649.6M271.7 651V649.5M272.7 651V649.2M273.7 651V649.4M275.2 651V649.0M275.7 651V649.1M277.2 651V648.6M277.7 651V648.7M278.2 651V649.2M278.7 651V648.8M279.2 651V646.6M279.7 651V648.1M280.2 651V647.8M280.7 651V648.4M281.7 651V647.8M283.2 651V649.2M283.7 651V649.1M284.2 651V648.4M286.2 651V649.0M286.7 651V649.3M288.1 651V649.7M288.6 651V649.6M289.6 651V649.3M290.1 651V649.7M292.1 651V649.3M293.1 651V649.8M294.1 651V650.1M294.6 651V649.4M295.1 651V649.8M296.1 651V649.2M297.1 651V649.8M297.6 651V649.4M298.6 651V649.8M300.1 651V648.7M300.6 651V649.3M301.6 651V649.1M302.1 651V649.9M302.6 651V649.4M303.1 651V649.3M304.1 651V649.1M305.1 651V648.9M305.6 651V649.5M306.6 651V649.5M307.1 651V648.7M308.0 651V649.5M309.0 651V648.9M309.5 651V649.3M310.0 651V648.3M311.0 651V649.0M312.0 651V648.7M313.0 651V648.9M313.5 651V649.1M314.5 651V649.7M315.5 651V649.3M317.5 651V649.5M318.0 651V649.4M319.0 651V649.8M320.0 651V649.4M321.0 651V650.0M321.5 651V649.9M323.0 651V649.4M323.5 651V649.9M324.5 651V649.6M325.5 651V649.7M326.9 651V649.8M327.9 651V648.7M328.4 651V649.4M328.9 651V649.2M329.4 651V649.4M330.9 651V649.2M331.9 651V650.0M332.4 651V648.9M333.4 651V649.6M334.4 651V649.2M335.4 651V649.3M336.4 651V649.2M336.9 651V649.5M337.9 651V649.3M338.4 651V649.5M339.4 651V649.6M339.9 651V648.3M340.9 651V649.6M341.4 651V649.4M342.4 651V648.6M343.4 651V648.7M343.9 651V649.6M344.9 651V649.5M345.8 651V648.6M346.8 651V649.5M348.3 651V649.5M349.3 651V649.4M352.8 651V650.0M353.3 651V650.0M354.3 651V649.4M355.8 651V649.3M356.8 651V649.5M357.8 651V648.8M358.8 651V649.5M359.8 651V649.7M360.3 651V649.6M360.8 651V649.7M362.3 651V649.4M364.7 651V649.9M365.2 651V650.0M365.7 651V649.7M366.7 651V648.8M367.2 651V649.9M367.7 651V649.0M368.2 651V648.0M368.7 651V649.1M369.7 651V648.1M370.2 651V647.5M370.7 651V647.3M372.7 651V648.6M374.7 651V648.6M375.7 651V649.6M376.7 651V649.4M377.7 651V650.0M379.7 651V648.7M383.2 651V648.0M386.1 651V648.2M386.6 651V648.1M388.1 651V647.4M389.1 651V649.3M390.1 651V649.8M390.6 651V648.5M391.1 651V649.4M392.1 651V648.9M392.6 651V649.0M393.6 651V648.4M394.6 651V649.2M395.6 651V649.3M396.1 651V649.3M396.6 651V649.5M397.6 651V649.1M398.1 651V649.4M398.6 651V648.8M399.6 651V648.7M400.1 651V648.2M402.1 651V648.0M402.6 651V648.3M403.5 651V648.5M404.0 651V648.5M404.5 651V648.4M405.0 651V648.9M406.0 651V648.2M406.5 651V649.1M407.0 651V649.3M408.0 651V649.0M410.0 651V649.5M411.5 651V649.6M412.0 651V649.6M415.0 651V649.4M416.0 651V649.6M418.0 651V649.0M418.5 651V649.2M419.5 651V649.2M420.0 651V649.4M421.5 651V649.2M423.9 651V649.4M424.4 651V649.3M424.9 651V649.6M425.4 651V649.5M426.4 651V649.9M426.9 651V649.8M427.4 651V649.4M428.4 651V649.8M428.9 651V649.1M435.4 651V647.3M436.9 651V647.8M437.4 651V647.6M438.4 651V648.4M439.4 651V648.7M440.4 651V649.2M440.8 651V649.9M441.3 651V649.4M441.8 651V649.1M442.3 651V648.6M444.3 651V649.2M444.8 651V648.9M446.3 651V647.6M447.8 651V648.9M448.3 651V648.5M449.3 651V648.7M451.3 651V647.3M452.8 651V648.5M453.3 651V649.7M454.3 651V649.1M455.3 651V649.4M455.8 651V649.0M456.8 651V649.4M458.3 651V649.0M458.8 651V649.1M459.8 651V649.6M460.7 651V648.4M461.2 651V649.5M461.7 651V649.5M462.7 651V649.3M463.2 651V649.8M463.7 651V650.0M464.7 651V649.7M466.7 651V649.5M467.2 651V649.5M468.7 651V649.3M470.7 651V648.7M471.7 651V649.7M472.7 651V649.6M473.2 651V649.9M474.7 651V649.8M475.2 651V650.1M476.2 651V649.3M476.7 651V649.8M477.7 651V649.4M480.1 651V649.6M480.6 651V649.8M481.1 651V649.5M481.6 651V649.4M483.6 651V649.8M484.6 651V649.7M485.1 651V650.1M485.6 651V649.2M487.1 651V649.8M488.6 651V649.5M489.1 651V649.5M489.6 651V649.7M490.6 651V649.2M492.1 651V649.4M492.6 651V649.5M494.1 651V649.5M495.1 651V649.6M495.6 651V649.2M496.1 651V649.8M498.1 651V649.4M498.5 651V650.0M499.0 651V649.9M499.5 651V649.7M500.0 651V649.8M500.5 651V649.8M501.0 651V649.3M501.5 651V648.9M503.0 651V649.0M503.5 651V649.4M504.5 651V649.7M505.0 651V649.6M506.0 651V649.3M507.0 651V649.6M510.0 651V649.8M511.0 651V649.2M512.5 651V649.1M513.0 651V649.9M514.0 651V649.5M515.0 651V649.6M515.5 651V649.2M517.0 651V650.1M517.9 651V649.0M518.4 651V649.6M518.9 651V649.9M520.4 651V649.4M521.4 651V649.4M521.9 651V648.7M522.9 651V649.8M524.4 651V649.1M525.9 651V649.0M526.4 651V649.4M526.9 651V649.7M527.9 651V648.8M528.9 651V649.6M529.4 651V649.5M530.4 651V648.8M531.9 651V649.6M532.4 651V649.6M533.9 651V649.0M535.9 651V648.9M536.8 651V649.7M537.3 651V649.4M537.8 651V649.8M540.3 651V649.5M541.8 651V649.8M543.3 651V649.3M543.8 651V649.6M544.8 651V649.7M545.8 651V649.7M546.8 651V649.3M547.8 651V649.9M549.3 651V649.7M550.8 651V649.4M551.3 651V650.0M552.3 651V649.8M553.3 651V649.8M554.8 651V649.0M555.7 651V649.8M556.2 651V649.9M557.2 651V649.8M558.7 651V649.5M560.7 651V648.7M561.7 651V649.6M562.7 651V649.0M563.2 651V649.5M564.7 651V649.6M565.2 651V649.1M566.2 651V649.2M567.7 651V649.5M569.2 651V649.8M570.7 651V649.7M572.7 651V649.9M575.1 651V648.9M577.1 651V650.0M577.6 651V648.2M578.6 651V648.6M579.6 651V649.6M580.1 651V649.4M580.6 651V649.7M581.6 651V649.2M582.6 651V649.9M583.1 651V649.8M584.1 651V649.6M584.6 651V649.2M586.1 651V649.3M587.6 651V648.8M588.6 651V649.9M590.1 651V649.4M593.1 651V649.1M594.0 651V649.4M596.0 651V649.7M597.5 651V649.7M598.5 651V649.7M599.5 651V649.4M600.0 651V649.5M600.5 651V649.9M602.5 651V650.0M604.5 651V649.0M606.5 651V649.7M608.0 651V649.8M608.5 651V649.7M610.0 651V649.8M610.5 651V649.7M611.5 651V649.8M612.5 651V648.9M614.4 651V648.8M615.4 651V648.2M616.4 651V648.6M616.9 651V649.3M617.4 651V649.1M618.4 651V649.5M618.9 651V648.4M619.9 651V649.4M620.4 651V649.3M621.4 651V649.3M622.4 651V649.8M622.9 651V649.4M623.9 651V649.3M624.9 651V649.3M625.4 651V649.2M626.4 651V648.6M626.9 651V648.3M627.9 651V649.5M628.9 651V649.3M630.4 651V649.2M631.9 651V648.9M633.8 651V649.8M634.3 651V649.6M635.3 651V649.9M637.8 651V649.4M638.3 651V649.3M639.3 651V649.3M641.3 651V649.4M642.3 651V649.3M643.3 651V649.5M644.8 651V649.5M645.3 651V649.6M646.3 651V649.9M647.3 651V649.6M647.8 651V649.6M648.3 651V649.6M648.8 651V649.0M649.8 651V649.0M650.3 651V649.3M650.8 651V649.6M651.7 651V649.3M652.2 651V648.4M654.2 651V648.5M655.2 651V648.9M655.7 651V649.3M656.2 651V649.3M657.7 651V649.2M658.7 651V649.4M660.2 651V648.6M661.7 651V648.3M662.2 651V649.6M663.2 651V648.1M664.2 651V649.7M665.2 651V648.5M666.2 651V649.4M667.2 651V649.3M667.7 651V649.3M668.2 651V649.3M668.7 651V648.8M671.1 651V649.1M672.1 651V649.5M672.6 651V650.1M673.6 651V649.7M675.1 651V649.1M675.6 651V649.6M676.6 651V649.2M678.1 651V649.9M678.6 651V649.9M681.1 651V649.5M683.6 651V649.7M684.6 651V649.3M685.6 651V649.0M686.6 651V649.4M687.6 651V650.1M688.1 651V649.4M689.1 651V648.9M690.0 651V649.0M690.5 651V649.5M692.0 651V650.0M692.5 651V649.7M693.0 651V649.2M694.5 651V649.2M695.0 651V649.8M695.5 651V648.8M696.0 651V649.4M697.0 651V649.0M697.5 651V649.6M698.0 651V649.5M698.5 651V649.3M699.0 651V649.3M699.5 651V648.6M700.0 651V648.8M700.5 651V648.9M701.5 651V648.4M702.0 651V648.6M704.5 651V648.8M706.0 651V649.6M708.0 651V649.3M709.4 651V649.0M710.4 651V649.5M710.9 651V649.6M711.4 651V649.9M712.4 651V649.3M713.9 651V649.9M715.4 651V649.5M716.4 651V650.0M716.9 651V649.5M718.9 651V649.5M719.9 651V649.5M720.4 651V649.9M720.9 651V649.6M721.4 651V649.2M722.4 651V649.8M723.4 651V648.8M724.4 651V648.9M726.4 651V649.6M726.9 651V649.7M727.4 651V648.6M728.3 651V648.8M729.8 651V649.4M730.8 651V648.8M731.8 651V648.8M732.8 651V649.1M733.8 651V649.6M734.8 651V649.7M736.3 651V649.5M736.8 651V649.4M738.3 651V648.4M739.3 651V648.3M740.8 651V649.7M741.8 651V649.8M742.3 651V647.7M742.8 651V649.5M744.3 651V649.8M744.8 651V649.3M745.3 651V648.8M745.8 651V649.4M746.3 651V648.4M747.7 651V649.6M748.2 651V649.3M749.7 651V648.9M750.2 651V649.5M751.2 651V649.9M752.2 651V649.0M752.7 651V649.6M753.2 651V649.6M753.7 651V649.1M754.7 651V649.2M756.2 651V649.3M756.7 651V649.5M757.2 651V649.0M757.7 651V649.4M758.7 651V648.8M759.2 651V649.8M759.7 651V649.4M761.7 651V649.8M762.2 651V649.6M763.7 651V649.5M765.7 651V649.5M766.1 651V649.3M767.6 651V649.3M768.6 651V649.5M769.6 651V649.5M770.1 651V649.9M771.1 651V649.4M771.6 651V649.9M772.6 651V649.8M773.1 651V649.3M773.6 651V649.3M774.6 651V649.9M775.6 651V648.5M776.1 651V649.5M776.6 651V649.0M777.1 651V649.5M778.6 651V649.2M779.1 651V649.7M779.6 651V648.9M780.6 651V648.8M781.6 651V649.1M783.1 651V648.9M784.6 651V649.0M785.5 651V649.8M786.0 651V649.6M787.0 651V649.2M788.5 651V648.7M790.0 651V649.1M790.5 651V649.9M791.0 651V649.9M793.0 651V649.6M794.0 651V649.2M795.0 651V649.7M795.5 651V649.9M796.5 651V650.0M798.0 651V649.5M798.5 651V649.1M799.0 651V649.8M799.5 651V650.1M801.0 651V649.2M801.5 651V649.7M802.0 651V649.5M803.5 651V648.5M804.4 651V649.1M804.9 651V648.5M805.9 651V649.3M806.9 651V648.7M807.9 651V648.9M808.4 651V649.0M809.4 651V649.0M809.9 651V649.5M810.4 651V650.0M810.9 651V647.7M811.9 651V649.4M812.4 651V649.7M812.9 651V649.8M813.4 651V649.0M814.9 651V649.5M815.9 651V648.5M816.9 651V649.3M818.4 651V648.0M818.9 651V649.3M820.9 651V649.2M821.9 651V649.6M822.9 651V648.8M823.3 651V649.8M824.3 651V649.5M827.8 651V649.5M829.3 651V649.3M829.8 651V649.1M830.8 651V649.3M831.8 651V649.6M832.8 651V649.0M833.3 651V649.2M835.3 651V648.8M835.8 651V649.2M836.8 651V649.7M837.8 651V649.6M838.3 651V649.4M839.3 651V650.1M839.8 651V649.7M841.3 651V648.9M841.8 651V649.6M842.7 651V648.3M843.7 651V649.5M844.2 651V649.5M845.7 651V649.1M846.7 651V649.5M847.2 651V649.0M848.2 651V649.4M848.7 651V649.8M849.2 651V649.8M849.7 651V649.8M850.7 651V649.0M851.7 651V648.1M852.2 651V647.9M852.7 651V648.8M853.2 651V649.6M853.7 651V648.0M854.2 651V648.3M854.7 651V648.5M855.2 651V648.6M855.7 651V647.7M856.2 651V647.6M856.7 651V647.3M864.6 651V648.5M865.6 651V648.9M866.6 651V649.2M868.1 651V649.1M869.1 651V649.3M871.1 651V649.0M872.1 651V649.1M873.1 651V649.4M873.6 651V649.2M874.6 651V649.8M875.6 651V649.0M876.6 651V649.8M877.1 651V648.4M879.6 651V650.0M880.1 651V649.7M881.0 651V649.8M882.0 651V650.1M883.0 651V649.3M884.0 651V649.6M885.0 651V648.8M885.5 651V649.8M886.5 651V650.0M887.0 651V650.2M888.0 651V649.7M889.0 651V649.7M890.5 651V649.3M891.0 651V649.9M891.5 651V649.1M892.5 651V649.9M893.5 651V648.6M894.5 651V649.4M895.0 651V649.6M895.5 651V649.5M897.0 651V648.8M897.5 651V648.8M898.0 651V649.7M898.5 651V649.4M899.5 651V648.4M899.9 651V648.4M900.9 651V648.2M905.9 651V648.9M906.9 651V649.1M908.4 651V649.1M909.4 651V648.6M910.4 651V648.9M910.9 651V649.7M912.4 651V649.7M912.9 651V649.8M914.4 651V649.4M915.4 651V649.4M915.9 651V649.8M916.4 651V649.6M917.4 651V649.2M918.4 651V649.4M918.8 651V648.8M919.8 651V649.7M921.3 651V650.0M922.8 651V649.8M923.3 651V649.7M923.8 651V649.4M926.3 651V648.8M928.8 651V649.7M931.8 651V648.6M934.3 651V647.3M935.3 651V647.6M935.8 651V647.8M936.3 651V646.8M936.8 651V647.6M937.3 651V645.7M937.7 651V648.0M938.2 651V645.1M941.2 651V647.9M942.2 651V648.9M943.2 651V649.1M943.7 651V649.9M944.2 651V649.6M945.7 651V649.7M947.7 651V649.4M948.7 651V648.6M949.7 651V647.6M950.2 651V649.0M950.7 651V646.6M951.2 651V648.3M951.7 651V645.3M952.2 651V646.4M952.7 651V644.7M955.7 651V644.0M957.6 651V642.3M959.6 651V642.2M960.6 651V643.5M961.1 651V645.5M961.6 651V645.9M962.1 651V647.0M962.6 651V645.8M963.1 651V646.3M963.6 651V646.5M964.6 651V647.9M965.1 651V646.5M965.6 651V647.0M966.6 651V649.0M967.1 651V648.7M967.6 651V648.2M968.1 651V648.6M968.6 651V647.8M969.6 651V649.6M970.1 651V648.6M971.1 651V649.3M971.6 651V649.1M972.1 651V648.7M973.1 651V648.9M974.1 651V648.6M975.1 651V648.9M975.6 651V649.4M976.0 651V649.6M977.0 651V649.0M977.5 651V649.3M978.5 651V649.6M979.0 651V648.9M980.0 651V649.2M981.0 651V649.2M981.5 651V649.5M982.5 651V649.2M984.0 651V649.8M984.5 651V649.6M985.5 651V650.0M986.0 651V647.8M987.5 651V649.9M988.5 651V648.9M989.5 651V649.4M991.0 651V649.3M992.0 651V649.5M993.5 651V650.2M994.0 651V649.3M995.4 651V649.0M995.9 651V650.0M996.9 651V649.9M998.9 651V649.8M999.9 651V649.7M1000.4 651V650.0M1001.4 651V649.7M1002.9 651V649.5M1003.9 651V649.4M1004.4 651V650.0M1004.9 651V649.7M1005.9 651V649.4M1006.9 651V650.1M1007.4 651V648.8M1007.9 651V649.5M1008.4 651V649.2M1010.4 651V648.3M1012.4 651V649.0M1013.4 651V649.5M1014.3 651V649.8M1014.8 651V649.7M1017.8 651V649.9M1018.8 651V649.8M1019.3 651V648.4M1020.3 651V649.4M1021.8 651V649.8M1022.8 651V649.7M1023.3 651V649.7M1023.8 651V649.8M1024.3 651V649.9M1025.8 651V649.9M1026.8 651V650.0M1027.8 651V649.9M1028.8 651V649.4M1029.3 651V649.9M1030.8 651V649.8M1031.3 651V650.0M1032.3 651V649.9M1033.7 651V649.1M1034.7 651V649.5M1035.7 651V649.4M1036.7 651V649.6M1037.7 651V648.7M1039.2 651V649.9M1039.7 651V649.8M1040.7 651V649.5M1042.2 651V649.2M1043.2 651V649.5M1044.2 651V648.9M1045.7 651V649.6M1046.7 651V648.8M1047.7 651V649.0M1048.7 651V650.0M1049.2 651V649.7M1050.2 651V649.1M1051.2 651V648.6M1052.6 651V649.8M1053.1 651V649.9M1053.6 651V649.9M1054.1 651V648.4M1055.1 651V649.7M1057.1 651V649.2M1058.1 651V649.7M1058.6 651V650.1M1059.1 651V650.1M1059.6 651V649.7M1062.6 651V649.0M1063.6 651V649.9M1064.6 651V649.7M1067.1 651V648.7M1067.6 651V649.3M1068.6 651V649.7M1070.1 651V649.8M1071.5 651V649.8M1072.5 651V648.8M1073.5 651V649.4M1075.0 651V649.7" stroke="#2fd3d3" stroke-width="1" fill="none"/>
<path d="M39.9 645.6l1 .3 1-.1 1 .2 1 .2 1 .1 1-.1 1-.2 1 .1 1 .1 1 .4 1 .4 1 .2 1 .3 1 .3 1 .2 1 .3 1 .3 1 .2 .9 .1 1 0 1-.1 1 0 1-.1 1 .1 1-.1 1 0 1 0 1 .1 1 0 1 0 1 .1 1 .2 1 .1 1 0 1 .2 1 0 1 0 1 0 .9 0 1 .1 1 0 1-.1 1 0 1-.1 1 0 1 0 1 0 1 .1 1 .1 1-.1 1 0 1 0 1 .1 1 .1 1 0 1 0 1-.2 .9 0 1-.3 1 0 1-.1 1-.1 1-.2 1-.1 1-.2 1-.1 1 .1 1 0 1 .1 1 0 1 0 1 .1 1 .1 1 .1 1 .2 1 .1 .9 .1 1 .1 1 .1 1 0 1 0 1 .1 1 0 1 0 1 0 1-.1 1-.1 1-.1 1-.1 1 0 1-.1 1 0 1 0 1-.1 1 .1 .9 0 1 .1 1 .1 1 .1 1 0 1 .1 1 0 1 0 1 .1 1-.1 1 0 1 0 1 0 1 0 1 0 1-.1 1 0 1 0 1 0 .9 0 1 0 1 0 1 0 1 0 1 0 1 .1 1 0 1 0 1 0 1 0 1-.1 1 0 1-.1 1 0 1-.1 1 0 1 0 1-.2 1-.3 .9-.1 1-.1 1-.1 1 0 1 0 1-.1 1-.1 1 0 1 .2 1 .3 1 .2 1 .1 1 .2 1 0 1 .1 1 .1 1 .1 1 .1 1 0 .9 0 1 0 1 0 1 0 1 0 1-.1 1 0 1-.1 1-.1 1 0 1 0 1-.1 1-.1 1-.1 1 0 1-.1 1-.1 1 0 1 0 .9-.1 1 0 1-.1 1 0 1 0 1 .1 1 .1 1 .1 1 .1 1 .1 1 .1 1 .1 1 .1 1 .2 1 0 1 0 1 .1 1 0 1-.1 .9 0 1-.1 1-.1 1-.1 1 0 1-.1 1 0 1-.1 1 0 1 0 1 0 1 .1 1 .1 1 .1 1 0 1 .1 1 0 1 0 1 0 .9 0 1-.1 1 0 1 0 1-.1 1 .1 1-.1 1-.1 1-.1 1 0 1 0 1-.1 1-.2 1-.2 1-.2 1-.2 1 0 1 .1 1 .1 1 .1 .9 0 1 .2 1 .2 1 .2 1 .2 1 .1 1 .1 1 0 1 0 1 0 1-.3 1-.1 1-.2 1-.1 1 0 1-.1 1-.1 1 0 1 .1 .9 0 1 .2 1 .2 1 .2 1 .1 1 0 1 .2 1 .1 1 0 1 0 1 0 1 0 1 0 1-.1 1 0 1 0 1-.1 1 0 1 0 .9-.1 1 0 1 0 1-.1 1 .1 1-.1 1 0 1 0 1 0 1 0 1 .1 1 0 1 0 1 .1 1 .1 1 0 1 0 1 .1 1 0 .9 0 1 0 1-.1 1 0 1 0 1-.1 1 0 1 0 1 0 1 0 1 0 1 0 1 0 1 .1 1-.1 1 0 1 0 1-.1 1 .1 .9-.1 1 0 1 0 1 0 1 0 1 .1 1 0 1 .1 1 .1 1 0 1-.1 1 .1 1-.1 1 0 1-.1 1 0 1 0 1-.1 1 0 1 0 .9 .1 1 0 1 .1 1-.1 1 0 1-.2 1-.1 1-.1 1-.1 1 0 1-.1 1 0 1 0 1 .1 1-.1 1 0 1 0 1-.2 1-.2 .9-.2 1-.2 1-.2 1-.1 1-.1 1 0 1 .3 1 .1 1 .2 1 .2 1 .2 1 .2 1 .1 1 .1 1 .1 1 0 1-.1 1 0 1 0 .9-.1 1 0 1-.1 1-.1 1 0 1 0 1 0 1 .1 1 0 1 .1 1 .1 1 .2 1 0 1 .1 1 0 1 0 1-.1 1 0 1 0 .9-.1 1 0 1 0 1 0 1 .1 1 0 1 .1 1 .1 1 0 1 0 1-.1 1-.2 1-.3 1-.3 1-.1 1-.2 1-.2 1-.1 1-.1 .9 .1 1 .1 1 .2 1 .2 1 .2 1 .2 1 0 1 .1 1 .1 1 0 1 0 1-.1 1 0 1 .1 1 0 1 0 1 .1 1 .1 1 0 1 0 .9 0 1 .1 1 0 1 .1 1 0 1 .1 1 0 1 0 1 0 1 0 1 0 1 .1 1 0 1 0 1 0 1-.1 1 0 1-.1 1 .1 .9 0 1 .1 1-.1 1 0 1 0 1 0 1 0 1 0 1 .1 1 0 1 0 1 0 1 0 1 0 1 0 1 0 1 0 1 0 1-.1 .9 .1 1 0 1 0 1-.1 1 0 1 0 1 0 1 0 1 0 1 0 1 0 1-.1 1 0 1 0 1 0 1 0 1 0 1 0 1 0 .9 .1 1-.1 1 .1 1 0 1 0 1 0 1 0 1 0 1 0 1 0 1-.1 1 0 1 0 1 0 1 0 1 0 1 0 1 0 1 0 1 0 .9 0 1 .1 1 0 1 0 1 0 1 0 1 0 1 .1 1 0 1 0 1 0 1 0 1 0 1 .1 1 0 1 0 1 0 1 0 1-.1 .9 .1 1 0 1-.1 1 0 1 0 1-.1 1 0 1-.1 1 0 1 .1 1-.1 1 0 1 0 1 0 1 .1 1 .1 1 0 1 0 1 .1 .9 0 1 0 1 0 1 0 1-.2 1 0 1 0 1 0 1-.1 1 0 1 0 1 0 1 0 1 0 1 .2 1 0 1 0 1 0 1-.1 .9 0 1 0 1 0 1 0 1 0 1-.1 1 0 1 0 1 0 1 .1 1 0 1 0 1 .1 1-.1 1 .1 1 0 1 0 1 0 1-.1 .9-.1 1 0 1-.1 1-.2 1 0 1-.1 1-.1 1-.1 1 0 1 .1 1 0 1 .1 1 .1 1 .1 1-.1 1 .1 1 0 1 .1 1 0 1 0 .9 .1 1 0 1 0 1 .1 1 0 1 0 1 0 1 0 1 0 1 0 1-.1 1 .1 1-.1 1 0 1 .1 1 0 1 0 1 0 1-.1 .9 0 1 0 1 0 1-.1 1 0 1-.1 1 0 1 0 1 0 1 0 1 0 1 .1 1-.1 1 .1 1 0 1 0 1 0 1-.1 1 0 .9 0 1 .1 1 0 1 0 1 0 1 0 1 0 1 0 1 .1 1 0 1 0 1 0 1 0 1 .1 1-.1 1 0 1 0 1 0 1 0 .9 0 1 0 1-.1 1 .1 1-.1 1 0 1 .1 1 0 1-.1 1 0 1 0 1 0 1-.1 1-.1 1 0 1 0 1 0 1 0 1 .1 .9 0 1 0 1 .1 1 .1 1 0 1 0 1 .1 1 0 1 0 1-.1 1 0 1 0 1 .1 1-.1 1 .1 1-.1 1 0 1 0 1 0 1 0 .9 0 1 0 1 0 1 0 1-.1 1 .1 1 0 1 0 1 0 1 0 1 0 1 0 1-.1 1 .1 1-.1 1 .1 1 0 1-.1 1-.1 .9 0 1 .1 1 0 1 0 1 0 1 .1 1 0 1-.1 1 .1 1 0 1 0 1 0 1 0 1 0 1 0 1 .1 1-.1 1 .1 1-.1 .9 0 1 0 1 0 1 0 1 .1 1-.1 1 0 1 .1 1-.1 1 .1 1-.1 1 0 1 0 1 0 1-.1 1 0 1 0 1-.1 1 0 .9 0 1 .1 1 0 1-.1 1 0 1 0 1 .1 1 0 1 0 1 0 1 0 1 0 1 0 1 .1 1 0 1 .1 1 0 1 0 1 0 .9 0 1 0 1-.1 1-.1 1-.1 1 0 1-.1 1-.1 1 0 1 0 1 0 1 .1 1 0 1 .1 1 0 1 0 1 0 1 .1 1 .1 1-.1 .9 0 1 0 1 0 1 0 1 0 1 0 1-.1 1 0 1 0 1 0 1-.1 1 0 1-.1 1 .1 1 0 1 .1 1 0 1 .1 1 0 .9-.1 1 .1 1 .1 1 0 1 0 1 0 1 0 1 0 1 0 1-.1 1 0 1-.1 1-.1 1-.1 1-.2 1-.1 1-.1 1 0 1 0 .9 .1 1 .2 1-.1 1 0 1 0 1 .2 1 0 1 0 1 0 1-.1 1-.1 1 0 1 .1 1 .1 1 .1 1 .1 1 0 1 .1 1 .1 .9 0 1 .1 1 .1 1 0 1-.1 1 0 1 0 1 .1 1 .1 1 0 1 0 1-.1 1 0 1 0 1 0 1 .1 1-.1 1-.1 1 0 1-.1 .9-.2 1-.1 1 0 1 0 1 0 1-.1 1-.1 1 0 1 0 1 0 1 .1 1 .1 1 0 1 .1 1 0 1 .1 1 0 1 .1 1 0 .9 0 1 .1 1 0 1 .1 1-.1 1 .1 1 0 1 0 1 0 1 0 1 .1 1-.1 1-.1 1-.1 1-.2 1-.3 1-.2 1-.2 1-.3 .9-.3 1-.2 1-.1 1-.1 1 0 1 .1 1 .3 1 .2 1 .2 1 .3 1 .3 1 0 1 0 1 0 1-.3 1-.3 1-.5 1-.7 1-.7 .9-.5 1-.6 1-.6 1-.7 1-.3 1 .1 1 0 1 .2 1 .5 1 .5 1 .4 1 .5 1 .7 1 .7 1 .5 1 .2 1 .3 1 .2 1 .2 .9 .2 1 0 1 .1 1 .1 1 0 1 0 1 .1 1 0 1 .1 1 .1 1-.1 1 .1 1 0 1 0 1 .1 1 0 1 0 1 .1 1-.1 1 0 .9 .1 1 0 1 0 1 0 1 0 1 0 1 0 1 0 1 0 1 0 1 0 1 .1 1-.1 1 0 1 0 1-.1 1 0 1 0 1 0 .9 0 1 0 1 0 1 0 1 .1 1-.1 1 .1 1 0 1 0 1 0 1 .1 1 0 1 0 1-.1 1 0 1 .1 1 0 1 0 1 0 .9 0 1-.1 1 0 1 0 1-.1 1 0 1 0 1 0 1 0 1-.1 1 .1 1 0 1 0 1-.1 1 .1 1 0 1-.1 1 0 1 0 .9 0 1 .1 1-.1 1 0 1 0 1 .1 1 0 1 0 1 .1 1 0 1 0 1-.1 1 .1 1 .1 1-.1 1 0 1-.1 1 0 1 0 .9 0 1 0 1 0 1 0 1-.1 1 .2 1 .1 1-.1 1-.2 1-1 .5-2" fill="none" stroke="#c93fd0" stroke-width="1"/>
<path d="M35.0 644.5l1 .9 1 .3 1 .4 1 .9 .9-.3 1-.4 1-.3 1-.1 1-.5 1 .5 1 .1 1 0 1 .3 1 .7 1 .3 1 .6 1 .5 1 .3 1-.1 1 .1 1 0 1 .2 1 0 .9 .2 1-.1 1-.1 1-.3 1 0 1-.2 1 0 1 .1 1 .3 1 .1 1 .2 1 .1 1 .1 1 0 1 .1 1 0 1 .1 1 0 1 0 1-.1 .9 0 1 0 1 0 1-.1 1 0 1 0 1-.1 1 0 1 .1 1 .1 1 .2 1 0 1-.1 1 0 1 0 1 0 1 .1 1 0 1-.2 .9-.2 1-.4 1-.1 1-.3 1-.1 1-.1 1 .2 1-.2 1 0 1 .2 1 .1 1 0 1 .3 1 .1 1-.1 1 .2 1 .1 1 .1 1 .2 .9 .2 1 0 1 0 1-.1 1-.1 1 0 1 0 1 0 1 0 1 0 1-.2 1-.3 1 0 1-.2 1 0 1 0 1 .3 1 0 1 .2 .9 .2 1 .1 1 0 1 0 1 0 1-.2 1 0 1 .1 1 0 1 0 1 .1 1 0 1-.1 1 0 1 0 1-.2 1-.1 1 0 1 .1 .9 0 1 .2 1 .1 1 0 1 0 1 0 1-.1 1-.2 1 .1 1 .1 1-.1 1-.1 1 .1 1-.2 1-.2 1 0 1 .2 1-.1 1-.2 1-.5 .9-.2 1-.3 1-.2 1 .2 1 .5 1 0 1 .1 1 .3 1 .1 1 .2 1 .2 1 .2 1 .1 1-.1 1 0 1 .1 1 0 1 0 1 0 .9 .1 1-.1 1 0 1 0 1-.1 1-.1 1 0 1-.2 1-.1 1 0 1 .1 1-.2 1 .1 1-.2 1 0 1-.3 1 0 1-.1 1 .1 .9 0 1 .1 1-.1 1 0 1 .1 1 .1 1 0 1 .4 1 .2 1 .1 1 .1 1 .1 1 0 1 0 1 0 1-.1 1 .1 1-.1 1-.1 .9-.1 1-.1 1-.2 1 0 1-.1 1 0 1 0 1 .1 1 0 1 0 1 .2 1 0 1 .1 1 .3 1 0 1 .1 1-.1 1-.2 1-.1 .9-.1 1-.2 1 .1 1 .1 1 0 1 .1 1 .2 1-.4 1-.3 1 0 1-.2 1-.3 1-.1 1-.1 1-.3 1-.2 1 .2 1 .3 1 .4 1 .4 .9 .3 1 .2 1 0 1 .1 1-.1 1 .1 1-.1 1 .1 1-.2 1 0 1-.5 1-.2 1-.4 1-.1 1 0 1 .3 1 .1 1 .3 1 .2 .9 .1 1 .1 1 .2 1 .1 1 0 1 .1 1 .1 1 0 1-.1 1 0 1 0 1 0 1-.2 1 0 1 0 1 0 1-.1 1 0 1 .1 .9-.2 1 .1 1-.1 1-.1 1 0 1 .1 1-.2 1 .1 1 .1 1 0 1 .2 1 .1 1 0 1 .1 1 .1 1-.1 1 0 1 0 1-.1 .9 0 1 0 1-.1 1 0 1 0 1-.1 1 0 1 0 1 .1 1 0 1 .1 1 0 1 0 1 0 1-.1 1 0 1-.1 1-.1 1 0 .9 .1 1-.1 1 .1 1 .1 1 0 1 0 1 .2 1 .1 1 .1 1-.1 1-.1 1-.1 1-.2 1-.1 1-.1 1 .1 1 0 1 .1 1 .1 1 .1 .9 .1 1 0 1 0 1-.2 1-.1 1-.4 1-.4 1-.1 1 .1 1 0 1 .1 1 .5 1 0 1 .1 1-.1 1-.2 1-.4 1-.5 1-.4 .9-.4 1-.1 1 0 1 .3 1 .1 1 .6 1 .5 1 .2 1 .1 1 .3 1-.2 1-.1 1 .1 1 .1 1 0 1 .1 1-.1 1-.1 1-.2 .9-.1 1-.1 1 0 1-.1 1 .1 1 .1 1 .1 1 .2 1 .2 1 .1 1 .1 1 .1 1 0 1-.1 1-.1 1-.1 1-.2 1 0 1 .1 .9-.1 1 0 1 .2 1 0 1 .1 1 .1 1 .2 1 0 1 0 1-.2 1-.3 1-.5 1-.6 1-.5 1-.2 1-.1 1 .2 1 .3 1 .4 .9 .4 1 .3 1 .2 1 .1 1 .1 1-.1 1-.2 1 0 1 0 1 0 1 .1 1-.1 1 0 1 .2 1 0 1 0 1 .2 1 .1 1-.1 1 0 .9 0 1 .1 1-.1 1 .1 1 .1 1 .2 1-.1 1 .1 1-.1 1 0 1-.3 1 .2 1-.1 1 .1 1 0 1 .2 1-.1 1-.1 1-.1 .9 0 1 .1 1-.1 1 .2 1-.1 1 0 1 0 1 .1 1 .1 1 0 1 0 1-.1 1 .1 1-.1 1 0 1-.1 1 0 1 0 1 0 .9 .1 1 0 1 .1 1-.1 1-.1 1-.1 1 0 1-.1 1 .1 1 0 1 .1 1 0 1-.1 1 0 1-.1 1 0 1 .1 1-.1 1 .2 .9 .1 1-.1 1 .1 1 0 1 0 1-.2 1 .1 1-.1 1 .1 1-.1 1 0 1-.1 1 0 1 0 1 .1 1 0 1 .1 1 0 1 .1 1-.1 .9 0 1 0 1 0 1-.1 1 .2 1 0 1 0 1 0 1 .1 1 0 1-.1 1 .1 1 0 1 0 1 0 1 .1 1-.1 1 0 1-.2 .9 .1 1 0 1-.1 1 .1 1 0 1-.2 1 0 1-.1 1 0 1 0 1 .1 1 .1 1 0 1 0 1 .1 1 .1 1 0 1 .1 1 0 .9 0 1-.1 1 .1 1-.3 1-.3 1 0 1 .1 1-.2 1 .3 1 .2 1 0 1-.1 1 .1 1-.1 1 0 1 .1 1 0 1 0 1 0 .9-.1 1-.1 1 0 1-.1 1 .1 1 0 1 0 1 0 1 .1 1 .1 1 .1 1-.1 1 .1 1-.1 1 0 1 0 1 0 1-.1 1 0 .9-.2 1-.1 1-.3 1-.2 1-.1 1 .1 1 0 1 0 1 .3 1 .1 1 .1 1 .1 1 .1 1 0 1-.2 1 0 1-.1 1 .1 1 .1 1 .2 .9 .1 1 0 1 0 1 .1 1-.1 1-.1 1 0 1-.1 1 0 1 0 1 0 1 0 1 0 1 0 1 .1 1 .1 1 0 1-.1 1 0 .9-.2 1-.1 1 0 1-.1 1-.1 1 .1 1 .1 1 0 1 .2 1 0 1-.1 1 0 1-.1 1 0 1 0 1 0 1 0 1 0 1 0 .9 .1 1 0 1 .1 1 0 1 0 1 0 1-.1 1 0 1 .1 1 0 1 0 1 .2 1-.1 1 0 1 0 1-.2 1-.1 1 .2 1-.1 .9 0 1 .1 1 0 1 0 1 0 1 0 1 0 1 0 1-.1 1 0 1-.1 1-.1 1-.1 1-.2 1 .1 1 0 1 .1 1 .3 1 .2 .9 0 1 0 1 0 1 0 1-.1 1-.1 1 .2 1 0 1-.1 1 0 1 .1 1-.1 1 0 1 0 1 .1 1-.1 1 0 1 0 1 0 1-.1 .9 .1 1 .1 1-.1 1-.1 1 .1 1 0 1-.1 1 .1 1 .1 1 0 1 0 1-.1 1-.1 1 0 1-.2 1 .2 1 .1 1-.1 1-.1 .9 .1 1 0 1-.1 1 .1 1 .2 1-.1 1 0 1 0 1 0 1 0 1 0 1 0 1 0 1 0 1 0 1 .1 1 0 1 0 1 0 .9-.1 1 0 1 0 1-.1 1 .2 1-.1 1 .1 1 .1 1-.1 1 0 1 0 1-.2 1 0 1 0 1-.1 1 0 1 0 1 0 1-.1 .9 .1 1 .1 1 0 1-.1 1 0 1 0 1 0 1 0 1 .2 1-.1 1 0 1 0 1 .1 1 0 1 .1 1 .2 1 0 1-.1 1 0 .9-.1 1-.2 1-.2 1-.1 1-.1 1 0 1 .1 1 0 1-.1 1 .2 1 .1 1 .1 1 0 1 .1 1-.1 1-.1 1 0 1 .1 1 0 1 0 .9 .1 1-.1 1 0 1 0 1 0 1-.2 1 .1 1-.1 1 .1 1 0 1-.1 1-.1 1-.1 1 .1 1 .1 1 .1 1 .3 1 .2 1-.1 .9-.2 1 0 1-.1 1-.1 1 .1 1 0 1 .1 1 .1 1 0 1-.2 1-.1 1-.2 1-.2 1-.3 1-.3 1 0 1 0 1 .2 1 .4 .9 .4 1 .3 1-.2 1-.2 1-.2 1-.1 1-.3 1 .1 1 .2 1 .1 1 0 1 .1 1 .2 1 0 1 .1 1 .2 1-.1 1 .1 1 0 .9 .1 1 0 1 .1 1 0 1-.2 1 0 1 0 1 .1 1 0 1 .2 1 .1 1-.1 1-.1 1-.2 1-.1 1 0 1 0 1-.1 1 .1 1-.1 .9-.3 1-.2 1 .1 1-.1 1 .2 1-.1 1 .1 1 0 1 0 1-.2 1 .2 1 .1 1 .1 1 .1 1 .3 1-.1 1 0 1 0 1-.1 .9-.1 1 .2 1 0 1 .1 1 .1 1 .1 1 0 1-.2 1-.1 1 .1 1-.1 1-.1 1 0 1-.2 1-.4 1-.5 1-.4 1-.3 1-.4 .9-.2 1 .1 1 .1 1 .2 1 .4 1 .4 1 .4 1 .4 1 .3 1 .1 1 .1 1-.4 1-.3 1-.3 1-.7 1-.8 1-.5 1-1.2 1-1 .9-.3 1-.4 1-.8 1 0 1 .4 1 .4 1 .5 1 1.1 1 1 1 .6 1 .4 1 .5 1 .3 1 .3 1 .5 1 0 1 .1 1 .1 1 0 .9 0 1 .1 1 0 1 .2 1 0 1-.1 1 0 1 .1 1 .1 1 .1 1 0 1 0 1 .1 1-.1 1-.1 1 .2 1 0 1-.1 1 .1 1 0 .9 0 1 0 1 0 1 0 1-.1 1 .1 1 0 1 .1 1-.1 1 .1 1-.1 1 .1 1-.1 1-.1 1 0 1-.2 1 0 1 .1 1 0 .9 0 1 .2 1 0 1 .1 1 .1 1-.2 1 .1 1-.1 1-.1 1 0 1 .2 1 .1 1-.1 1 0 1 0 1 0 1-.1 1 0 1 .1 .9-.1 1-.1 1 0 1 0 1-.2 1 .1 1 .1 1 0 1 0 1 0 1 0 1-.1 1 0 1 0 1 0 1 0 1 0 1 0 1 0 .9 .1 1 0 1-.1 1 0 1 .1 1-.1 1 0 1 .3 1 0 1 0 1 0 1-.1 1 0 1 0 1-.1 1-.1 1 .1 1-.1 1 0 .9 .1 1 .1 1-.1 1 0 1 0 1 .1 1 .1 1 0 1-.4 1-2.1 .5-3.9" fill="none" stroke="#f58a1e" stroke-width="1"/>
<path d="M32.0 645.2l1 .4 1-1 1 0 1 1.5 1 1.1 1-.1 1 .1 .9-.9 1-.7 1-.1 1 .6 1-.6 1 .7 1-.1 1 .1 1 .3 1 1 1 .9 1 .5 1-.2 1-.1 1 0 1 .2 1 0 1 .2 1 .1 .9 0 1-.2 1-.2 1-.6 1 .4 1-.3 1 .4 1 .1 1 .3 1 .4 1 0 1-.2 1 0 1 .2 1 .2 1-.1 1 0 1 0 1 .1 1-.2 .9-.2 1 .2 1 .2 1-.2 1-.2 1-.1 1 0 1 .2 1 .3 1 0 1 .1 1-.1 1-.2 1 0 1 .1 1 .2 1-.1 1-.1 1-.4 .9-.3 1-.6 1 .3 1-.1 1-.1 1-.2 1 .1 1 0 1 .1 1 .4 1 0 1 0 1 0 1 .3 1-.3 1 .3 1 .4 1 .1 1 .2 .9 0 1-.1 1 0 1-.2 1-.1 1 .1 1 .1 1-.1 1 .1 1-.3 1-.3 1-.3 1 0 1 .1 1 .1 1-.1 1 .4 1 .2 1 .1 .9 .2 1 0 1-.1 1 0 1 0 1-.3 1 0 1 .3 1 .1 1-.1 1 0 1-.2 1 .1 1 0 1-.1 1-.3 1 0 1 .1 1 .3 .9 0 1 .2 1 0 1-.1 1-.1 1-.1 1-.1 1-.1 1 .2 1 .3 1-.2 1-.3 1-.1 1 0 1-.2 1 .2 1 .2 1-.1 1-.6 1-1.2 .9 .1 1 .4 1 .3 1 .1 1 .5 1-.1 1 0 1 .2 1 .3 1 .3 1 .3 1-.2 1 0 1-.3 1 .1 1 .1 1 .3 1-.1 1-.2 .9 0 1 0 1 .2 1-.1 1-.1 1-.3 1 .1 1-.2 1-.1 1 .2 1 .1 1-.2 1-.2 1-.2 1-.1 1 .1 1-.2 1-.1 1 .3 .9 0 1 0 1-.2 1-.1 1 .4 1 .4 1 0 1 .3 1 .2 1 .1 1-.1 1-.1 1 .1 1-.1 1 0 1-.1 1 .1 1 0 1-.2 .9-.3 1-.1 1 0 1 0 1-.1 1 .1 1 0 1 .4 1-.3 1 0 1 .2 1 .2 1 .3 1 .1 1-.1 1-.1 1-.3 1-.1 1-.1 .9 0 1-.3 1 .3 1 .4 1-.1 1 .1 1-.1 1-.6 1-.6 1 .1 1 .5 1-.3 1-.6 1-.4 1 0 1 0 1 .6 1 .7 1 .3 1 .3 .9 .1 1 0 1-.1 1 0 1 0 1 .1 1-.1 1 .1 1-.3 1-.1 1-.8 1-.4 1 .1 1 .1 1 .5 1 .2 1-.1 1 .2 1 .3 .9 .4 1-.1 1 0 1 .1 1 0 1 .1 1 .1 1 0 1-.4 1 0 1 .1 1 .1 1-.2 1-.3 1 .3 1 0 1 0 1-.1 1 0 .9-.1 1 .2 1 0 1-.3 1-.1 1 .2 1 0 1 .1 1 0 1 .1 1 .1 1 .1 1 0 1 0 1 .1 1-.1 1-.1 1 0 1 0 .9 0 1 .1 1-.3 1-.1 1 .1 1 0 1-.1 1 .2 1 0 1 .1 1-.1 1 .1 1 0 1 .1 1-.3 1 0 1 0 1-.3 1 .1 .9 .3 1-.1 1-.1 1 .3 1 .1 1 0 1 .1 1 .1 1 .2 1-.4 1-.2 1-.1 1-.1 1-.1 1-.1 1 .4 1-.2 1 .3 1-.1 1 .1 .9 .2 1 .1 1-.2 1-.6 1 .1 1-.6 1-.5 1 .1 1 .6 1 .3 1 0 1 .3 1 0 1 0 1-.3 1-.8 1-.4 1-.7 1 .2 .9-.4 1 .1 1 .2 1 .9 1 .1 1 .4 1 .4 1 .3 1-.2 1 .1 1-.4 1 0 1 .2 1 .3 1 .1 1-.3 1-.3 1 0 1-.1 .9 0 1-.3 1 .2 1-.1 1 .3 1 0 1 .3 1 .2 1 .2 1 0 1-.1 1 .1 1-.2 1-.2 1 0 1 .1 1-.4 1 .2 1 0 .9 .2 1-.2 1 .1 1 .3 1 .1 1 .2 1 0 1-.1 1 0 1-.5 1-.4 1-1 1-.7 1-.2 1 .3 1 .6 1 .3 1 .1 1 .4 .9 .5 1 .3 1 0 1-.3 1 .1 1-.1 1-.2 1 .1 1 .1 1 0 1 .3 1-.3 1-.1 1 .4 1 0 1 .1 1-.1 1 .1 1 0 1 0 .9-.2 1 .1 1-.1 1 .4 1 .1 1 .2 1-.2 1-.2 1 0 1 0 1-.2 1 .1 1 0 1 .3 1 .1 1-.1 1-.1 1-.5 1 .3 .9 .2 1 .1 1-.1 1-.1 1-.1 1 .2 1 .1 1 0 1-.1 1 .1 1 0 1-.1 1 .1 1-.2 1 0 1-.1 1 0 1 .1 1 .1 .9 .1 1-.1 1 .3 1-.4 1-.2 1-.2 1 .2 1 .2 1 0 1-.1 1 .1 1-.1 1 0 1-.1 1-.2 1 .2 1 .2 1-.1 1 .1 .9 .2 1-.1 1 0 1 0 1-.1 1-.1 1-.1 1 .2 1 0 1-.1 1 0 1-.2 1 0 1 .2 1 .1 1-.1 1 .2 1-.2 1 .2 1-.1 .9-.1 1 .1 1 .1 1-.1 1 .1 1 0 1 .1 1-.1 1 0 1 0 1 .1 1 0 1 .1 1 0 1 0 1 0 1 0 1-.2 1-.2 .9 .1 1 .1 1 .1 1 0 1-.1 1-.4 1-.1 1 .1 1 .3 1 .1 1-.2 1 0 1 .1 1 .1 1 .1 1 .1 1 0 1 0 1 .2 .9-.2 1-.2 1 0 1-.3 1-.4 1 .2 1 .3 1 .1 1 .1 1 .1 1-.2 1-.1 1 .1 1 0 1 .1 1 .1 1-.1 1 .1 1-.2 .9-.2 1 0 1 .1 1 0 1 .1 1-.2 1 .1 1-.1 1 .4 1 0 1 0 1-.2 1 .1 1-.1 1 0 1 0 1 .1 1-.1 1-.1 .9-.4 1-.2 1-.1 1-.4 1 0 1 .5 1 .3 1-.2 1 0 1 .4 1 .1 1 .2 1-.2 1-.1 1-.4 1 0 1 .2 1 .5 1 0 1-.1 .9 .1 1-.1 1 .3 1 0 1-.3 1-.2 1 0 1 .1 1 .1 1 .1 1-.3 1 .1 1 0 1 .1 1 .2 1 0 1-.1 1-.3 1 0 .9-.1 1-.1 1 .1 1-.1 1 0 1 .1 1 .1 1 .1 1 .1 1-.1 1-.1 1 0 1-.3 1 .3 1 0 1-.1 1 0 1 0 1 .1 .9 0 1 .1 1 .1 1-.2 1 .1 1 .1 1-.2 1 0 1 .3 1-.1 1 0 1 0 1-.1 1 .2 1-.1 1-.3 1-.2 1 .4 1 .3 .9-.2 1-.2 1-.1 1 .3 1 0 1-.1 1-.1 1-.1 1 0 1 .1 1 0 1-.3 1-.4 1 0 1 .3 1 .2 1 .3 1 .1 1 .2 .9 0 1-.4 1 0 1 .2 1 0 1-.1 1 0 1 .2 1-.1 1-.1 1 .1 1-.2 1 .3 1-.2 1 .2 1-.4 1 0 1 .2 1 .1 1-.1 .9-.1 1 0 1 .2 1 0 1-.2 1 0 1 .2 1 .1 1 .1 1-.1 1-.3 1-.2 1-.1 1 .2 1 0 1 0 1 .1 1 .1 1-.3 .9 0 1 .1 1 .2 1-.1 1 .1 1 .1 1 0 1-.2 1 .1 1 .1 1 0 1-.2 1 0 1 0 1 .2 1 .1 1 0 1-.1 1-.1 .9 0 1 0 1 0 1 0 1 .1 1 0 1 .1 1 0 1-.1 1-.1 1-.1 1-.1 1 .1 1 .1 1-.2 1 0 1 0 1 .1 1-.1 .9-.1 1 .4 1 0 1-.4 1-.1 1 0 1 .5 1 0 1-.1 1-.2 1 0 1 .2 1 .3 1-.1 1-.1 1 .1 1 .2 1-.2 1-.1 .9-.3 1-.3 1 0 1 0 1 .1 1-.2 1 .3 1-.1 1-.1 1 0 1 .6 1 0 1-.1 1-.1 1-.2 1-.1 1 .2 1 .4 1-.1 1-.3 .9 .2 1-.2 1 0 1 0 1 .1 1-.2 1 0 1 0 1 .2 1 0 1-.3 1-.3 1-.1 1 .4 1 .5 1 0 1 .1 1 .1 1-.1 .9-.5 1 0 1 .1 1 .3 1 0 1-.3 1 .1 1 .3 1 .1 1-.4 1-.6 1-.2 1 .1 1-.4 1-.3 1 0 1 .4 1 .7 1 .3 .9 .3 1 .2 1-.7 1-.6 1-.1 1 .4 1-.2 1 0 1 .2 1 .2 1 .1 1 0 1 .1 1 .2 1 .1 1 .1 1-.3 1 .1 1 .3 .9 .1 1 0 1 0 1-.1 1-.4 1-.1 1 .1 1 .7 1 0 1-.1 1-.1 1-.1 1-.2 1-.2 1 .1 1-.1 1 .2 1-.2 1 0 1-.2 .9-.3 1-.5 1 .4 1 .4 1 .3 1-.5 1-.2 1 .1 1 .3 1-.2 1 0 1 .3 1 .3 1 .2 1 0 1-.3 1 0 1 .1 1-.1 .9-.2 1 .3 1 .4 1 0 1-.1 1-.1 1 0 1-.2 1-.2 1 .2 1 .2 1-.3 1-.3 1-.3 1-.6 1-.6 1-.2 1-.1 1-.2 .9-.4 1 .2 1 .3 1 .7 1 .4 1 .3 1 .6 1 .4 1-.1 1-.2 1-.1 1-.5 1-.4 1-.5 1-.7 1-.8 1-.7 1-1.3 1-1.4 .9 .4 1 0 1-.3 1-.7 1 .9 1 1.6 1 1.3 1 .4 1 .4 1 .3 1 .6 1 .6 1-.1 1 .3 1 .4 1 0 1 0 1-.3 1 .2 .9 .2 1 .2 1 0 1-.1 1 0 1-.1 1 .2 1 .1 1 .2 1 .2 1-.4 1-.1 1 0 1 .3 1-.1 1 .1 1 0 1 0 1 .1 1-.1 .9-.1 1-.1 1 .2 1 .1 1-.2 1 .2 1 .1 1-.1 1-.1 1 .1 1-.1 1 .1 1-.2 1-.1 1 .1 1-.3 1 .2 1 0 1 .1 .9 .1 1 0 1 .1 1 .1 1 .1 1-.4 1 0 1 .2 1 0 1-.1 1 .2 1 .1 1-.1 1-.2 1 0 1 .2 1-.1 1 0 1 0 .9-.3 1 0 1 0 1 .1 1-.3 1 .1 1 .3 1 .2 1-.2 1-.3 1 .1 1 0 1 .1 1-.1 1-.1 1 .1 1 0 1 0 1-.2 .9 .3 1 .3 1-.4 1-.1 1 .2 1 0 1 .1 1 .2 1 .1 1-.3 1-.1 1 0 1 0 1 .4 1-.4 1-.3 1-.1 1 .4 1 .2 .9 0 1-.2 1-.1 1 0 1 .2 1 .2 1 .1 1-.1 1-1 1-4.3 .5-7.6" fill="none" stroke="#f0f0f0" stroke-width="1"/>
<path d="M30.0 714.5V693.0M30.5 714.5V697.7M31.0 714.5V702.6M31.5 714.5V705.7M32.0 714.5V708.5M32.5 714.5V709.7M33.0 714.5V710.3M33.5 714.5V712.8M34.0 714.5V713.7M53.4 714.5V713.8M53.9 714.5V713.6M54.4 714.5V713.7M54.9 714.5V712.8M55.4 714.5V712.8M55.9 714.5V712.9M56.4 714.5V713.0M56.9 714.5V713.4M57.4 714.5V713.7M57.9 714.5V714.5M58.4 714.5V714.3M58.8 714.5V714.4M59.3 714.5V714.1M66.3 714.5V713.6M66.8 714.5V712.9M67.3 714.5V712.9M67.8 714.5V712.7M68.3 714.5V712.4M68.8 714.5V712.4M69.3 714.5V712.9M69.8 714.5V712.4M70.3 714.5V712.0M70.8 714.5V711.8M71.3 714.5V712.1M71.8 714.5V711.9M72.3 714.5V711.7M72.8 714.5V711.3M73.3 714.5V710.5M73.8 714.5V709.8M74.3 714.5V709.6M74.8 714.5V709.6M75.3 714.5V709.5M75.8 714.5V709.7M76.3 714.5V709.9M76.8 714.5V710.3M77.3 714.5V710.4M77.8 714.5V709.7M78.2 714.5V709.9M78.7 714.5V710.5M79.2 714.5V711.0M79.7 714.5V711.5M80.2 714.5V711.5M80.7 714.5V711.5M81.2 714.5V712.2M81.7 714.5V712.2M82.2 714.5V712.7M82.7 714.5V712.4M83.2 714.5V712.9M83.7 714.5V712.7M84.2 714.5V713.5M84.7 714.5V714.1M85.2 714.5V714.3M85.7 714.5V714.2M86.2 714.5V714.4M89.2 714.5V714.0M89.7 714.5V714.0M90.2 714.5V714.1M90.7 714.5V713.6M91.2 714.5V713.4M91.7 714.5V713.3M92.2 714.5V713.1M92.7 714.5V713.4M93.2 714.5V714.0M107.1 714.5V714.5M108.1 714.5V714.5M108.6 714.5V713.9M109.1 714.5V713.5M109.6 714.5V713.5M110.1 714.5V713.1M110.6 714.5V712.3M111.1 714.5V712.6M111.6 714.5V712.3M112.1 714.5V711.8M112.6 714.5V711.9M113.1 714.5V711.7M113.6 714.5V711.9M114.1 714.5V712.0M114.6 714.5V712.1M115.1 714.5V711.8M115.6 714.5V711.6M116.0 714.5V711.2M116.5 714.5V711.3M117.0 714.5V711.2M117.5 714.5V710.7M118.0 714.5V710.6M118.5 714.5V711.0M119.0 714.5V710.7M119.5 714.5V710.9M120.0 714.5V710.8M120.5 714.5V710.8M121.0 714.5V710.6M121.5 714.5V710.8M122.0 714.5V711.6M122.5 714.5V712.3M123.0 714.5V712.5M123.5 714.5V713.2M124.0 714.5V713.5M124.5 714.5V714.2M134.0 714.5V714.0M134.5 714.5V713.7M135.0 714.5V713.0M135.4 714.5V712.2M135.9 714.5V711.8M136.4 714.5V711.4M136.9 714.5V711.3M137.4 714.5V711.3M137.9 714.5V711.2M138.4 714.5V711.2M138.9 714.5V711.1M139.4 714.5V711.1M139.9 714.5V710.9M140.4 714.5V711.3M140.9 714.5V711.6M141.4 714.5V712.3M141.9 714.5V712.7M142.4 714.5V713.1M142.9 714.5V714.0M152.4 714.5V714.1M152.9 714.5V714.0M153.4 714.5V713.7M153.9 714.5V713.8M154.3 714.5V713.5M154.8 714.5V713.2M155.3 714.5V713.0M155.8 714.5V712.7M156.3 714.5V712.6M156.8 714.5V712.3M157.3 714.5V712.5M157.8 714.5V712.8M158.3 714.5V712.8M158.8 714.5V712.7M159.3 714.5V712.5M159.8 714.5V712.5M160.3 714.5V713.2M160.8 714.5V713.2M161.3 714.5V712.9M161.8 714.5V713.1M162.3 714.5V713.4M162.8 714.5V713.4M163.3 714.5V713.5M163.8 714.5V713.1M164.3 714.5V712.8M164.8 714.5V712.1M165.3 714.5V711.8M165.8 714.5V711.8M166.3 714.5V711.4M166.8 714.5V711.0M167.3 714.5V711.3M167.8 714.5V711.7M168.3 714.5V712.7M168.8 714.5V712.8M169.3 714.5V713.4M169.8 714.5V714.4M181.2 714.5V714.1M181.7 714.5V713.7M182.2 714.5V713.4M182.7 714.5V712.7M183.2 714.5V712.9M183.7 714.5V713.0M184.2 714.5V712.8M184.7 714.5V712.7M185.2 714.5V712.1M185.7 714.5V711.9M186.2 714.5V712.1M186.7 714.5V712.1M187.2 714.5V711.4M187.7 714.5V711.8M188.2 714.5V712.1M188.7 714.5V712.2M189.2 714.5V712.3M189.7 714.5V712.5M190.2 714.5V713.0M190.7 714.5V713.4M191.2 714.5V713.3M191.7 714.5V713.5M192.2 714.5V714.0M192.6 714.5V713.7M193.1 714.5V713.6M193.6 714.5V713.9M194.1 714.5V714.1M194.6 714.5V714.2M215.5 714.5V714.1M216.0 714.5V713.8M216.5 714.5V713.7M217.0 714.5V713.5M217.5 714.5V712.8M218.0 714.5V712.5M218.5 714.5V712.2M219.0 714.5V711.8M219.5 714.5V711.8M220.0 714.5V711.8M220.5 714.5V711.9M221.0 714.5V712.3M221.5 714.5V712.3M222.0 714.5V712.0M222.5 714.5V711.9M223.0 714.5V711.7M223.5 714.5V711.8M224.0 714.5V711.8M224.5 714.5V711.9M225.0 714.5V712.4M225.5 714.5V712.7M226.0 714.5V713.3M226.5 714.5V713.4M227.0 714.5V713.7M227.5 714.5V713.9M228.0 714.5V713.9M228.5 714.5V714.1M229.0 714.5V714.5M239.9 714.5V714.5M240.4 714.5V714.2M240.9 714.5V714.0M241.4 714.5V713.7M241.9 714.5V713.6M242.4 714.5V713.2M242.9 714.5V713.0M243.4 714.5V712.8M243.9 714.5V712.8M244.4 714.5V712.6M244.9 714.5V712.8M245.4 714.5V713.1M245.9 714.5V713.5M246.4 714.5V714.0M246.9 714.5V714.3M251.8 714.5V714.1M252.3 714.5V713.8M252.8 714.5V713.4M253.3 714.5V713.7M253.8 714.5V713.5M254.3 714.5V713.3M254.8 714.5V713.0M255.3 714.5V712.9M255.8 714.5V712.6M256.3 714.5V712.2M256.8 714.5V711.6M257.3 714.5V712.0M257.8 714.5V711.8M258.3 714.5V711.5M258.8 714.5V711.4M259.3 714.5V711.4M259.8 714.5V711.5M260.3 714.5V711.5M260.8 714.5V711.0M261.3 714.5V710.5M261.8 714.5V710.3M262.3 714.5V710.2M262.8 714.5V710.0M263.3 714.5V709.9M263.8 714.5V709.6M264.3 714.5V709.9M264.8 714.5V710.8M265.3 714.5V711.8M265.8 714.5V713.3M266.3 714.5V714.3M285.7 714.5V714.3M286.2 714.5V714.0M286.7 714.5V713.8M287.2 714.5V713.7M287.7 714.5V713.6M288.1 714.5V713.3M288.6 714.5V713.3M289.1 714.5V712.8M289.6 714.5V712.9M290.1 714.5V713.0M290.6 714.5V712.9M291.1 714.5V712.7M291.6 714.5V712.6M292.1 714.5V712.9M292.6 714.5V713.0M293.1 714.5V713.1M293.6 714.5V713.1M294.1 714.5V713.2M294.6 714.5V713.5M295.1 714.5V713.8M295.6 714.5V713.7M296.1 714.5V713.9M296.6 714.5V713.6M297.1 714.5V713.7M297.6 714.5V713.9M298.1 714.5V714.1M298.6 714.5V714.2M299.1 714.5V714.3M299.6 714.5V714.3M315.0 714.5V714.2M315.5 714.5V714.2M316.0 714.5V714.1M316.5 714.5V713.8M317.0 714.5V713.5M317.5 714.5V713.5M318.0 714.5V713.5M318.5 714.5V713.4M319.0 714.5V713.4M319.5 714.5V713.1M320.0 714.5V713.0M320.5 714.5V712.9M321.0 714.5V713.1M321.5 714.5V713.2M322.0 714.5V713.1M322.5 714.5V712.9M323.0 714.5V713.0M323.5 714.5V713.1M324.0 714.5V713.0M324.5 714.5V713.2M325.0 714.5V713.1M325.5 714.5V713.3M326.0 714.5V713.5M326.4 714.5V713.4M326.9 714.5V713.3M327.4 714.5V713.1M327.9 714.5V713.3M328.4 714.5V713.5M328.9 714.5V713.8M329.4 714.5V714.2M330.4 714.5V714.4M331.9 714.5V714.4M350.3 714.5V714.4M350.8 714.5V714.1M351.3 714.5V713.9M351.8 714.5V713.8M352.3 714.5V713.6M352.8 714.5V713.5M353.3 714.5V713.5M353.8 714.5V713.2M354.3 714.5V713.3M354.8 714.5V713.3M355.3 714.5V713.1M355.8 714.5V713.2M356.3 714.5V713.2M356.8 714.5V713.4M357.3 714.5V713.2M357.8 714.5V713.6M358.3 714.5V713.8M358.8 714.5V713.9M359.3 714.5V713.6M359.8 714.5V713.6M360.3 714.5V713.7M360.8 714.5V714.0M361.3 714.5V713.9M361.8 714.5V713.9M362.3 714.5V714.0M362.8 714.5V714.2M363.3 714.5V714.3M363.8 714.5V714.2M364.3 714.5V714.1M364.7 714.5V714.0M365.2 714.5V714.1M365.7 714.5V714.3M366.2 714.5V714.4M375.2 714.5V714.4M375.7 714.5V714.2M376.2 714.5V713.8M376.7 714.5V713.7M377.2 714.5V713.4M377.7 714.5V713.2M378.2 714.5V713.0M378.7 714.5V712.4M379.2 714.5V711.7M379.7 714.5V711.4M380.2 714.5V710.6M380.7 714.5V710.1M381.2 714.5V709.7M381.7 714.5V709.2M382.2 714.5V708.9M382.7 714.5V708.6M383.2 714.5V708.7M383.6 714.5V708.9M384.1 714.5V708.7M384.6 714.5V708.5M385.1 714.5V708.7M385.6 714.5V708.9M386.1 714.5V709.5M386.6 714.5V710.6M387.1 714.5V711.6M387.6 714.5V712.4M388.1 714.5V713.9M409.5 714.5V714.3M410.0 714.5V714.1M410.5 714.5V713.7M411.0 714.5V713.3M411.5 714.5V713.2M412.0 714.5V713.3M412.5 714.5V713.3M413.0 714.5V713.0M413.5 714.5V712.8M414.0 714.5V712.6M414.5 714.5V712.4M415.0 714.5V712.5M415.5 714.5V712.2M416.0 714.5V712.1M416.5 714.5V712.1M417.0 714.5V712.0M417.5 714.5V711.9M418.0 714.5V712.0M418.5 714.5V712.3M419.0 714.5V712.2M419.5 714.5V712.5M420.0 714.5V712.8M420.5 714.5V713.2M421.0 714.5V713.2M421.5 714.5V713.4M421.9 714.5V713.5M422.4 714.5V713.5M422.9 714.5V713.5M423.4 714.5V713.4M423.9 714.5V713.5M424.4 714.5V713.8M424.9 714.5V714.1M425.4 714.5V714.4M425.9 714.5V714.5M431.4 714.5V713.8M431.9 714.5V712.8M432.4 714.5V711.8M432.9 714.5V711.0M433.4 714.5V710.3M433.9 714.5V709.7M434.4 714.5V709.0M434.9 714.5V708.6M435.4 714.5V708.7M435.9 714.5V708.9M436.4 714.5V709.4M436.9 714.5V710.1M437.4 714.5V711.1M437.9 714.5V712.0M438.4 714.5V713.0M438.9 714.5V713.4M457.3 714.5V714.5M457.8 714.5V714.1M458.3 714.5V714.1M458.8 714.5V714.3M459.3 714.5V714.2M459.8 714.5V714.2M460.2 714.5V714.1M460.7 714.5V714.4M462.2 714.5V714.4M462.7 714.5V714.3M463.2 714.5V714.3M463.7 714.5V714.2M464.2 714.5V714.1M464.7 714.5V714.1M465.2 714.5V713.9M465.7 714.5V713.7M466.2 714.5V713.3M466.7 714.5V713.2M467.2 714.5V713.4M467.7 714.5V713.4M468.2 714.5V713.2M468.7 714.5V713.1M469.2 714.5V713.2M469.7 714.5V713.1M470.2 714.5V713.0M470.7 714.5V713.4M471.2 714.5V713.6M471.7 714.5V713.9M472.2 714.5V713.7M472.7 714.5V713.8M473.2 714.5V713.8M473.7 714.5V713.9M474.2 714.5V713.7M474.7 714.5V713.8M475.2 714.5V713.9M475.7 714.5V713.7M476.2 714.5V713.9M476.7 714.5V714.1M477.2 714.5V713.7M477.7 714.5V713.9M478.2 714.5V714.0M478.7 714.5V714.2M479.1 714.5V714.2M479.6 714.5V714.1M480.1 714.5V714.0M480.6 714.5V714.0M481.1 714.5V714.2M481.6 714.5V714.5M482.1 714.5V714.4M482.6 714.5V714.2M483.1 714.5V714.2M483.6 714.5V714.4M484.1 714.5V714.4M506.0 714.5V714.5M506.5 714.5V714.3M507.0 714.5V714.3M507.5 714.5V714.0M508.0 714.5V713.8M508.5 714.5V713.5M509.0 714.5V713.1M509.5 714.5V712.9M510.0 714.5V712.9M510.5 714.5V712.7M511.0 714.5V712.9M511.5 714.5V712.8M512.0 714.5V712.6M512.5 714.5V712.9M513.0 714.5V713.2M513.5 714.5V713.4M514.0 714.5V713.8M514.5 714.5V713.9M515.0 714.5V714.1M515.5 714.5V714.4M529.9 714.5V714.4M534.9 714.5V714.3M535.4 714.5V713.9M535.9 714.5V714.2M536.4 714.5V713.9M536.8 714.5V713.7M537.3 714.5V713.9M537.8 714.5V714.1M538.3 714.5V713.9M538.8 714.5V713.9M539.3 714.5V713.9M539.8 714.5V713.7M540.3 714.5V713.8M540.8 714.5V713.8M541.3 714.5V713.7M541.8 714.5V713.7M542.3 714.5V713.5M542.8 714.5V713.5M543.3 714.5V713.7M543.8 714.5V713.9M544.3 714.5V713.7M544.8 714.5V713.8M545.3 714.5V714.0M545.8 714.5V714.3M546.3 714.5V714.3M546.8 714.5V714.5M550.3 714.5V714.5M552.8 714.5V714.3M553.3 714.5V714.3M553.8 714.5V714.1M554.3 714.5V714.0M554.8 714.5V714.2M555.3 714.5V714.2M555.7 714.5V714.3M556.2 714.5V714.4M556.7 714.5V714.4M557.2 714.5V714.4M557.7 714.5V714.2M558.2 714.5V714.1M558.7 714.5V714.4M559.2 714.5V714.4M559.7 714.5V714.3M560.2 714.5V714.2M561.2 714.5V714.5M562.2 714.5V714.4M571.7 714.5V714.5M572.2 714.5V714.3M572.7 714.5V714.4M573.2 714.5V714.4M573.7 714.5V714.4M574.2 714.5V714.4M574.6 714.5V714.4M583.6 714.5V714.5M584.1 714.5V714.4M585.1 714.5V714.4M585.6 714.5V714.3M586.1 714.5V714.3M586.6 714.5V714.2M587.1 714.5V714.1M587.6 714.5V714.3M588.1 714.5V714.3M588.6 714.5V714.3M589.1 714.5V714.4M589.6 714.5V714.3M590.1 714.5V714.3M590.6 714.5V714.3M591.1 714.5V714.2M591.6 714.5V714.1M592.1 714.5V714.0M592.6 714.5V713.6M593.1 714.5V713.8M593.6 714.5V713.8M594.0 714.5V714.0M594.5 714.5V713.9M595.0 714.5V713.7M595.5 714.5V713.6M596.0 714.5V713.8M596.5 714.5V713.9M597.0 714.5V713.7M597.5 714.5V713.8M598.0 714.5V713.7M598.5 714.5V714.0M599.0 714.5V713.8M599.5 714.5V713.7M600.0 714.5V713.8M600.5 714.5V714.0M601.0 714.5V714.1M601.5 714.5V714.1M602.0 714.5V714.1M602.5 714.5V714.1M603.0 714.5V714.2M603.5 714.5V714.1M604.0 714.5V713.9M604.5 714.5V714.3M605.0 714.5V714.4M606.0 714.5V714.5M607.0 714.5V714.2M607.5 714.5V714.1M608.0 714.5V714.1M608.5 714.5V714.1M609.0 714.5V714.0M609.5 714.5V714.0M610.0 714.5V714.0M610.5 714.5V714.1M611.0 714.5V714.0M611.5 714.5V714.2M612.0 714.5V713.7M612.5 714.5V714.1M612.9 714.5V713.8M613.4 714.5V713.6M613.9 714.5V713.1M614.4 714.5V713.1M614.9 714.5V712.6M615.4 714.5V712.9M615.9 714.5V712.6M616.4 714.5V712.8M616.9 714.5V713.1M617.4 714.5V713.3M617.9 714.5V713.3M618.4 714.5V713.6M618.9 714.5V714.4M619.4 714.5V714.4M633.3 714.5V714.2M633.8 714.5V714.1M634.3 714.5V714.2M634.8 714.5V714.2M635.3 714.5V714.4M635.8 714.5V714.2M636.3 714.5V713.8M636.8 714.5V713.4M637.3 714.5V713.1M637.8 714.5V713.1M638.3 714.5V713.3M638.8 714.5V713.2M639.3 714.5V713.3M639.8 714.5V713.3M640.3 714.5V713.4M640.8 714.5V713.4M641.3 714.5V713.4M641.8 714.5V713.5M642.3 714.5V713.8M642.8 714.5V713.8M643.3 714.5V714.0M643.8 714.5V714.1M644.3 714.5V713.9M644.8 714.5V714.1M645.3 714.5V714.5M645.8 714.5V714.4M658.2 714.5V714.5M659.7 714.5V714.4M666.7 714.5V714.4M667.2 714.5V714.4M667.7 714.5V714.5M670.2 714.5V714.4M670.6 714.5V713.9M671.1 714.5V714.0M671.6 714.5V713.8M672.1 714.5V713.7M672.6 714.5V713.7M673.1 714.5V713.2M673.6 714.5V713.1M674.1 714.5V712.8M674.6 714.5V712.7M675.1 714.5V713.0M675.6 714.5V713.4M676.1 714.5V713.0M676.6 714.5V713.1M677.1 714.5V713.4M677.6 714.5V713.2M678.1 714.5V713.2M678.6 714.5V713.4M679.1 714.5V713.4M679.6 714.5V713.4M680.1 714.5V713.4M680.6 714.5V713.3M681.1 714.5V713.4M681.6 714.5V713.5M682.1 714.5V713.5M682.6 714.5V713.5M683.1 714.5V713.4M683.6 714.5V713.6M684.1 714.5V713.7M684.6 714.5V714.0M685.1 714.5V713.7M685.6 714.5V714.0M686.1 714.5V714.0M686.6 714.5V714.2M687.1 714.5V714.3M687.6 714.5V714.4M705.0 714.5V714.4M705.5 714.5V714.1M706.0 714.5V714.0M706.5 714.5V713.7M707.0 714.5V713.5M707.5 714.5V713.3M708.0 714.5V713.4M708.4 714.5V713.4M708.9 714.5V713.0M709.4 714.5V713.1M709.9 714.5V713.0M710.4 714.5V712.9M710.9 714.5V713.0M711.4 714.5V713.1M711.9 714.5V713.1M712.4 714.5V713.2M712.9 714.5V713.2M713.4 714.5V713.2M713.9 714.5V713.3M714.4 714.5V713.3M714.9 714.5V713.3M715.4 714.5V713.5M715.9 714.5V713.5M716.4 714.5V713.5M716.9 714.5V713.8M717.4 714.5V713.7M717.9 714.5V713.6M718.4 714.5V713.7M718.9 714.5V713.9M719.4 714.5V713.7M719.9 714.5V713.6M720.4 714.5V713.7M720.9 714.5V713.8M721.4 714.5V714.2M721.9 714.5V714.2M722.4 714.5V714.5M722.9 714.5V714.2M723.4 714.5V714.5M723.9 714.5V714.5M741.8 714.5V714.3M749.2 714.5V714.5M755.2 714.5V714.5M755.7 714.5V714.3M756.2 714.5V714.3M756.7 714.5V714.3M761.2 714.5V714.3M761.7 714.5V714.1M762.2 714.5V714.0M762.7 714.5V713.6M763.2 714.5V713.2M763.7 714.5V713.0M764.2 714.5V712.9M764.7 714.5V712.7M765.2 714.5V712.4M765.7 714.5V712.4M766.1 714.5V712.7M766.6 714.5V712.8M767.1 714.5V713.0M767.6 714.5V713.4M768.1 714.5V713.4M768.6 714.5V713.7M769.1 714.5V713.8M769.6 714.5V714.0M770.1 714.5V714.2M770.6 714.5V714.2M771.1 714.5V714.5M783.6 714.5V714.3M784.1 714.5V714.0M784.6 714.5V714.1M785.0 714.5V713.9M785.5 714.5V713.7M786.0 714.5V713.7M786.5 714.5V713.6M787.0 714.5V713.7M787.5 714.5V713.5M788.0 714.5V713.3M788.5 714.5V713.5M789.0 714.5V713.4M789.5 714.5V713.2M790.0 714.5V713.3M790.5 714.5V713.4M791.0 714.5V713.6M791.5 714.5V713.5M792.0 714.5V713.6M792.5 714.5V713.5M793.0 714.5V713.7M793.5 714.5V713.6M794.0 714.5V713.7M794.5 714.5V713.6M795.0 714.5V713.8M795.5 714.5V714.0M796.0 714.5V714.0M796.5 714.5V714.1M797.0 714.5V714.0M797.5 714.5V714.0M798.0 714.5V714.0M798.5 714.5V714.3M817.9 714.5V714.2M818.4 714.5V714.3M818.9 714.5V714.4M819.4 714.5V714.4M819.9 714.5V714.2M820.4 714.5V714.0M820.9 714.5V714.1M821.4 714.5V713.8M821.9 714.5V713.7M822.4 714.5V713.5M822.9 714.5V713.7M823.3 714.5V713.8M823.8 714.5V713.5M824.3 714.5V713.6M824.8 714.5V713.4M825.3 714.5V713.2M825.8 714.5V713.2M826.3 714.5V713.1M826.8 714.5V713.1M827.3 714.5V713.0M827.8 714.5V713.1M828.3 714.5V713.1M828.8 714.5V712.7M829.3 714.5V712.7M829.8 714.5V712.8M830.3 714.5V713.0M830.8 714.5V713.2M831.3 714.5V713.3M831.8 714.5V713.4M832.3 714.5V713.3M832.8 714.5V713.5M833.3 714.5V713.9M833.8 714.5V713.8M834.3 714.5V713.6M834.8 714.5V713.3M835.3 714.5V713.4M835.8 714.5V713.8M836.3 714.5V714.1M860.2 714.5V714.1M860.7 714.5V713.2M861.2 714.5V712.5M861.6 714.5V711.8M862.1 714.5V711.4M862.6 714.5V711.1M863.1 714.5V710.7M863.6 714.5V710.3M864.1 714.5V710.0M864.6 714.5V710.1M865.1 714.5V710.0M865.6 714.5V710.2M866.1 714.5V710.4M866.6 714.5V710.7M867.1 714.5V710.9M867.6 714.5V711.0M868.1 714.5V711.2M868.6 714.5V711.4M869.1 714.5V711.9M869.6 714.5V712.3M870.1 714.5V712.5M870.6 714.5V712.7M871.1 714.5V712.9M871.6 714.5V713.1M872.1 714.5V713.5M872.6 714.5V713.7M873.1 714.5V713.9M873.6 714.5V714.4M882.0 714.5V714.5M882.5 714.5V714.3M883.0 714.5V714.4M883.5 714.5V714.4M884.5 714.5V714.1M885.0 714.5V714.3M885.5 714.5V714.4M902.9 714.5V714.1M903.4 714.5V713.6M903.9 714.5V713.1M904.4 714.5V712.8M904.9 714.5V712.3M905.4 714.5V711.8M905.9 714.5V711.6M906.4 714.5V711.6M906.9 714.5V711.9M907.4 714.5V712.1M907.9 714.5V712.3M908.4 714.5V712.6M908.9 714.5V712.8M909.4 714.5V713.1M909.9 714.5V713.3M910.4 714.5V713.7M910.9 714.5V714.0M911.4 714.5V714.1M911.9 714.5V714.2M912.4 714.5V714.3M925.3 714.5V714.5M925.8 714.5V714.2M926.3 714.5V714.4M926.8 714.5V714.4M927.3 714.5V714.4M927.8 714.5V714.4M928.3 714.5V714.4M928.8 714.5V714.4M929.3 714.5V714.3M929.8 714.5V714.2M930.3 714.5V713.9M930.8 714.5V713.5M931.3 714.5V713.1M931.8 714.5V713.0M932.3 714.5V713.0M932.8 714.5V712.9M933.3 714.5V712.8M933.8 714.5V712.5M934.3 714.5V712.6M934.8 714.5V712.5M935.3 714.5V712.8M935.8 714.5V713.1M936.3 714.5V713.6M936.8 714.5V714.0M946.7 714.5V714.5M947.2 714.5V714.4M947.7 714.5V714.4M948.2 714.5V714.3M949.2 714.5V714.1M949.7 714.5V714.4M954.7 714.5V714.1M955.2 714.5V713.7M955.7 714.5V713.5M956.2 714.5V713.2M956.7 714.5V712.9M957.1 714.5V712.6M957.6 714.5V712.7M958.1 714.5V712.7M958.6 714.5V712.6M959.1 714.5V712.4M959.6 714.5V713.0M960.1 714.5V713.3M960.6 714.5V713.8M976.0 714.5V714.5M976.5 714.5V714.3M977.0 714.5V714.4M978.0 714.5V714.4M978.5 714.5V714.4M979.0 714.5V714.4M979.5 714.5V714.4M980.0 714.5V714.5M980.5 714.5V714.3M981.0 714.5V714.2M981.5 714.5V714.1M982.0 714.5V713.8M982.5 714.5V713.8M983.0 714.5V713.9M983.5 714.5V713.8M984.0 714.5V713.9M984.5 714.5V714.0M985.0 714.5V713.9M985.5 714.5V713.8M986.0 714.5V714.2M986.5 714.5V714.1M987.0 714.5V714.1M987.5 714.5V714.1M988.0 714.5V713.9M988.5 714.5V714.0M989.0 714.5V713.9M989.5 714.5V714.0M990.0 714.5V714.0M990.5 714.5V713.9M991.0 714.5V714.1M991.5 714.5V714.1M992.0 714.5V714.2M992.5 714.5V714.3M993.0 714.5V714.1M993.5 714.5V714.0M994.0 714.5V714.1M994.5 714.5V714.2M995.0 714.5V713.7M995.4 714.5V713.8M995.9 714.5V713.9M996.4 714.5V713.8M996.9 714.5V713.8M997.4 714.5V713.8M997.9 714.5V713.7M998.4 714.5V713.6M998.9 714.5V713.7M999.4 714.5V713.5M999.9 714.5V713.7M1000.4 714.5V713.8M1000.9 714.5V713.8M1001.4 714.5V713.9M1001.9 714.5V714.0M1002.4 714.5V714.1M1002.9 714.5V714.3M1003.4 714.5V714.4M1016.8 714.5V714.5M1017.3 714.5V714.3M1017.8 714.5V714.3M1018.3 714.5V714.1M1018.8 714.5V714.1M1019.3 714.5V714.3M1019.8 714.5V714.3M1020.3 714.5V714.4M1020.8 714.5V714.5M1021.3 714.5V714.4M1021.8 714.5V714.3M1022.3 714.5V714.1M1022.8 714.5V713.9M1023.3 714.5V714.0M1023.8 714.5V714.1M1024.3 714.5V714.2M1024.8 714.5V714.2M1025.3 714.5V714.1M1025.8 714.5V714.2M1026.3 714.5V714.1M1026.8 714.5V714.1M1027.3 714.5V714.0M1027.8 714.5V713.9M1028.3 714.5V713.8M1028.8 714.5V713.9M1029.3 714.5V714.2M1029.8 714.5V714.4M1030.3 714.5V714.3M1030.8 714.5V714.4M1031.3 714.5V714.5M1031.8 714.5V714.4M1032.3 714.5V714.3M1032.8 714.5V714.1M1033.2 714.5V713.9M1033.7 714.5V714.0M1034.2 714.5V714.0M1034.7 714.5V714.3M1035.2 714.5V714.3M1035.7 714.5V714.4M1049.7 714.5V714.4M1050.2 714.5V714.4M1050.7 714.5V714.3M1056.1 714.5V714.4M1056.6 714.5V714.1M1057.1 714.5V714.1M1057.6 714.5V714.1M1058.1 714.5V714.2M1058.6 714.5V714.2M1059.1 714.5V714.2M1059.6 714.5V714.4M1060.1 714.5V714.4M1060.6 714.5V714.3M1061.1 714.5V714.1M1061.6 714.5V714.1M1062.1 714.5V714.0M1062.6 714.5V714.2M1063.1 714.5V714.2M1063.6 714.5V714.1M1064.1 714.5V714.1M1064.6 714.5V714.3M1065.1 714.5V714.4M1066.1 714.5V714.4M1066.6 714.5V714.0M1067.1 714.5V714.0M1067.6 714.5V714.1M1068.1 714.5V714.0M1068.6 714.5V714.1M1069.1 714.5V714.1M1069.6 714.5V714.1M1070.1 714.5V714.3M1070.6 714.5V714.3M1071.1 714.5V714.2M1071.5 714.5V714.3M1072.0 714.5V714.3M1079.0 714.5V713.9M1079.5 714.5V712.8M1080.0 714.5V711.2M1080.5 714.5V709.4M1081.0 714.5V707.4" stroke="#ff2020" stroke-width="1" fill="none"/>
<path d="M34.5 714.5V715.5M35.0 714.5V718.0M35.5 714.5V719.4M36.0 714.5V719.8M36.5 714.5V720.3M37.0 714.5V720.4M37.5 714.5V721.5M38.0 714.5V721.4M38.5 714.5V721.9M39.0 714.5V722.4M39.5 714.5V723.6M39.9 714.5V723.0M40.4 714.5V723.4M40.9 714.5V723.9M41.4 714.5V723.1M41.9 714.5V723.6M42.4 714.5V724.4M42.9 714.5V724.4M43.4 714.5V725.0M43.9 714.5V723.8M44.4 714.5V723.4M44.9 714.5V723.1M45.4 714.5V721.9M45.9 714.5V722.0M46.4 714.5V721.0M46.9 714.5V721.3M47.4 714.5V720.7M47.9 714.5V720.4M48.4 714.5V719.0M48.9 714.5V717.9M49.4 714.5V717.8M49.9 714.5V717.1M50.4 714.5V716.9M50.9 714.5V716.3M51.4 714.5V716.2M51.9 714.5V716.4M52.4 714.5V716.3M52.9 714.5V715.3M59.8 714.5V714.6M60.3 714.5V715.7M60.8 714.5V716.1M61.3 714.5V716.1M61.8 714.5V717.1M62.3 714.5V717.8M62.8 714.5V718.1M63.3 714.5V718.0M63.8 714.5V717.4M64.3 714.5V717.0M64.8 714.5V715.6M65.3 714.5V715.1M65.8 714.5V714.5M86.7 714.5V715.2M87.2 714.5V715.2M87.7 714.5V715.1M88.2 714.5V715.0M88.7 714.5V715.0M93.7 714.5V714.6M94.2 714.5V715.4M94.7 714.5V716.5M95.2 714.5V717.3M95.7 714.5V718.0M96.2 714.5V718.3M96.7 714.5V719.1M97.1 714.5V720.0M97.6 714.5V720.0M98.1 714.5V720.5M98.6 714.5V721.0M99.1 714.5V720.6M99.6 714.5V720.6M100.1 714.5V720.3M100.6 714.5V720.3M101.1 714.5V720.5M101.6 714.5V720.5M102.1 714.5V720.2M102.6 714.5V719.7M103.1 714.5V719.3M103.6 714.5V718.7M104.1 714.5V718.4M104.6 714.5V717.6M105.1 714.5V717.4M105.6 714.5V716.7M106.1 714.5V715.9M106.6 714.5V715.2M107.6 714.5V714.9M125.0 714.5V715.2M125.5 714.5V715.5M126.0 714.5V716.3M126.5 714.5V717.1M127.0 714.5V716.6M127.5 714.5V717.3M128.0 714.5V717.1M128.5 714.5V716.8M129.0 714.5V716.8M129.5 714.5V717.2M130.0 714.5V716.8M130.5 714.5V717.1M131.0 714.5V717.2M131.5 714.5V716.9M132.0 714.5V716.4M132.5 714.5V715.9M133.0 714.5V715.1M133.5 714.5V714.7M143.4 714.5V714.6M143.9 714.5V714.9M144.4 714.5V715.4M144.9 714.5V715.9M145.4 714.5V715.8M145.9 714.5V716.0M146.4 714.5V716.0M146.9 714.5V715.8M147.4 714.5V715.7M147.9 714.5V716.0M148.4 714.5V716.2M148.9 714.5V716.1M149.4 714.5V716.1M149.9 714.5V716.5M150.4 714.5V715.8M150.9 714.5V715.5M151.4 714.5V714.9M151.9 714.5V714.9M170.3 714.5V715.5M170.8 714.5V716.6M171.3 714.5V717.8M171.8 714.5V719.5M172.3 714.5V721.1M172.8 714.5V722.9M173.3 714.5V724.2M173.7 714.5V724.0M174.2 714.5V723.6M174.7 714.5V723.0M175.2 714.5V721.9M175.7 714.5V721.4M176.2 714.5V720.5M176.7 714.5V719.3M177.2 714.5V718.1M177.7 714.5V717.6M178.2 714.5V716.6M178.7 714.5V716.4M179.2 714.5V715.9M179.7 714.5V715.5M180.2 714.5V715.5M180.7 714.5V714.8M195.1 714.5V714.6M195.6 714.5V715.0M196.1 714.5V715.0M196.6 714.5V715.4M197.1 714.5V715.3M197.6 714.5V715.7M198.1 714.5V715.6M198.6 714.5V715.6M199.1 714.5V715.2M199.6 714.5V715.6M200.1 714.5V715.9M200.6 714.5V716.0M201.1 714.5V716.2M201.6 714.5V716.2M202.1 714.5V716.0M202.6 714.5V715.8M203.1 714.5V715.6M203.6 714.5V715.9M204.1 714.5V715.5M204.6 714.5V715.4M205.1 714.5V715.8M205.6 714.5V716.5M206.1 714.5V716.4M206.6 714.5V716.4M207.1 714.5V716.7M207.6 714.5V716.5M208.1 714.5V716.3M208.6 714.5V716.3M209.1 714.5V716.0M209.6 714.5V715.7M210.1 714.5V715.8M210.6 714.5V715.7M211.1 714.5V715.7M211.5 714.5V715.7M212.0 714.5V715.5M212.5 714.5V715.2M213.0 714.5V715.2M213.5 714.5V715.4M214.0 714.5V715.0M214.5 714.5V715.1M215.0 714.5V714.8M229.5 714.5V714.6M230.0 714.5V715.1M230.5 714.5V715.2M230.9 714.5V715.3M231.4 714.5V715.6M231.9 714.5V715.3M232.4 714.5V715.4M232.9 714.5V715.2M233.4 714.5V715.2M233.9 714.5V715.0M234.4 714.5V714.8M234.9 714.5V715.0M235.4 714.5V715.2M235.9 714.5V715.1M236.4 714.5V714.8M236.9 714.5V714.9M237.4 714.5V714.9M237.9 714.5V714.7M238.4 714.5V715.1M238.9 714.5V715.0M239.4 714.5V714.9M247.4 714.5V714.7M247.9 714.5V715.0M248.4 714.5V715.4M248.9 714.5V715.7M249.4 714.5V715.6M249.8 714.5V715.2M250.3 714.5V715.2M250.8 714.5V714.8M251.3 714.5V714.6M266.8 714.5V715.2M267.3 714.5V716.5M267.8 714.5V717.1M268.3 714.5V717.7M268.8 714.5V717.7M269.2 714.5V717.7M269.7 714.5V717.9M270.2 714.5V717.7M270.7 714.5V717.8M271.2 714.5V717.8M271.7 714.5V717.8M272.2 714.5V717.6M272.7 714.5V717.4M273.2 714.5V717.2M273.7 714.5V717.1M274.2 714.5V716.7M274.7 714.5V716.4M275.2 714.5V716.4M275.7 714.5V716.5M276.2 714.5V716.2M276.7 714.5V715.8M277.2 714.5V716.0M277.7 714.5V716.6M278.2 714.5V717.1M278.7 714.5V717.5M279.2 714.5V718.5M279.7 714.5V719.0M280.2 714.5V719.4M280.7 714.5V719.4M281.2 714.5V719.0M281.7 714.5V718.7M282.2 714.5V717.9M282.7 714.5V717.1M283.2 714.5V716.5M283.7 714.5V716.1M284.2 714.5V715.9M284.7 714.5V715.4M285.2 714.5V715.1M300.1 714.5V714.6M300.6 714.5V714.9M301.1 714.5V714.8M301.6 714.5V714.8M302.1 714.5V714.8M302.6 714.5V714.8M303.1 714.5V714.8M303.6 714.5V714.7M304.1 714.5V715.0M304.6 714.5V715.0M305.1 714.5V715.1M305.6 714.5V715.3M306.1 714.5V715.2M306.6 714.5V715.1M307.1 714.5V715.4M307.5 714.5V715.5M308.0 714.5V715.3M308.5 714.5V715.1M309.0 714.5V715.2M309.5 714.5V715.2M310.0 714.5V715.4M310.5 714.5V714.9M311.0 714.5V714.9M311.5 714.5V714.9M312.0 714.5V714.9M312.5 714.5V714.8M313.0 714.5V714.9M313.5 714.5V714.9M314.0 714.5V714.7M314.5 714.5V714.6M329.9 714.5V714.5M330.9 714.5V714.7M331.4 714.5V714.5M332.4 714.5V714.6M332.9 714.5V714.5M333.4 714.5V714.7M333.9 714.5V714.7M334.4 714.5V715.0M334.9 714.5V715.0M335.4 714.5V715.2M335.9 714.5V715.2M336.4 714.5V715.3M336.9 714.5V715.3M337.4 714.5V715.2M337.9 714.5V715.2M338.4 714.5V715.2M338.9 714.5V715.2M339.4 714.5V715.1M339.9 714.5V715.4M340.4 714.5V715.3M340.9 714.5V715.2M341.4 714.5V715.3M341.9 714.5V715.2M342.4 714.5V715.4M342.9 714.5V715.1M343.4 714.5V715.2M343.9 714.5V715.1M344.4 714.5V715.0M344.9 714.5V715.0M345.3 714.5V714.9M345.8 714.5V715.1M346.3 714.5V715.1M346.8 714.5V715.2M347.3 714.5V715.0M347.8 714.5V714.8M348.3 714.5V714.7M348.8 714.5V714.5M349.3 714.5V714.6M349.8 714.5V714.6M366.7 714.5V714.8M367.2 714.5V715.1M367.7 714.5V715.4M368.2 714.5V716.0M368.7 714.5V716.5M369.2 714.5V716.7M369.7 714.5V717.0M370.2 714.5V717.4M370.7 714.5V718.0M371.2 714.5V717.9M371.7 714.5V717.5M372.2 714.5V717.0M372.7 714.5V716.6M373.2 714.5V716.2M373.7 714.5V715.7M374.2 714.5V715.1M374.7 714.5V714.9M388.6 714.5V715.0M389.1 714.5V716.1M389.6 714.5V716.8M390.1 714.5V717.3M390.6 714.5V718.1M391.1 714.5V718.5M391.6 714.5V718.5M392.1 714.5V718.6M392.6 714.5V718.9M393.1 714.5V718.9M393.6 714.5V719.0M394.1 714.5V718.5M394.6 714.5V718.3M395.1 714.5V717.8M395.6 714.5V717.5M396.1 714.5V717.4M396.6 714.5V717.3M397.1 714.5V717.0M397.6 714.5V716.8M398.1 714.5V716.6M398.6 714.5V716.8M399.1 714.5V716.6M399.6 714.5V716.7M400.1 714.5V716.9M400.6 714.5V716.8M401.1 714.5V716.6M401.6 714.5V716.1M402.1 714.5V716.2M402.6 714.5V716.4M403.0 714.5V716.0M403.5 714.5V716.1M404.0 714.5V716.1M404.5 714.5V716.3M405.0 714.5V716.3M405.5 714.5V716.0M406.0 714.5V716.0M406.5 714.5V716.0M407.0 714.5V715.9M407.5 714.5V715.5M408.0 714.5V715.3M408.5 714.5V714.9M409.0 714.5V714.6M426.4 714.5V714.7M426.9 714.5V714.9M427.4 714.5V714.9M427.9 714.5V715.1M428.4 714.5V715.3M428.9 714.5V715.7M429.4 714.5V715.6M429.9 714.5V715.5M430.4 714.5V715.2M430.9 714.5V714.5M439.4 714.5V714.7M439.9 714.5V715.5M440.4 714.5V716.3M440.8 714.5V716.9M441.3 714.5V717.7M441.8 714.5V718.5M442.3 714.5V719.2M442.8 714.5V719.5M443.3 714.5V719.5M443.8 714.5V719.5M444.3 714.5V719.5M444.8 714.5V719.5M445.3 714.5V719.3M445.8 714.5V718.9M446.3 714.5V719.0M446.8 714.5V718.7M447.3 714.5V718.2M447.8 714.5V718.0M448.3 714.5V718.0M448.8 714.5V717.8M449.3 714.5V717.7M449.8 714.5V717.4M450.3 714.5V716.9M450.8 714.5V716.3M451.3 714.5V716.5M451.8 714.5V716.1M452.3 714.5V715.6M452.8 714.5V715.6M453.3 714.5V715.4M453.8 714.5V715.1M454.3 714.5V715.1M454.8 714.5V715.0M455.3 714.5V714.9M455.8 714.5V715.1M456.3 714.5V714.9M456.8 714.5V714.8M461.2 714.5V714.6M461.7 714.5V714.8M484.6 714.5V714.7M485.1 714.5V714.8M485.6 714.5V715.1M486.1 714.5V715.2M486.6 714.5V715.1M487.1 714.5V715.1M487.6 714.5V715.0M488.1 714.5V714.7M488.6 714.5V714.6M489.1 714.5V714.9M489.6 714.5V715.1M490.1 714.5V715.2M490.6 714.5V715.4M491.1 714.5V715.4M491.6 714.5V715.3M492.1 714.5V715.3M492.6 714.5V715.4M493.1 714.5V715.4M493.6 714.5V715.5M494.1 714.5V715.7M494.6 714.5V715.3M495.1 714.5V715.2M495.6 714.5V715.4M496.1 714.5V715.6M496.6 714.5V715.5M497.1 714.5V715.4M497.6 714.5V715.1M498.1 714.5V714.9M498.5 714.5V714.8M499.0 714.5V714.7M499.5 714.5V714.6M500.0 714.5V714.7M500.5 714.5V714.7M501.0 714.5V714.9M501.5 714.5V715.2M502.0 714.5V715.1M502.5 714.5V714.7M503.0 714.5V714.9M503.5 714.5V714.9M504.0 714.5V714.7M504.5 714.5V714.7M505.0 714.5V714.8M505.5 714.5V714.5M516.0 714.5V714.6M516.5 714.5V714.5M517.0 714.5V714.6M517.4 714.5V714.6M517.9 714.5V714.9M518.4 714.5V715.1M518.9 714.5V715.3M519.4 714.5V715.3M519.9 714.5V715.0M520.4 714.5V715.0M520.9 714.5V714.9M521.4 714.5V715.0M521.9 714.5V715.5M522.4 714.5V715.6M522.9 714.5V715.6M523.4 714.5V715.4M523.9 714.5V715.1M524.4 714.5V715.3M524.9 714.5V715.3M525.4 714.5V715.2M525.9 714.5V715.2M526.4 714.5V715.2M526.9 714.5V715.2M527.4 714.5V715.0M527.9 714.5V715.0M528.4 714.5V714.8M528.9 714.5V714.7M529.4 714.5V714.6M530.4 714.5V714.6M530.9 714.5V714.7M531.4 714.5V714.6M531.9 714.5V714.8M532.4 714.5V714.8M532.9 714.5V714.7M533.4 714.5V714.6M533.9 714.5V714.7M534.4 714.5V714.5M547.3 714.5V714.5M547.8 714.5V714.7M548.3 714.5V714.6M548.8 714.5V714.5M549.3 714.5V714.7M549.8 714.5V714.6M550.8 714.5V714.6M551.3 714.5V714.6M551.8 714.5V714.5M552.3 714.5V714.6M560.7 714.5V714.7M561.7 714.5V714.6M562.7 714.5V714.6M563.2 714.5V714.9M563.7 714.5V714.9M564.2 714.5V714.7M564.7 714.5V714.8M565.2 714.5V715.2M565.7 714.5V715.0M566.2 714.5V715.2M566.7 714.5V715.3M567.2 714.5V715.3M567.7 714.5V715.4M568.2 714.5V715.3M568.7 714.5V715.2M569.2 714.5V715.0M569.7 714.5V714.8M570.2 714.5V714.7M570.7 714.5V714.9M571.2 714.5V714.7M575.1 714.5V714.7M575.6 714.5V714.9M576.1 714.5V714.8M576.6 714.5V714.8M577.1 714.5V714.8M577.6 714.5V715.3M578.1 714.5V715.4M578.6 714.5V715.8M579.1 714.5V715.5M579.6 714.5V715.3M580.1 714.5V715.2M580.6 714.5V715.2M581.1 714.5V714.9M581.6 714.5V714.9M582.1 714.5V714.7M582.6 714.5V714.6M583.1 714.5V714.5M584.6 714.5V714.6M605.5 714.5V714.6M606.5 714.5V714.6M619.9 714.5V714.5M620.4 714.5V715.0M620.9 714.5V714.9M621.4 714.5V715.3M621.9 714.5V715.5M622.4 714.5V715.6M622.9 714.5V716.0M623.4 714.5V716.1M623.9 714.5V716.5M624.4 714.5V716.6M624.9 714.5V716.8M625.4 714.5V716.9M625.9 714.5V716.6M626.4 714.5V716.7M626.9 714.5V717.0M627.4 714.5V716.9M627.9 714.5V716.8M628.4 714.5V716.5M628.9 714.5V716.2M629.4 714.5V715.9M629.9 714.5V715.6M630.4 714.5V715.5M630.9 714.5V715.2M631.4 714.5V714.8M631.9 714.5V714.8M632.3 714.5V714.7M632.8 714.5V714.5M646.3 714.5V714.6M646.8 714.5V714.8M647.3 714.5V715.2M647.8 714.5V715.5M648.3 714.5V715.9M648.8 714.5V716.2M649.3 714.5V716.1M649.8 714.5V716.3M650.3 714.5V716.5M650.8 714.5V716.6M651.2 714.5V716.3M651.7 714.5V716.2M652.2 714.5V716.4M652.7 714.5V716.3M653.2 714.5V716.1M653.7 714.5V715.8M654.2 714.5V716.0M654.7 714.5V715.6M655.2 714.5V715.5M655.7 714.5V715.4M656.2 714.5V715.3M656.7 714.5V715.0M657.2 714.5V714.6M657.7 714.5V714.6M658.7 714.5V714.6M659.2 714.5V714.5M660.2 714.5V714.7M660.7 714.5V714.8M661.2 714.5V714.6M661.7 714.5V714.9M662.2 714.5V714.9M662.7 714.5V714.7M663.2 714.5V715.0M663.7 714.5V714.9M664.2 714.5V714.8M664.7 714.5V714.6M665.2 714.5V714.8M665.7 714.5V714.6M666.2 714.5V714.6M668.2 714.5V714.5M668.7 714.5V714.8M669.2 714.5V714.8M669.7 714.5V714.6M688.1 714.5V714.9M688.6 714.5V715.0M689.1 714.5V715.4M689.5 714.5V715.2M690.0 714.5V715.4M690.5 714.5V715.7M691.0 714.5V715.8M691.5 714.5V715.5M692.0 714.5V715.3M692.5 714.5V715.3M693.0 714.5V715.6M693.5 714.5V715.7M694.0 714.5V715.5M694.5 714.5V715.7M695.0 714.5V715.8M695.5 714.5V715.9M696.0 714.5V716.1M696.5 714.5V715.8M697.0 714.5V715.8M697.5 714.5V715.8M698.0 714.5V715.8M698.5 714.5V715.7M699.0 714.5V715.6M699.5 714.5V715.8M700.0 714.5V715.9M700.5 714.5V716.1M701.0 714.5V715.9M701.5 714.5V716.0M702.0 714.5V716.1M702.5 714.5V715.9M703.0 714.5V715.6M703.5 714.5V715.1M704.0 714.5V714.6M704.5 714.5V714.5M724.4 714.5V714.8M724.9 714.5V715.0M725.4 714.5V715.1M725.9 714.5V714.9M726.4 714.5V714.9M726.9 714.5V714.9M727.4 714.5V715.3M727.8 714.5V715.1M728.3 714.5V715.3M728.8 714.5V715.1M729.3 714.5V714.9M729.8 714.5V714.9M730.3 714.5V715.0M730.8 714.5V715.3M731.3 714.5V715.0M731.8 714.5V715.2M732.3 714.5V715.1M732.8 714.5V715.4M733.3 714.5V715.4M733.8 714.5V715.6M734.3 714.5V715.5M734.8 714.5V715.4M735.3 714.5V715.3M735.8 714.5V715.0M736.3 714.5V715.0M736.8 714.5V715.0M737.3 714.5V715.0M737.8 714.5V714.8M738.3 714.5V715.0M738.8 714.5V714.8M739.3 714.5V715.2M739.8 714.5V715.3M740.3 714.5V715.1M740.8 714.5V715.0M741.3 714.5V714.6M742.3 714.5V714.8M742.8 714.5V715.0M743.3 714.5V715.0M743.8 714.5V714.7M744.3 714.5V714.6M744.8 714.5V714.6M745.3 714.5V714.9M745.8 714.5V715.0M746.3 714.5V715.3M746.7 714.5V715.3M747.2 714.5V715.0M747.7 714.5V714.8M748.2 714.5V714.9M748.7 714.5V714.8M749.7 714.5V714.5M750.2 714.5V714.6M750.7 714.5V714.6M751.2 714.5V714.6M751.7 714.5V714.6M752.2 714.5V714.8M752.7 714.5V714.8M753.2 714.5V714.8M753.7 714.5V714.8M754.2 714.5V714.6M754.7 714.5V714.5M757.2 714.5V714.5M757.7 714.5V714.7M758.2 714.5V714.5M758.7 714.5V714.8M759.2 714.5V714.9M759.7 714.5V715.0M760.2 714.5V714.9M760.7 714.5V714.6M771.6 714.5V714.7M772.1 714.5V714.8M772.6 714.5V714.8M773.1 714.5V714.9M773.6 714.5V715.1M774.1 714.5V715.0M774.6 714.5V715.0M775.1 714.5V714.8M775.6 714.5V715.0M776.1 714.5V715.1M776.6 714.5V715.3M777.1 714.5V715.6M777.6 714.5V715.5M778.1 714.5V715.4M778.6 714.5V715.5M779.1 714.5V715.5M779.6 714.5V715.6M780.1 714.5V715.3M780.6 714.5V715.3M781.1 714.5V715.0M781.6 714.5V714.9M782.1 714.5V714.7M782.6 714.5V714.5M783.1 714.5V714.6M799.0 714.5V714.7M799.5 714.5V715.0M800.0 714.5V715.1M800.5 714.5V715.2M801.0 714.5V715.5M801.5 714.5V715.7M802.0 714.5V715.9M802.5 714.5V716.0M803.0 714.5V715.9M803.5 714.5V716.4M803.9 714.5V716.2M804.4 714.5V716.2M804.9 714.5V716.4M805.4 714.5V716.2M805.9 714.5V716.0M806.4 714.5V715.8M806.9 714.5V715.9M807.4 714.5V715.4M807.9 714.5V715.4M808.4 714.5V715.3M808.9 714.5V715.1M809.4 714.5V715.0M809.9 714.5V714.9M810.4 714.5V714.8M810.9 714.5V715.1M811.4 714.5V714.8M811.9 714.5V714.9M812.4 714.5V714.8M812.9 714.5V714.7M813.4 714.5V714.8M813.9 714.5V714.8M814.4 714.5V714.7M814.9 714.5V714.7M815.4 714.5V714.6M815.9 714.5V714.8M816.4 714.5V714.9M816.9 714.5V714.9M817.4 714.5V714.7M836.8 714.5V714.5M837.3 714.5V714.8M837.8 714.5V715.1M838.3 714.5V715.4M838.8 714.5V715.4M839.3 714.5V715.5M839.8 714.5V715.6M840.3 714.5V715.6M840.8 714.5V715.4M841.3 714.5V715.6M841.8 714.5V715.7M842.2 714.5V715.7M842.7 714.5V716.0M843.2 714.5V715.8M843.7 714.5V715.9M844.2 714.5V715.9M844.7 714.5V715.7M845.2 714.5V715.3M845.7 714.5V715.4M846.2 714.5V715.2M846.7 714.5V715.1M847.2 714.5V715.3M847.7 714.5V715.0M848.2 714.5V715.1M848.7 714.5V715.2M849.2 714.5V715.1M849.7 714.5V715.0M850.2 714.5V714.9M850.7 714.5V715.2M851.2 714.5V715.2M851.7 714.5V715.6M852.2 714.5V716.1M852.7 714.5V716.5M853.2 714.5V716.9M853.7 714.5V717.6M854.2 714.5V718.2M854.7 714.5V718.7M855.2 714.5V718.9M855.7 714.5V719.2M856.2 714.5V719.5M856.7 714.5V719.8M857.2 714.5V719.6M857.7 714.5V719.1M858.2 714.5V718.5M858.7 714.5V717.3M859.2 714.5V716.2M859.7 714.5V715.2M874.1 714.5V714.6M874.6 714.5V714.9M875.1 714.5V715.0M875.6 714.5V715.3M876.1 714.5V715.4M876.6 714.5V715.4M877.1 714.5V715.9M877.6 714.5V716.0M878.1 714.5V715.7M878.6 714.5V715.5M879.1 714.5V715.1M879.6 714.5V714.9M880.1 714.5V715.0M880.5 714.5V714.7M881.0 714.5V714.7M881.5 714.5V714.6M884.0 714.5V714.5M886.0 714.5V714.5M886.5 714.5V714.6M887.0 714.5V714.6M887.5 714.5V714.5M888.0 714.5V714.5M888.5 714.5V714.6M889.0 714.5V714.7M889.5 714.5V714.8M890.0 714.5V714.6M890.5 714.5V714.7M891.0 714.5V714.8M891.5 714.5V715.1M892.0 714.5V715.0M892.5 714.5V714.9M893.0 714.5V714.8M893.5 714.5V715.1M894.0 714.5V715.0M894.5 714.5V715.0M895.0 714.5V715.1M895.5 714.5V715.2M896.0 714.5V715.2M896.5 714.5V715.2M897.0 714.5V715.3M897.5 714.5V715.4M898.0 714.5V715.5M898.5 714.5V715.6M899.0 714.5V715.6M899.5 714.5V715.7M899.9 714.5V715.9M900.4 714.5V715.6M900.9 714.5V715.7M901.4 714.5V715.4M901.9 714.5V715.1M902.4 714.5V714.6M912.9 714.5V714.6M913.4 714.5V714.8M913.9 714.5V714.8M914.4 714.5V715.0M914.9 714.5V714.8M915.4 714.5V714.8M915.9 714.5V714.9M916.4 714.5V715.1M916.9 714.5V715.0M917.4 714.5V715.1M917.9 714.5V715.0M918.4 714.5V715.1M918.8 714.5V715.4M919.3 714.5V715.3M919.8 714.5V715.4M920.3 714.5V715.5M920.8 714.5V715.4M921.3 714.5V715.3M921.8 714.5V715.1M922.3 714.5V714.9M922.8 714.5V714.8M923.3 714.5V714.9M923.8 714.5V714.9M924.3 714.5V714.9M924.8 714.5V714.7M937.3 714.5V714.8M937.7 714.5V715.4M938.2 714.5V716.1M938.7 714.5V716.4M939.2 714.5V716.5M939.7 714.5V716.4M940.2 714.5V716.1M940.7 714.5V715.9M941.2 714.5V715.9M941.7 714.5V715.6M942.2 714.5V715.6M942.7 714.5V715.1M943.2 714.5V715.0M943.7 714.5V714.9M944.2 714.5V714.8M944.7 714.5V714.8M945.2 714.5V714.7M945.7 714.5V714.7M946.2 714.5V714.5M948.7 714.5V714.5M950.2 714.5V714.6M950.7 714.5V714.6M951.2 714.5V714.6M951.7 714.5V714.8M952.2 714.5V715.1M952.7 714.5V715.3M953.2 714.5V715.2M953.7 714.5V715.0M954.2 714.5V714.6M961.1 714.5V714.6M961.6 714.5V715.5M962.1 714.5V716.1M962.6 714.5V716.6M963.1 714.5V716.9M963.6 714.5V717.4M964.1 714.5V717.3M964.6 714.5V717.1M965.1 714.5V717.3M965.6 714.5V717.5M966.1 714.5V717.3M966.6 714.5V717.0M967.1 714.5V716.7M967.6 714.5V716.4M968.1 714.5V716.3M968.6 714.5V716.4M969.1 714.5V716.1M969.6 714.5V715.8M970.1 714.5V715.7M970.6 714.5V715.5M971.1 714.5V715.4M971.6 714.5V715.3M972.1 714.5V715.4M972.6 714.5V715.2M973.1 714.5V715.2M973.6 714.5V714.9M974.1 714.5V714.9M974.6 714.5V714.7M975.1 714.5V714.7M975.6 714.5V714.5M977.5 714.5V714.5M1003.9 714.5V714.6M1004.4 714.5V714.7M1004.9 714.5V714.8M1005.4 714.5V714.7M1005.9 714.5V714.8M1006.4 714.5V714.7M1006.9 714.5V714.7M1007.4 714.5V714.8M1007.9 714.5V715.0M1008.4 714.5V715.2M1008.9 714.5V715.1M1009.4 714.5V715.0M1009.9 714.5V714.9M1010.4 714.5V715.1M1010.9 714.5V715.0M1011.4 714.5V714.9M1011.9 714.5V714.7M1012.4 714.5V714.8M1012.9 714.5V714.9M1013.4 714.5V715.1M1013.9 714.5V715.1M1014.3 714.5V715.1M1014.8 714.5V715.0M1015.3 714.5V714.9M1015.8 714.5V714.9M1016.3 714.5V714.7M1036.2 714.5V714.6M1036.7 714.5V714.8M1037.2 714.5V714.5M1037.7 714.5V714.7M1038.2 714.5V714.8M1038.7 714.5V714.8M1039.2 714.5V714.7M1039.7 714.5V714.7M1040.2 714.5V714.7M1040.7 714.5V714.8M1041.2 714.5V714.7M1041.7 714.5V714.7M1042.2 714.5V714.9M1042.7 714.5V714.7M1043.2 714.5V714.7M1043.7 714.5V714.6M1044.2 714.5V714.9M1044.7 714.5V715.0M1045.2 714.5V714.9M1045.7 714.5V714.9M1046.2 714.5V714.7M1046.7 714.5V714.9M1047.2 714.5V714.8M1047.7 714.5V714.8M1048.2 714.5V714.7M1048.7 714.5V714.6M1049.2 714.5V714.6M1051.2 714.5V714.6M1051.7 714.5V714.6M1052.2 714.5V714.5M1052.6 714.5V714.5M1053.1 714.5V714.6M1053.6 714.5V714.6M1054.1 714.5V714.9M1054.6 714.5V714.8M1055.1 714.5V714.7M1055.6 714.5V714.6M1065.6 714.5V714.5M1072.5 714.5V714.6M1073.0 714.5V714.6M1073.5 714.5V714.7M1074.0 714.5V714.8M1074.5 714.5V714.8M1075.0 714.5V714.9M1075.5 714.5V715.0M1076.0 714.5V714.9M1076.5 714.5V714.9M1077.0 714.5V714.8M1077.5 714.5V714.7M1078.0 714.5V714.7M1078.5 714.5V714.6" stroke="#2fd3d3" stroke-width="1" fill="none"/>
<path d="M30.0 690.1l1 1.2 1 1.1 1-.2 1 1.4 1 2.7 1 2.2 1 1.7 1 2.3 1 2.3 .9 2.5 1 2.6 1 2 1 2.7 1 2.1 1 1.8 1 1.4 1 1.3 1 1.1 1-.2 1 .5 1 .1 1 .6 1-.1 1-.9 1-.6 1-.3 1 0 1 .5 .9 .1 1 .1 1 1.2 1 1.1 1 1.5 1 .5 1-.3 1-.3 1-1.1 1-.4 1-.5 1-.4 1-.8 1-.5 1-1 1-1.7 1-1.3 1-1.1 1-.8 1-1.3 .9-.7 1-.3 1-.8 1-.2 1-.3 1-.3 1 .5 1 0 1 .5 1 .1 1 .1 1-.6 1-.3 1-.5 1-.2 1 .5 1 1.3 1 1.6 1 1.6 .9 1.8 1 2 1 1.4 1 1.3 1 1.6 1 .9 1 .6 1 .4 1 .2 1-.6 1 0 1-.6 1-.5 1-1 1-.6 1-.8 1-.6 1-.6 1-.9 .9-1 1-1.1 1-.8 1-1 1-1 1-.9 1 0 1 .1 1 .3 1 .9 1 1.4 1 .7 1 .3 1 .9 1 .5 1 .5 1 0 1-.6 1-.6 .9-1.2 1-1.2 1-.8 1-.9 1-.9 1-.7 1-.2 1 .1 1 .6 1 .6 1 .5 1 .5 1 .1 1 .7 1 .3 1 .3 1-.3 1-.4 1-.3 .9-.4 1-.6 1-.6 1-.6 1-.2 1-.7 1 0 1-.6 1 0 1-.2 1-.8 1-1.1 1-.9 1-.9 1 .1 1 0 1 1.2 1 1.8 1 3.1 1 3.8 .9 2 1 1.2 1 .9 1-.1 1-.1 1 0 1 0 1-.7 1-.6 1-.6 1-.5 1-.9 1-.6 1-1 1-.3 1-.5 1-.1 1-.1 1 .2 .9-.4 1 .1 1 .2 1 .4 1 .3 1 .5 1 0 1 .7 1 .5 1 .3 1 .1 1 .3 1 .4 1 .8 1 .6 1 .3 1 .3 1 .1 1 .3 .9 .2 1 0 1 .1 1 0 1-.6 1-.4 1-1 1-.9 1-.8 1-.3 1-.7 1-.8 1-.7 1-.3 1 .1 1 0 1-.1 1 .2 1 .5 .9 .2 1 .2 1 .2 1 .1 1 .1 1 .2 1-.1 1 .1 1 .2 1-.2 1-.3 1-.4 1-.7 1-.5 1-.4 1 0 1 .3 1 .5 1 .6 .9-.1 1 0 1-.4 1-.6 1-.2 1-.5 1-.7 1-1.1 1-.6 1-.9 1-.7 1-1.1 1-1.4 1-1.2 1-1.4 1-.5 1 .8 1 1 1 1.5 1 1.1 .9 .9 1 .8 1 .8 1 .6 1 .5 1 .1 1 .6 1 0 1 .9 1 1.1 1 1.8 1 1.5 1 .6 1 0 1 0 1-.1 1-.5 1-.4 1-.3 .9-.4 1-.6 1-.4 1-.7 1-.2 1-.2 1-.1 1-.1 1-.3 1 0 1 .1 1-.1 1 .5 1 0 1 0 1 .1 1 .2 1 .4 1 0 .9 .4 1 0 1 .2 1 .1 1 0 1 .1 1 .1 1-.1 1-.3 1-.3 1-.4 1-.3 1-.5 1-.4 1-.2 1-.5 1-.3 1-.3 1-.3 .9-.2 1-.5 1-.1 1 .3 1 .1 1 .1 1 0 1 .1 1 .2 1 .3 1 .2 1 .2 1 .2 1 0 1 .3 1 .2 1 .3 1 0 1 .1 .9 .1 1 .2 1 .1 1-.1 1 0 1-.1 1-.4 1-.4 1-.3 1-.3 1-.5 1-.3 1-.3 1 .1 1-.2 1-.2 1 0 1-.1 1 .1 1-.3 .9-.1 1 .1 1 .5 1 .8 1 .9 1 1 1 1.1 1 .2 1 .1 1-.3 1-.3 1-.4 1-.5 1-.5 1-1.3 1-1.4 1-1.6 1-1.8 1-1.5 .9-1.5 1-1.4 1-.9 1 .1 1 .9 1 1.3 1 1.2 1 1.6 1 1.1 1 1.2 1 .8 1 .6 1 .6 1 .4 1 .4 1 .5 1 .7 1 .4 1 .3 .9 .3 1 .4 1 .6 1 .2 1 .3 1-.1 1-.3 1-.3 1-.6 1-.4 1-.5 1-.6 1-.6 1-.7 1-.7 1-.6 1-.5 1-.2 1-.1 .9-.1 1-.2 1-.3 1 .2 1 .1 1 .3 1 .3 1 .5 1 .2 1-.4 1-1.2 1-1.7 1-1.8 1-2 1-1.2 1-.6 1 .2 1 .4 1 1.2 .9 1.2 1 1.7 1 1.8 1 1.2 1 1.2 1 .9 1 1 1 .6 1 .7 1 .6 1-.1 1 .4 1 0 1-.1 1 .1 1 .2 1-.1 1-.4 1 0 1 0 .9 0 1 .2 1-.3 1 0 1-.2 1-.4 1-.5 1-.2 1-.5 1-.3 1-.2 1 .1 1-.3 1-.1 1-.2 1-.3 1 .1 1-.3 1 .1 .9-.2 1-.1 1 .2 1-.2 1 0 1 .2 1 .3 1 .2 1 0 1-.1 1 .4 1 .3 1 .2 1 .2 1 .3 1 .2 1 .3 1 .3 1-.1 .9 0 1 0 1 .1 1 .3 1-.1 1 .2 1-.1 1 0 1-.1 1-.3 1-.5 1-.6 1-.5 1-.4 1-.4 1-.1 1 .2 1 .1 1 .1 .9 .1 1 .4 1 .2 1 0 1 .1 1 .6 1 .1 1 .2 1 .1 1 .2 1 0 1 0 1 0 1 0 1 0 1 .2 1-.1 1 0 1-.4 1-.1 .9-.2 1-.1 1-.2 1-.2 1-.2 1-.3 1-.2 1-.2 1 0 1 .1 1 .2 1 .1 1 0 1-.1 1 .1 1 0 1-.2 1-.3 1 .1 .9 .1 1-.1 1-.2 1 .1 1-.2 1 .2 1 0 1 .2 1 0 1 .4 1 .2 1 .2 1 .2 1 0 1 0 1 0 1-.2 1 0 1 0 .9 .2 1 .1 1 0 1 .6 1 .3 1 .1 1 0 1-.1 1 0 1-.1 1 0 1-.1 1-.2 1 0 1 .1 1-.1 1-.2 1-.2 1-.3 .9 0 1-.4 1-.1 1-.3 1-.1 1-.2 1-.1 1 0 1-.1 1-.1 1-.2 1 .2 1 0 1-.1 1-.2 1-.1 1-.2 1-.1 1-.2 .9-.1 1-.7 1-.6 1-.5 1-.1 1-.2 1 .4 1 .1 1 .3 1 .5 1 .6 1 .6 1 .7 1 .5 1 .8 1 .5 1 .2 1 0 1 0 1-.1 .9-.1 1-.4 1 0 1 0 1-.6 1-.6 1-.2 1-.3 1-.2 1-.2 1 0 1 0 1-.1 1 .2 1 .2 1 .6 1 .7 1 .5 1 .6 .9 .3 1 .5 1 .1 1 .2 1 .2 1-.1 1-.2 1 .1 1-.2 1 .3 1 .1 1 0 1 .2 1-.1 1 .1 1-.1 1 0 1 .2 1-.1 .9-.4 1-.2 1-.2 1-.7 1-.6 1 0 1-.5 1-.2 1-.3 1-.2 1-.4 1-.1 1-.3 1-.2 1 0 1-.1 1 0 1 0 1 .5 .9 .3 1 .5 1 .2 1 .1 1 .4 1 .3 1 .5 1 .3 1 .3 1 .2 1 .4 1 .5 1 .3 1 .3 1-.2 1-.2 1-.3 1-.3 1-.5 .9-.2 1-.5 1-.6 1-.2 1-.3 1-.4 1-.2 1-.2 1-.2 1-.1 1-.2 1-.2 1-.2 1 .1 1 .1 1 0 1 .2 1 .3 1 0 1 .3 .9 .2 1-.1 1 .2 1 .2 1 .2 1 .4 1 .3 1 .1 1-.1 1 .2 1 .1 1 .2 1 .1 1-.2 1 .1 1 .3 1-.2 1 .2 1 .4 .9 0 1 0 1-.1 1 .1 1-.1 1 .2 1 .1 1 0 1-.1 1-.1 1 0 1 .1 1 .3 1 .1 1-.4 1-.2 1-.7 1-.5 1-.7 .9-.4 1-.2 1-.1 1 0 1 .1 1 .1 1 .2 1 .2 1 .2 1 0 1 .3 1 .4 1 .1 1 .4 1 .1 1 0 1-.1 1 0 1-.4 .9-.2 1-.2 1-.2 1-.5 1-.2 1-.4 1-.1 1-.3 1-.1 1-.3 1-.1 1 0 1-.1 1-.1 1 .3 1 .3 1 .4 1 .6 1 .3 .9 .6 1 .6 1 .2 1 .2 1 0 1 0 1 .1 1 .2 1 0 1-.1 1 .1 1 0 1 .2 1 .1 1-.4 1 .1 1-.1 1-.2 1-.3 1-.3 .9-.3 1-.3 1-.4 1-.5 1-.3 1-.6 1-.4 1-.1 1-.2 1-.2 1 0 1-.6 1 .1 1 .3 1 .4 1 .4 1 .3 1 .2 1 .4 .9 .5 1 .3 1 .2 1 .1 1 0 1 .1 1 .2 1 .1 1 .2 1 .4 1 1 1 1.2 1 1.5 1 1.4 1 1.6 1 .9 1-.1 1-.8 1-1.2 .9-1.2 1-1.2 1-1.4 1-1.2 1-1.1 1-.7 1-.8 1-.5 1-.2 1-.3 1-.2 1 .1 1 .3 1 .3 1 .4 1 .3 1 .6 1 0 1-.1 .9 0 1-.1 1-.1 1 0 1-.2 1 .1 1 .1 1 0 1 0 1 .2 1 0 1 .3 1 0 1 .2 1 .1 1 .2 1 .2 1 .4 1 .3 1 .3 .9 .3 1 .2 1-.4 1-.6 1-.8 1-1.1 1-.8 1-.4 1-.3 1-.1 1 0 1 .1 1 .1 1 .2 1 .3 1 0 1 .2 1 .2 1 .1 .9 .3 1 .3 1 .1 1 0 1 0 1 .1 1-.1 1-.1 1 0 1-.1 1 0 1-.4 1-.7 1-.4 1-.5 1-.6 1-.4 1 .1 1 .6 .9 1 1 .7 1 .2 1 .3 1 .1 1-.2 1 0 1 0 1 0 1-.1 1-.1 1-.2 1 .3 1 0 1 .4 1 .2 1-.2 1-.6 1-.5 .9-.7 1-.4 1-.7 1 .1 1 .6 1 1.1 1 .9 1 .9 1 .7 1 .8 1 .2 1 .3 1 .4 1 .1 1 0 1 .2 1 .2 1-.1 1-.1 .9-.1 1 0 1 0 1 0 1-.1 1-.2 1-.3 1-.1 1-.2 1-.1 1 0 1-.1 1-.2 1-.2 1 0 1-.1 1-.1 1-.1 1-.1 1-.3 .9-.1 1-.2 1-.3 1-.2 1-.2 1-.1 1-.1 1 .1 1 .2 1 .1 1 .1 1 0 1 .3 1 .2 1 0 1 .2 1-.1 1 .2 1 .2 .9 .1 1 .1 1-.2 1-.2 1-.2 1 .1 1 .1 1-.2 1-.3 1 0 1 0 1-.1 1-.1 1-.3 1-.1 1 .1 1 0 1 0 1-.2 .9-.2 1 0 1 .1 1 .2 1 0 1 .1 1 0 1 .1 1 0 1 .1 1 0 1 .3 1 .1 1 0 1 .1 1-.1 1-.1 1-.1 1 .2 .9-.1 1 .1 1 .2 1-.1 1-.3 1-.1 1 0 1 0 1 0 1-.3 1 0 1-.1 1 0 1 .1 1-.3 1-.1 1-.1 1-.1 1 0 .9 0 1 .1 1 .1 1 .1 1 .2 1 .1 1 0 1-.1 1-1.2 1-2.7 .5-1.9" fill="none" stroke="#f0f0f0" stroke-width="1"/>
<path d="M30.0 700.8l1-3.5 1-1.9 1-1.1 1-.3 1 .5 1 1.3 1 1.5 1 1.7 1 1.9 .9 2.2 1 2.1 1 2.1 1 2.4 1 2.4 1 2.2 1 1.8 1 1.7 1 1.6 1 1 1 .9 1 .6 1 .5 1 .4 1-.1 1-.2 1-.3 1-.2 1 0 .9 0 1 .1 1 .4 1 .6 1 1 1 .9 1 .5 1 .2 1-.2 1-.3 1-.4 1-.3 1-.6 1-.5 1-.7 1-1 1-1.1 1-1.2 1-1.1 1-1 .9-1.1 1-.8 1-.8 1-.5 1-.5 1-.4 1-.2 1-.1 1 .1 1 .2 1 .1 1-.1 1-.2 1-.3 1-.3 1 0 1 .3 1 .8 1 1.1 .9 1.3 1 1.6 1 1.5 1 1.5 1 1.5 1 1.3 1 1.1 1 .9 1 .7 1 .2 1 .1 1-.1 1-.3 1-.4 1-.5 1-.7 1-.7 1-.6 1-.7 .9-.8 1-.9 1-.9 1-.9 1-.9 1-1 1-.6 1-.5 1-.1 1 .2 1 .5 1 .6 1 .7 1 .6 1 .6 1 .6 1 .5 1 0 1-.1 .9-.5 1-.7 1-.8 1-.8 1-.9 1-.8 1-.7 1-.4 1 0 1 .1 1 .4 1 .3 1 .4 1 .3 1 .4 1 .4 1 .2 1 0 1-.1 .9-.3 1-.3 1-.5 1-.5 1-.4 1-.5 1-.4 1-.4 1-.3 1-.2 1-.4 1-.6 1-.8 1-.8 1-.6 1-.3 1 .1 1 .7 1 1.4 1 2.3 .9 2.3 1 2 1 1.6 1 1 1 .7 1 .4 1 .2 1 0 1-.2 1-.4 1-.4 1-.6 1-.6 1-.7 1-.6 1-.6 1-.4 1-.3 1-.2 .9-.2 1-.1 1 0 1 .1 1 .2 1 .3 1 .2 1 .4 1 .3 1 .4 1 .3 1 .4 1 .2 1 .5 1 .5 1 .5 1 .4 1 .3 1 .3 .9 .3 1 .2 1 .1 1 .1 1-.1 1-.2 1-.5 1-.6 1-.7 1-.6 1-.6 1-.6 1-.7 1-.6 1-.4 1-.2 1-.2 1 0 1 .1 .9 .1 1 .3 1 .2 1 .1 1 .1 1 .2 1 .1 1 0 1 .2 1 0 1-.1 1-.2 1-.3 1-.4 1-.5 1-.3 1-.1 1 .1 1 .3 .9 .2 1 .1 1 0 1-.2 1-.3 1-.3 1-.4 1-.7 1-.6 1-.8 1-.7 1-.9 1-1 1-1.1 1-1.2 1-1 1-.5 1 .1 1 .5 1 .8 .9 .8 1 .9 1 .8 1 .7 1 .7 1 .5 1 .5 1 .4 1 .4 1 .7 1 1.1 1 1.2 1 1.1 1 .7 1 .5 1 .3 1 0 1-.1 1-.3 .9-.2 1-.4 1-.4 1-.5 1-.4 1-.3 1-.3 1-.2 1-.2 1-.2 1-.1 1 0 1 0 1 .1 1 .1 1 .1 1 .1 1 .2 1 .1 .9 .3 1 .1 1 .2 1 .2 1 0 1 .1 1 .1 1 .1 1-.1 1-.1 1-.3 1-.3 1-.3 1-.3 1-.4 1-.4 1-.3 1-.4 1-.3 .9-.2 1-.4 1-.2 1-.2 1 0 1 .1 1 0 1 0 1 .1 1 .1 1 .2 1 .2 1 .2 1 .1 1 .2 1 .2 1 .2 1 .2 1 .1 .9 .1 1 .2 1 .2 1 0 1 0 1 0 1-.1 1-.2 1-.3 1-.3 1-.3 1-.3 1-.3 1-.2 1-.2 1-.2 1-.1 1-.2 1 0 1-.1 .9-.1 1-.1 1 .1 1 .3 1 .6 1 .6 1 .9 1 .7 1 .5 1 .2 1 0 1-.1 1-.2 1-.4 1-.6 1-.9 1-1.1 1-1.4 1-1.4 .9-1.5 1-1.4 1-1.4 1-.8 1-.3 1 .2 1 .7 1 .9 1 1 1 1.1 1 1.1 1 .9 1 .7 1 .6 1 .6 1 .5 1 .6 1 .6 1 .4 .9 .4 1 .4 1 .5 1 .3 1 .4 1 .2 1 .1 1-.1 1-.2 1-.4 1-.3 1-.4 1-.6 1-.5 1-.7 1-.6 1-.5 1-.5 1-.3 .9-.3 1-.2 1-.3 1-.1 1-.1 1 .1 1 .1 1 .3 1 .3 1 0 1-.3 1-.7 1-1.2 1-1.4 1-1.4 1-1.2 1-.7 1-.4 1 .2 .9 .5 1 .9 1 1.2 1 1.3 1 1.2 1 1.2 1 1.1 1 .9 1 .8 1 .8 1 .5 1 .5 1 .3 1 .1 1 .2 1 .1 1 .1 1-.1 1 0 1-.1 .9-.1 1 .1 1-.1 1 0 1-.1 1-.2 1-.3 1-.3 1-.3 1-.3 1-.4 1-.1 1-.2 1-.2 1-.2 1-.2 1-.1 1-.2 1-.1 .9 0 1-.2 1 0 1-.1 1 0 1 0 1 .1 1 .2 1 .1 1 0 1 .2 1 .2 1 .2 1 .2 1 .2 1 .3 1 .2 1 .3 1 .2 .9 0 1 .1 1 0 1 .2 1 .1 1 .1 1 0 1 .1 1-.1 1 0 1-.3 1-.3 1-.5 1-.4 1-.4 1-.3 1-.2 1 0 1 0 .9 0 1 .2 1 .1 1 .2 1 .1 1 .2 1 .3 1 .2 1 .1 1 .2 1 .2 1 .1 1 0 1 0 1 .1 1 0 1 .1 1 0 1-.1 1-.1 .9-.2 1-.1 1-.1 1-.2 1-.2 1-.2 1-.3 1-.2 1-.1 1 0 1-.1 1 .1 1 0 1 0 1 .1 1 0 1-.1 1-.1 1-.1 .9 0 1 0 1-.1 1-.1 1 0 1 0 1 0 1 .1 1 0 1 .2 1 .1 1 .2 1 .2 1 .2 1 .1 1 0 1 0 1 0 1-.1 .9 .1 1 .1 1 0 1 .2 1 .3 1 .2 1 .2 1 0 1 0 1 0 1 0 1 0 1-.1 1-.1 1 0 1 0 1-.1 1-.1 1-.2 .9-.2 1-.2 1-.2 1-.1 1-.2 1-.2 1-.2 1-.1 1-.1 1-.1 1-.1 1 0 1 0 1-.1 1-.1 1-.1 1-.1 1-.1 1-.1 .9-.2 1-.3 1-.4 1-.4 1-.4 1-.3 1-.1 1-.1 1 .2 1 .2 1 .3 1 .5 1 .5 1 .6 1 .5 1 .6 1 .5 1 .3 1 .2 1 .1 .9 0 1 0 1-.1 1-.1 1-.2 1-.3 1-.4 1-.3 1-.2 1-.3 1-.2 1-.1 1-.1 1 0 1 0 1 .3 1 .3 1 .5 1 .5 .9 .4 1 .5 1 .3 1 .3 1 .3 1 .1 1 .1 1 0 1 0 1 0 1 .1 1 .1 1 .1 1 .1 1 0 1 0 1 0 1 0 1 .1 .9-.1 1-.2 1-.2 1-.3 1-.4 1-.3 1-.4 1-.3 1-.3 1-.3 1-.3 1-.2 1-.3 1-.2 1-.2 1-.2 1-.1 1 0 1 .1 .9 .2 1 .3 1 .3 1 .2 1 .3 1 .2 1 .4 1 .3 1 .3 1 .3 1 .3 1 .4 1 .4 1 .3 1 .2 1 .1 1-.1 1-.2 1-.2 .9-.3 1-.4 1-.3 1-.4 1-.4 1-.3 1-.3 1-.3 1-.2 1-.2 1-.2 1-.2 1-.2 1-.1 1-.1 1 0 1 0 1 .2 1 .1 1 .1 .9 .2 1 .1 1 .1 1 .2 1 .2 1 .2 1 .3 1 .2 1 .1 1 .1 1 .1 1 .2 1 .1 1 .1 1 0 1 .1 1 .1 1 0 1 .2 .9 .2 1 0 1 .1 1 0 1 0 1 .1 1 0 1 .1 1 0 1-.1 1 0 1 .1 1 0 1 .2 1 0 1-.2 1-.2 1-.4 1-.5 .9-.5 1-.4 1-.2 1-.2 1-.1 1-.1 1 .1 1 .1 1 .1 1 .1 1 .2 1 .2 1 .2 1 .3 1 .2 1 .2 1 0 1 .1 1-.1 .9-.2 1-.2 1-.2 1-.2 1-.3 1-.3 1-.3 1-.2 1-.2 1-.2 1-.2 1-.2 1-.1 1-.1 1 0 1 .1 1 .2 1 .4 1 .3 .9 .5 1 .4 1 .4 1 .4 1 .2 1 .1 1 .2 1 .1 1 .1 1 0 1 .1 1 0 1 .1 1 .1 1 0 1 0 1-.1 1-.1 1-.2 1-.2 .9-.2 1-.3 1-.3 1-.3 1-.4 1-.4 1-.4 1-.4 1-.3 1-.2 1-.2 1-.3 1-.2 1 0 1 .1 1 .2 1 .3 1 .2 1 .3 .9 .3 1 .4 1 .3 1 .2 1 .2 1 .1 1 .2 1 .1 1 .2 1 .2 1 .4 1 .7 1 1 1 1.2 1 1.2 1 1.2 1 .9 1 .3 1-.2 .9-.6 1-.8 1-1 1-1.1 1-1.1 1-1 1-.9 1-.8 1-.6 1-.5 1-.3 1-.3 1-.1 1 .1 1 .2 1 .2 1 .4 1 .2 1 .2 .9 0 1 .1 1-.1 1 0 1 0 1-.1 1 0 1 .1 1 0 1 0 1 .1 1 .1 1 .1 1 .1 1 .1 1 .2 1 .2 1 .2 1 .3 1 .2 .9 .3 1 .3 1 .1 1-.2 1-.3 1-.7 1-.7 1-.6 1-.5 1-.4 1-.3 1-.1 1 0 1 0 1 .1 1 .1 1 .1 1 .2 1 .1 .9 .2 1 .2 1 .2 1 .2 1 .1 1 .1 1 0 1-.1 1 0 1 0 1 0 1-.2 1-.3 1-.3 1-.5 1-.4 1-.5 1-.3 1 0 .9 .3 1 .5 1 .4 1 .4 1 .2 1 .2 1 .1 1 0 1 0 1 0 1 0 1-.1 1 .1 1 0 1 .1 1 .2 1 .1 1-.2 1-.3 .9-.4 1-.4 1-.5 1-.4 1-.1 1 .4 1 .5 1 .7 1 .7 1 .8 1 .5 1 .5 1 .5 1 .3 1 .2 1 .2 1 .2 1 .1 1 0 .9 0 1 0 1 0 1 0 1 0 1-.1 1-.1 1-.2 1-.2 1-.1 1-.1 1-.1 1-.1 1-.2 1-.1 1-.1 1-.1 1-.1 1-.1 1-.1 .9-.2 1-.2 1-.2 1-.2 1-.2 1-.2 1-.1 1-.1 1 0 1 .1 1 0 1 .1 1 .1 1 .2 1 .1 1 .1 1 .1 1 .1 1 .1 .9 .1 1 .2 1 0 1-.1 1-.1 1 0 1 0 1-.1 1-.1 1-.1 1-.1 1-.1 1-.1 1-.1 1-.2 1 0 1 0 1-.1 1 0 .9-.2 1-.1 1 0 1 .1 1 0 1 .1 1 0 1 .1 1 0 1 .1 1 0 1 .1 1 .1 1 .1 1 .1 1 0 1 0 1 0 1 0 .9 0 1 0 1 .1 1 .1 1-.1 1-.1 1-.1 1 0 1 0 1-.1 1-.1 1-.1 1-.1 1 0 1-.1 1-.1 1-.1 1-.1 1-.1 .9 0 1 0 1 0 1 .1 1 .1 1 .1 1 0 1 .1 1-.3 1-1.1 .5-.9" fill="none" stroke="#f58a1e" stroke-width="1"/>
</svg>
<div class="sep" style="left:0px;top:24px;width:27px;height:1px;background:#050608"></div>
<div class="sep" style="left:27px;top:0px;width:1px;height:24px;background:#050608"></div>
<div class="sep" style="left:460px;top:0px;width:41px;height:24px;background:#54555d"></div>
<div class="a" style="left:27px;top:-1.5px;width:63.7px;text-align:center;color:#e8e8e8"><span>分</span><span>时</span></div>
<div class="a" style="left:90.7px;top:-1.5px;width:62.999999999999986px;text-align:center;color:#e8e8e8"><span>多</span><span>日</span></div>
<div class="a" style="left:153.7px;top:-1.5px;width:54.0px;text-align:center;color:#e8e8e8"><span class="l">1</span><span>分</span></div>
<div class="a" style="left:207.7px;top:-1.5px;width:53.69999999999999px;text-align:center;color:#e8e8e8"><span class="l">5</span><span>分</span></div>
<div class="a" style="left:261.4px;top:-1.5px;width:66.20000000000005px;text-align:center;color:#e8e8e8"><span class="l">1</span><span class="l">5</span><span>分</span></div>
<div class="a" style="left:327.6px;top:-1.5px;width:65.69999999999999px;text-align:center;color:#e8e8e8"><span class="l">3</span><span class="l">0</span><span>分</span></div>
<div class="a" style="left:393.3px;top:-1.5px;width:66.69999999999999px;text-align:center;color:#e8e8e8"><span class="l">6</span><span class="l">0</span><span>分</span></div>
<div class="a" style="left:460px;top:-1.5px;width:41px;text-align:center;color:#e8e8e8"><span>日</span></div>
<div class="a" style="left:501px;top:-1.5px;width:42px;text-align:center;color:#e8e8e8"><span>周</span></div>
<div class="a" style="left:543px;top:-1.5px;width:42.5px;text-align:center;color:#e8e8e8"><span>月</span></div>
<div class="a" style="left:661.5px;top:-1.5px;width:114.0px;text-align:center;color:#3fb0e0"><span class="l">A</span><span class="l">I</span><span>交</span><span>易</span><span>策</span><span>略</span></div>
<div class="a" style="left:775.5px;top:-1.5px;width:37.799999999999955px;text-align:center;color:#e8e8e8"><span class="l">F</span><span class="l">9</span></div>
<div class="a" style="left:813.3px;top:-1.5px;width:75.20000000000005px;text-align:center;color:#e8e8e8"><span>不</span><span>复</span><span>权</span></div>
<div class="a" style="left:888.5px;top:-1.5px;width:95.5px;text-align:center;color:#e8e8e8"><span>超</span><span>级</span><span>叠</span><span>加</span></div>
<div class="a" style="left:984px;top:-1.5px;width:58px;text-align:center;color:#e8e8e8"><span>画</span><span>线</span></div>
<div class="a" style="left:1042px;top:-1.5px;width:57px;text-align:center;color:#e8e8e8"><span>工</span><span>具</span></div>
<div class="sep" style="left:91px;top:0px;width:1px;height:24px;background:#050608"></div>
<div class="sep" style="left:154px;top:0px;width:1px;height:24px;background:#050608"></div>
<div class="sep" style="left:208px;top:0px;width:1px;height:24px;background:#050608"></div>
<div class="sep" style="left:261px;top:0px;width:1px;height:24px;background:#050608"></div>
<div class="sep" style="left:328px;top:0px;width:1px;height:24px;background:#050608"></div>
<div class="sep" style="left:393px;top:0px;width:1px;height:24px;background:#050608"></div>
<div class="sep" style="left:543px;top:0px;width:1px;height:24px;background:#050608"></div>
<div class="sep" style="left:586px;top:0px;width:1px;height:24px;background:#050608"></div>
<div class="sep" style="left:662px;top:0px;width:1px;height:24px;background:#050608"></div>
<div class="sep" style="left:776px;top:0px;width:1px;height:24px;background:#050608"></div>
<div class="sep" style="left:813px;top:0px;width:1px;height:24px;background:#050608"></div>
<div class="sep" style="left:888px;top:0px;width:1px;height:24px;background:#050608"></div>
<div class="sep" style="left:984px;top:0px;width:1px;height:24px;background:#050608"></div>
<div class="sep" style="left:1042px;top:0px;width:1px;height:24px;background:#050608"></div>
<div class="sep" style="left:1099px;top:0px;width:1px;height:24px;background:#050608"></div>
<div class="sep" style="left:1138px;top:0px;width:1px;height:24px;background:#050608"></div>
<div class="sep" style="left:1174px;top:0px;width:1px;height:24px;background:#050608"></div>
<div class="sep" style="left:592px;top:5px;width:8px;height:2px;background:#d8dce6"></div>
<div style="position:absolute;left:592px;top:8px;width:0;height:0;border-left:4px solid transparent;border-right:4px solid transparent;border-top:5px solid #d8dce6"></div>
<div class="sep" style="left:605px;top:0px;width:2px;height:2px;background:#707070"></div>
<div class="sep" style="left:605px;top:6px;width:2px;height:2px;background:#707070"></div>
<div class="sep" style="left:605px;top:12px;width:2px;height:2px;background:#707070"></div>
<div class="sep" style="left:605px;top:18px;width:2px;height:2px;background:#707070"></div>
<svg style="position:absolute;left:1100px;top:0" width="110" height="24" viewBox="0 0 110 24">
<g fill="none" stroke="#d2d2d2" stroke-width="1.7" stroke-linejoin="round">
<path d="M18.47,1.24 L20.36,-0.77 L23.92,1.29 L23.13,3.93 L24.30,5.96 L26.98,6.59 L26.98,10.71 L24.30,11.34 L23.13,13.37 L23.92,16.01 L20.36,18.07 L18.47,16.06 L16.13,16.06 L14.24,18.07 L10.68,16.01 L11.47,13.37 L10.30,11.34 L7.62,10.71 L7.62,6.59 L10.30,5.96 L11.47,3.93 L10.68,1.29 L14.24,-0.77 L16.13,1.24Z"/>
<circle cx="17.3" cy="8.6" r="3.9"/>
<circle cx="56" cy="9.6" r="10.2"/>
<path d="M52.8,6.8 a3.3,3.3 0 1 1 5,2.7 c-1.3,0.8 -1.8,1.5 -1.8,3"/>
<path d="M84.5,1.5 l7,7 -7,7 M90.8,1.5 l7,7 -7,7"/>
</g><circle cx="56" cy="14.9" r="1.1" fill="#d2d2d2"/></svg>
<div class="sep" style="left:28px;top:56px;width:1181px;height:1px;background:#050608"></div>
<div class="t" id="r1" style="left:30.5px;top:30.7px;color:#e8e8e8;letter-spacing:-0.57px"><span class="l">601366.SH</span></div>
<div class="t" id="r1b" style="left:136.8px;top:30.7px;color:#e8e8e8;letter-spacing:0.80px"><span class="l">[</span><span>利群股份</span><span class="l">]</span></div>
<div class="t" id="r2" style="left:254.3px;top:30.7px;color:#e8e8e8;letter-spacing:0.49px"><span class="l">2025/12/19</span></div>
<div class="t" id="r3" style="left:383.0px;top:30.7px;color:#e8e8e8;letter-spacing:0.00px"><span>收</span></div>
<div class="t" id="r4" style="left:407.2px;top:30.7px;color:#22c850;letter-spacing:-0.87px"><span class="l">5.95</span></div>
<div class="t" id="r5" style="left:463.6px;top:30.7px;color:#e8e8e8;letter-spacing:0.00px"><span>幅</span></div>
<div class="t" id="r6" style="left:486.5px;top:30.7px;color:#22c850;letter-spacing:0.02px"><span class="l">-1.49%(-0.09)</span></div>
<div class="t" id="r7" style="left:634.6px;top:30.7px;color:#e8e8e8;letter-spacing:0.00px"><span>开</span></div>
<div class="t" id="r8" style="left:659.2px;top:30.7px;color:#22c850;letter-spacing:-0.33px"><span class="l">5.70</span></div>
<div class="t" id="r9" style="left:715.0px;top:30.7px;color:#e8e8e8;letter-spacing:0.00px"><span>高</span></div>
<div class="t" id="r10" style="left:739.0px;top:30.7px;color:#ff2d2d;letter-spacing:-0.33px"><span class="l">6.46</span></div>
<div class="t" id="r11" style="left:794.6px;top:30.7px;color:#e8e8e8;letter-spacing:0.00px"><span>低</span></div>
<div class="t" id="r12" style="left:819.0px;top:30.7px;color:#22c850;letter-spacing:-0.33px"><span class="l">5.50</span></div>
<div class="t" id="r13" style="left:874.6px;top:30.7px;color:#e8e8e8;letter-spacing:0.00px"><span>均</span></div>
<div class="t" id="r14" style="left:899.0px;top:30.7px;color:#22c850;letter-spacing:0.00px"><span class="l">5.96</span></div>
<div class="t" id="r15" style="left:954.6px;top:30.7px;color:#e8e8e8;letter-spacing:0.85px"><span>量</span><span class="l">216</span><span>万</span></div>
<div class="t" id="r16" style="left:1050.4px;top:30.7px;color:#e8e8e8;letter-spacing:0.00px"><span>换</span></div>
<div style="position:absolute;left:1143px;top:45px;width:14px;height:3px;background:repeating-linear-gradient(90deg,#ff2d2d 0 3px,transparent 3px 5px)"></div>
<svg style="position:absolute;left:1178px;top:28px" width="28" height="26" viewBox="0 0 28 26">
<rect x="2.7" y="2.8" width="23" height="17.2" fill="none" stroke="#b9b9b9" stroke-width="1.6"/>
<text x="14.2" y="16.6" fill="#b9b9b9" font-size="11" font-weight="bold" text-anchor="middle" font-family="Liberation Sans">WP</text>
<path d="M14,20 v3.2 M6.5,23.8 h15" stroke="#b9b9b9" stroke-width="1.6"/></svg>
<div class="t" id="m1" style="left:29.4px;top:63.4px;color:#e8e8e8;letter-spacing:1.00px"><span class="l">MA5</span></div>
<div class="t" id="m2" style="left:84.0px;top:63.4px;color:#f58a1e;letter-spacing:0.20px"><span class="l">5.40</span><svg class="ar" width="10" height="19" viewBox="0 0 10 19"><path d="M5,17.6V1.4M1.3,5.2L5,1.4L8.7,5.2" fill="none" stroke="currentColor" stroke-width="1.6"/></svg></div>
<div class="t" id="m3" style="left:141.6px;top:63.4px;color:#e8e8e8;letter-spacing:1.33px"><span class="l">MA10</span></div>
<div class="t" id="m4" style="left:208.1px;top:63.4px;color:#e3d23a;letter-spacing:0.25px"><span class="l">4.98</span><svg class="ar" width="10" height="19" viewBox="0 0 10 19"><path d="M5,17.6V1.4M1.3,5.2L5,1.4L8.7,5.2" fill="none" stroke="currentColor" stroke-width="1.6"/></svg></div>
<div class="t" id="m5" style="left:266.6px;top:63.4px;color:#e8e8e8;letter-spacing:0.87px"><span class="l">MA20</span></div>
<div class="t" id="m6" style="left:331.8px;top:63.4px;color:#c93fd0;letter-spacing:0.35px"><span class="l">4.78</span><svg class="ar" width="10" height="19" viewBox="0 0 10 19"><path d="M5,17.6V1.4M1.3,5.2L5,1.4L8.7,5.2" fill="none" stroke="currentColor" stroke-width="1.6"/></svg></div>
<div class="t" id="m7" style="left:392.9px;top:63.4px;color:#e8e8e8;letter-spacing:0.27px"><span class="l">MA60</span></div>
<div class="t" id="m8" style="left:457.8px;top:63.4px;color:#1fa247;letter-spacing:0.00px"><span class="l">4.66</span><svg class="ar" width="10" height="19" viewBox="0 0 10 19"><path d="M5,17.6V1.4M1.3,5.2L5,1.4L8.7,5.2" fill="none" stroke="currentColor" stroke-width="1.6"/></svg></div>
<div class="t" id="m9" style="left:517.4px;top:63.4px;color:#e8e8e8;letter-spacing:0.00px"><span class="l">MA120</span></div>
<div class="t" id="m10" style="left:596.4px;top:63.4px;color:#3db6de;letter-spacing:0.10px"><span class="l">4.65</span><svg class="ar" width="10" height="19" viewBox="0 0 10 19"><path d="M5,17.6V1.4M1.3,5.2L5,1.4L8.7,5.2" fill="none" stroke="currentColor" stroke-width="1.6"/></svg></div>
<div class="t" id="m11" style="left:655.4px;top:63.4px;color:#e8e8e8;letter-spacing:0.00px"><span class="l">MA250</span></div>
<div class="t" id="m12" style="left:732.0px;top:63.4px;color:#4664de;letter-spacing:0.00px"><span class="l">4.76</span><svg class="ar" width="10" height="19" viewBox="0 0 10 19"><path d="M5,17.6V1.4M1.3,5.2L5,1.4L8.7,5.2" fill="none" stroke="currentColor" stroke-width="1.6"/></svg></div>
<div class="t" id="m13" style="left:825.8px;top:63.4px;color:#e8e8e8;letter-spacing:0.37px"><span class="l">2017/04/12-2025/12/19(2114</span><span>日</span><span class="l">)</span></div>
<div style="position:absolute;left:827px;top:82px;width:317px;height:1px;background:#e8e8e8"></div>
<div style="position:absolute;left:1147px;top:64px;width:0;height:0;border-left:10px solid transparent;border-right:10px solid transparent;border-top:17px solid #9a9a9a"></div>
<svg style="position:absolute;left:1176px;top:60px" width="28" height="26" viewBox="0 0 28 26">
<path d="M16.5,10 v-2.5 a4.3,4.3 0 0 1 8.6,0 v1.8" fill="none" stroke="#f0b63c" stroke-width="1.8"/>
<rect x="2.4" y="10.2" width="15.4" height="12.4" rx="1.6" fill="#f0b63c"/>
<circle cx="10.1" cy="14.6" r="1.5" fill="#16181d"/><rect x="9.2" y="14.6" width="1.8" height="4.8" fill="#16181d"/></svg>
<div class="sep" style="left:0px;top:129px;width:27px;height:104px;background:#54555d"></div>
<div class="sep" style="left:0px;top:129px;width:27px;height:1px;background:#050608"></div>
<div class="sep" style="left:0px;top:233px;width:27px;height:1px;background:#050608"></div>
<div class="sep" style="left:0px;top:366px;width:27px;height:1px;background:#050608"></div>
<div class="sep" style="left:0px;top:499px;width:27px;height:1px;background:#050608"></div>
<div class="sep" style="left:0px;top:604px;width:27px;height:1px;background:#050608"></div>
<div class="sep" style="left:0px;top:738px;width:27px;height:1px;background:#050608"></div>
<div class="a" style="left:0px;top:39px;width:22px;text-align:center">分</div>
<div class="a" style="left:0px;top:67px;width:22px;text-align:center">时</div>
<div class="a" style="left:0px;top:95px;width:22px;text-align:center">图</div>
<div class="a" style="left:0px;top:143px;width:22px;text-align:center"><span class="l">K</span></div>
<div class="a" style="left:0px;top:172px;width:22px;text-align:center">线</div>
<div class="a" style="left:0px;top:200px;width:22px;text-align:center">图</div>
<div class="a" style="left:0px;top:248px;width:22px;text-align:center"><span class="l">T</span></div>
<div class="a" style="left:0px;top:276px;width:22px;text-align:center"><span class="l">I</span></div>
<div class="a" style="left:0px;top:304px;width:22px;text-align:center"><span class="l">C</span></div>
<div class="a" style="left:0px;top:331px;width:22px;text-align:center"><span class="l">K</span></div>
<div class="a" style="left:0px;top:384px;width:22px;text-align:center">成</div>
<div class="a" style="left:0px;top:411px;width:22px;text-align:center">交</div>
<div class="a" style="left:0px;top:439px;width:22px;text-align:center">明</div>
<div class="a" style="left:0px;top:466px;width:22px;text-align:center">细</div>
<div class="a" style="left:0px;top:516px;width:22px;text-align:center">分</div>
<div class="a" style="left:0px;top:543px;width:22px;text-align:center">价</div>
<div class="a" style="left:0px;top:571px;width:22px;text-align:center">表</div>
<div class="a" style="left:0px;top:619px;width:22px;text-align:center">深</div>
<div class="a" style="left:0px;top:647px;width:22px;text-align:center">度</div>
<div class="a" style="left:0px;top:674px;width:22px;text-align:center">资</div>
<div class="a" style="left:0px;top:703px;width:22px;text-align:center">料</div>
<div class="a" style="left:0px;top:754px;width:22px;text-align:center">超</div>
<div class="t" id="mx" style="left:53.2px;top:109.4px;color:#ff2d2d;letter-spacing:-0.30px"><span class="l">20.60</span></div>
<div class="t" id="mn" style="left:781.0px;top:551.8px;color:#22c850;letter-spacing:-0.47px"><span class="l">3.40</span></div>
<div class="t" id="y21" style="left:1115.8px;top:98.4px;color:#aaaaaa;letter-spacing:-0.13px"><span class="l">21.0</span></div>
<div class="t" id="y18" style="left:1115.2px;top:176.4px;color:#aaaaaa;letter-spacing:-0.13px"><span class="l">18.0</span></div>
<div class="t" id="y15" style="left:1115.2px;top:253.4px;color:#aaaaaa;letter-spacing:-0.13px"><span class="l">15.0</span></div>
<div class="t" id="y12" style="left:1115.2px;top:331.4px;color:#aaaaaa;letter-spacing:-0.13px"><span class="l">12.0</span></div>
<div class="t" id="y9" style="left:1115.8px;top:408.4px;color:#aaaaaa;letter-spacing:0.20px"><span class="l">9.0</span></div>
<div class="t" id="y6" style="left:1115.8px;top:485.4px;color:#aaaaaa;letter-spacing:0.20px"><span class="l">6.0</span></div>
<div class="t" id="y3" style="left:1115.8px;top:552.6px;color:#aaaaaa;letter-spacing:0.20px"><span class="l">3.0</span></div>
<div class="t" id="v0" style="left:1115.8px;top:628.7px;color:#aaaaaa;letter-spacing:0.00px"><span class="l">0</span></div>
<div class="t" id="d0" style="left:1115.8px;top:705.4px;color:#aaaaaa;letter-spacing:-0.20px"><span class="l">0.00</span></div>
<div class="t" id="x17-04" style="left:30.4px;top:739.5px;color:#aaaaaa;letter-spacing:0.55px"><span class="l">17-04</span></div>
<div class="t" id="x17-12" style="left:109.4px;top:739.5px;color:#aaaaaa;letter-spacing:0.55px"><span class="l">17-12</span></div>
<div class="t" id="x18-08" style="left:190.4px;top:739.5px;color:#aaaaaa;letter-spacing:0.55px"><span class="l">18-08</span></div>
<div class="t" id="x19-04" style="left:269.4px;top:739.5px;color:#aaaaaa;letter-spacing:0.55px"><span class="l">19-04</span></div>
<div class="t" id="x19-12" style="left:351.4px;top:739.5px;color:#aaaaaa;letter-spacing:0.55px"><span class="l">19-12</span></div>
<div class="t" id="x20-08" style="left:433.0px;top:739.5px;color:#aaaaaa;letter-spacing:0.55px"><span class="l">20-08</span></div>
<div class="t" id="x21-04" style="left:513.0px;top:739.5px;color:#aaaaaa;letter-spacing:0.30px"><span class="l">21-04</span></div>
<div class="t" id="x21-12" style="left:594.0px;top:739.5px;color:#aaaaaa;letter-spacing:0.55px"><span class="l">21-12</span></div>
<div class="t" id="x22-08" style="left:674.0px;top:739.5px;color:#aaaaaa;letter-spacing:0.55px"><span class="l">22-08</span></div>
<div class="t" id="x23-04" style="left:755.0px;top:739.5px;color:#aaaaaa;letter-spacing:0.30px"><span class="l">23-04</span></div>
<div class="t" id="x23-12" style="left:836.0px;top:739.5px;color:#aaaaaa;letter-spacing:0.55px"><span class="l">23-12</span></div>
<div class="t" id="x24-08" style="left:916.0px;top:739.5px;color:#aaaaaa;letter-spacing:0.55px"><span class="l">24-08</span></div>
<div class="t" id="x25-04" style="left:996.0px;top:739.5px;color:#aaaaaa;letter-spacing:0.30px"><span class="l">25-04</span></div>
<div class="t" id="x25-12" style="left:1077.0px;top:739.5px;color:#aaaaaa;letter-spacing:0.55px"><span class="l">25-12</span></div>
<div style="position:absolute;left:29px;top:581px;width:27px;height:27px;border-radius:4px;background:#2a2b31"></div>
<div class="t" id="vq" style="left:35.8px;top:585.8px;color:#e8e8e8;letter-spacing:0.00px"><span style="font-size:22px;display:inline-block;transform:scaleX(0.8)">?</span></div>
<div class="t" id="v1" style="left:57.2px;top:584.4px;color:#e8e8e8;letter-spacing:-0.88px"><span class="l">VOL: 216</span><span>万</span></div>
<div class="t" id="v2" style="left:170.8px;top:584.4px;color:#e8e8e8;letter-spacing:-0.02px"><span class="l">MA(5): 127</span><span>万</span></div>
<div class="t" id="v3" style="left:306.9px;top:584.4px;color:#f58a1e;letter-spacing:-0.08px"><span class="l">MA(10): 73</span><span>万</span></div>
<div class="t" id="v4" style="left:441.1px;top:584.4px;color:#c93fd0;letter-spacing:-0.02px"><span class="l">MA(20): 42</span><span>万</span></div>
<div style="position:absolute;left:29px;top:657px;width:27px;height:27px;border-radius:4px;background:#2a2b31"></div>
<div class="t" id="mq" style="left:35.8px;top:661.8px;color:#e8e8e8;letter-spacing:0.00px"><span style="font-size:22px;display:inline-block;transform:scaleX(0.8)">?</span></div>
<div class="t" id="c1" style="left:55.8px;top:660.1px;color:#e8e8e8;letter-spacing:-0.42px"><span class="l">MACD(12,26,9)</span></div>
<div class="t" id="c2" style="left:211.0px;top:660.1px;color:#e8e8e8;letter-spacing:-0.66px"><span class="l">DIF: 0.2419</span></div>
<div class="t" id="c3" style="left:327.4px;top:660.1px;color:#f58a1e;letter-spacing:-0.78px"><span class="l">DEA: 0.0835</span></div>
<div class="t" id="c4" style="left:449.6px;top:660.1px;color:#3db6de;letter-spacing:-0.36px"><span class="l">MACD: 0.3168</span></div>
<svg style="position:absolute;left:1210px;top:318px" width="8" height="175" viewBox="0 0 8 175"><path d="M2,0 L8,6 V169 L2,175 Z" fill="#2c2d33"/><path d="M3.5,78 l4,4 -4,4" stroke="#9a9a9a" stroke-width="1.3" fill="none"/></svg>
</body></html>
